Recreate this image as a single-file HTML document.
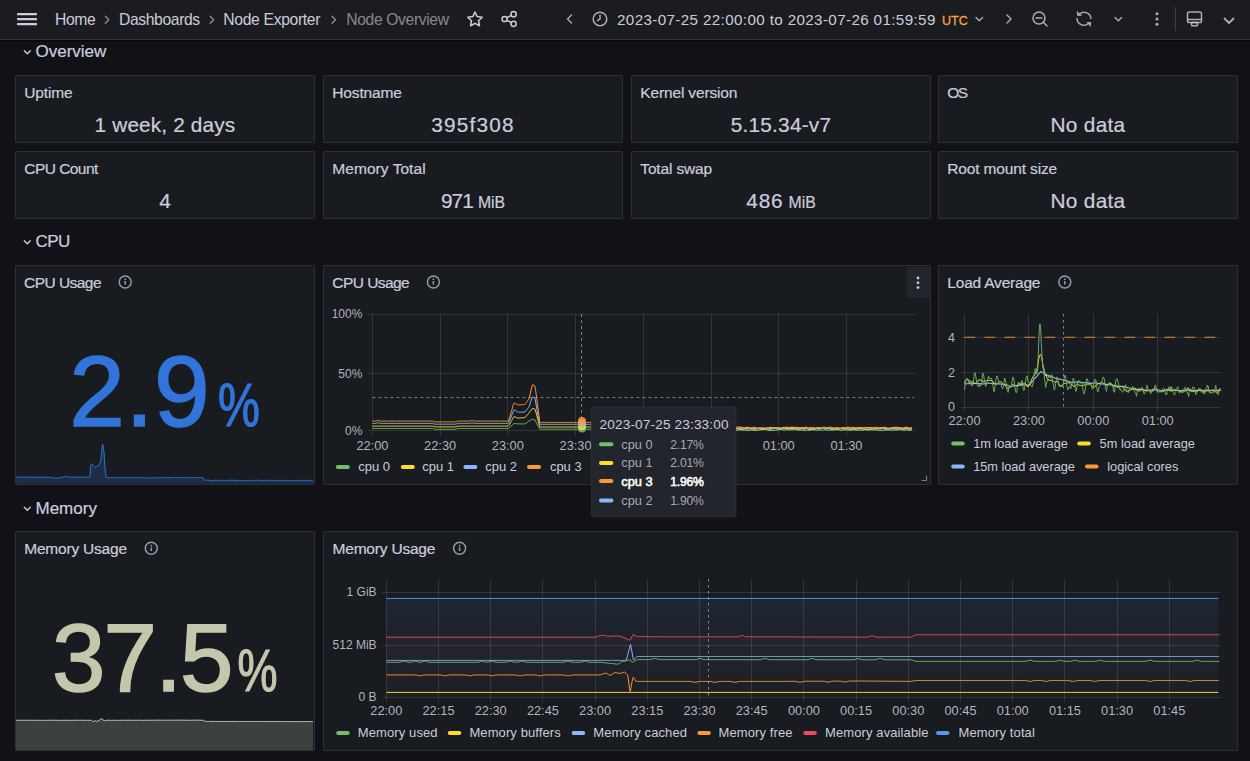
<!DOCTYPE html><html><head><meta charset="utf-8"><style>
html,body{margin:0;padding:0;width:1250px;height:761px;overflow:hidden;background:#111217;}
body{position:relative;font-family:"Liberation Sans",sans-serif;}
.t{position:absolute;white-space:nowrap;}
.p{position:absolute;box-sizing:border-box;background:#181b1f;border:1px solid rgba(204,204,220,0.12);border-radius:2px;}
svg{position:absolute;overflow:visible;}
</style></head><body>
<div style="position:absolute;left:0;top:40px;width:1250px;height:1px;background:#07080a"></div><div style="position:absolute;left:0;top:41px;width:1250px;height:1px;background:#0c0d10"></div>
<div style="position:absolute;left:0;top:0;width:1250px;height:39px;background:#1b1c20;border-bottom:1px solid rgba(204,204,220,0.14)"></div>
<svg style="left:0px;top:0px;" width="60" height="39" viewBox="0 0 60 39"><g fill="#ccccdc"><rect x="17" y="13" width="20" height="2.2" rx="0.5"/><rect x="17" y="18" width="20" height="2.2" rx="0.5"/><rect x="17" y="23" width="20" height="2.2" rx="0.5"/></g></svg>
<svg style="left:0px;top:0px;" width="1" height="1" viewBox="0 0 1 1"><polyline points="105.3,16.3 108.8,19.8 105.3,23.3" fill="none" stroke="rgba(204,204,220,0.65)" stroke-width="1.3" stroke-linecap="round" stroke-linejoin="round"/></svg>
<svg style="left:0px;top:0px;" width="1" height="1" viewBox="0 0 1 1"><polyline points="210.2,16.3 213.7,19.8 210.2,23.3" fill="none" stroke="rgba(204,204,220,0.65)" stroke-width="1.3" stroke-linecap="round" stroke-linejoin="round"/></svg>
<svg style="left:0px;top:0px;" width="1" height="1" viewBox="0 0 1 1"><polyline points="332,16.3 335.5,19.8 332,23.3" fill="none" stroke="rgba(204,204,220,0.65)" stroke-width="1.3" stroke-linecap="round" stroke-linejoin="round"/></svg>
<svg style="left:0px;top:0px;" width="1" height="1" viewBox="0 0 1 1"><polygon points="475.00,12.00 477.17,16.61 482.23,17.25 478.52,20.74 479.47,25.75 475.00,23.30 470.53,25.75 471.48,20.74 467.77,17.25 472.83,16.61" fill="none" stroke="#ccccdc" stroke-width="1.5" stroke-linejoin="round"/></svg>
<svg style="left:0px;top:0px;" width="1" height="1" viewBox="0 0 1 1"><g fill="none" stroke="#ccccdc" stroke-width="1.5"><circle cx="513.6" cy="14.2" r="2.6"/><circle cx="513.6" cy="23.8" r="2.6"/><circle cx="504.6" cy="19" r="2.6"/><line x1="507" y1="17.7" x2="511.3" y2="15.4"/><line x1="507" y1="20.3" x2="511.3" y2="22.6"/></g></svg>
<svg style="left:0px;top:0px;" width="1" height="1" viewBox="0 0 1 1"><polyline points="571.5,15 567.5,19 571.5,23" fill="none" stroke="rgba(204,204,220,0.82)" stroke-width="1.4" stroke-linecap="round" stroke-linejoin="round"/></svg>
<svg style="left:0px;top:0px;" width="1" height="1" viewBox="0 0 1 1"><g fill="none" stroke="rgba(204,204,220,0.82)" stroke-width="1.5"><circle cx="600" cy="19" r="6.8"/><polyline points="600,15 600,19.2 597.5,20.5" stroke-linecap="round" stroke-linejoin="round"/></g></svg>
<svg style="left:0px;top:0px;" width="1" height="1" viewBox="0 0 1 1"><polyline points="976,17.5 979.3,20.8 982.6,17.5" fill="none" stroke="rgba(204,204,220,0.82)" stroke-width="1.4" stroke-linecap="round" stroke-linejoin="round"/></svg>
<svg style="left:0px;top:0px;" width="1" height="1" viewBox="0 0 1 1"><polyline points="1007,15 1011,19 1007,23" fill="none" stroke="rgba(204,204,220,0.82)" stroke-width="1.4" stroke-linecap="round" stroke-linejoin="round"/></svg>
<svg style="left:0px;top:0px;" width="1" height="1" viewBox="0 0 1 1"><g fill="none" stroke="rgba(204,204,220,0.82)" stroke-width="1.5" stroke-linecap="round"><circle cx="1039" cy="18" r="6"/><line x1="1043.5" y1="22.5" x2="1047" y2="26"/><line x1="1036" y1="18" x2="1042" y2="18"/></g></svg>
<svg style="left:0px;top:0px;" width="1" height="1" viewBox="0 0 1 1"><g fill="none" stroke="#a4a5ad" stroke-width="1.5" stroke-linecap="round"><path d="M1079.5,14.2 A6.8,6.8 0 0 1 1090.9,18.3"/><path d="M1077,18.6 A6.8,6.8 0 0 0 1088.6,23.2"/></g><g fill="#a4a5ad"><polygon points="1076.8,10.8 1077.2,16 1082.2,15.8"/><polygon points="1086.3,22 1091.2,22 1090.8,27"/></g></svg>
<svg style="left:0px;top:0px;" width="1" height="1" viewBox="0 0 1 1"><polyline points="1115,17.5 1118.3,20.8 1121.6,17.5" fill="none" stroke="rgba(204,204,220,0.82)" stroke-width="1.4" stroke-linecap="round" stroke-linejoin="round"/></svg>
<svg style="left:0px;top:0px;" width="1" height="1" viewBox="0 0 1 1"><g fill="rgba(204,204,220,0.82)"><circle cx="1157" cy="13.8" r="1.5"/><circle cx="1157" cy="19" r="1.5"/><circle cx="1157" cy="24.2" r="1.5"/></g></svg>
<div style="position:absolute;left:1175px;top:7px;width:1px;height:24px;background:rgba(204,204,220,0.2)"></div>
<svg style="left:0px;top:0px;" width="1" height="1" viewBox="0 0 1 1"><g fill="none" stroke="rgba(204,204,220,0.82)" stroke-width="1.5" stroke-linejoin="round"><rect x="1187.5" y="12" width="14" height="10.5" rx="1.8"/><line x1="1187.5" y1="19.5" x2="1201.5" y2="19.5"/><rect x="1191.5" y="22.5" width="6" height="3.2" rx="0.8"/></g></svg>
<svg style="left:0px;top:0px;" width="1" height="1" viewBox="0 0 1 1"><polyline points="1224.5,18.5 1229,23 1233.5,18.5" fill="none" stroke="rgba(204,204,220,0.82)" stroke-width="1.8" stroke-linecap="round" stroke-linejoin="round"/></svg>
<svg style="left:0px;top:0px;" width="1" height="1" viewBox="0 0 1 1"><polyline points="24.3,50.7 27.3,53.7 30.3,50.7" fill="none" stroke="#ccccdc" stroke-width="1.4" stroke-linecap="round" stroke-linejoin="round"/></svg>
<svg style="left:0px;top:0px;" width="1" height="1" viewBox="0 0 1 1"><polyline points="24.3,240.7 27.3,243.7 30.3,240.7" fill="none" stroke="#ccccdc" stroke-width="1.4" stroke-linecap="round" stroke-linejoin="round"/></svg>
<svg style="left:0px;top:0px;" width="1" height="1" viewBox="0 0 1 1"><polyline points="24.3,507.20000000000005 27.3,510.20000000000005 30.3,507.20000000000005" fill="none" stroke="#ccccdc" stroke-width="1.4" stroke-linecap="round" stroke-linejoin="round"/></svg>
<div class="p" style="left:15px;top:75px;width:300px;height:68px"></div>
<div class="p" style="left:323px;top:75px;width:300px;height:68px"></div>
<div class="p" style="left:631px;top:75px;width:300px;height:68px"></div>
<div class="p" style="left:938px;top:75px;width:300px;height:68px"></div>
<div class="p" style="left:15px;top:151px;width:300px;height:68px"></div>
<div class="p" style="left:323px;top:151px;width:300px;height:68px"></div>
<div class="p" style="left:631px;top:151px;width:300px;height:68px"></div>
<div class="p" style="left:938px;top:151px;width:300px;height:68px"></div>
<div class="p" style="left:15px;top:265px;width:300px;height:220px"></div>
<div class="p" style="left:323px;top:265px;width:608px;height:220px"></div>
<div class="p" style="left:938px;top:265px;width:300px;height:220px"></div>
<div class="p" style="left:15px;top:531px;width:300px;height:220px"></div>
<div class="p" style="left:323px;top:531px;width:915px;height:220px"></div>
<svg style="left:0px;top:0px;" width="1" height="1" viewBox="0 0 1 1"><g><circle cx="125.2" cy="281.90000000000003" r="6.0" fill="none" stroke="rgba(204,204,220,0.72)" stroke-width="1.45"/><rect x="124.45" y="281.00000000000006" width="1.5" height="3.6" fill="rgba(204,204,220,0.72)"/><rect x="124.45" y="278.50000000000006" width="1.5" height="1.5" fill="rgba(204,204,220,0.72)"/></g></svg>
<svg style="left:0px;top:0px;" width="1" height="1" viewBox="0 0 1 1"><g><circle cx="433.4" cy="281.90000000000003" r="6.0" fill="none" stroke="rgba(204,204,220,0.72)" stroke-width="1.45"/><rect x="432.65" y="281.00000000000006" width="1.5" height="3.6" fill="rgba(204,204,220,0.72)"/><rect x="432.65" y="278.50000000000006" width="1.5" height="1.5" fill="rgba(204,204,220,0.72)"/></g></svg>
<svg style="left:0px;top:0px;" width="1" height="1" viewBox="0 0 1 1"><g><circle cx="1064.8" cy="281.90000000000003" r="6.0" fill="none" stroke="rgba(204,204,220,0.72)" stroke-width="1.45"/><rect x="1064.05" y="281.00000000000006" width="1.5" height="3.6" fill="rgba(204,204,220,0.72)"/><rect x="1064.05" y="278.50000000000006" width="1.5" height="1.5" fill="rgba(204,204,220,0.72)"/></g></svg>
<svg style="left:0px;top:0px;" width="1" height="1" viewBox="0 0 1 1"><g><circle cx="151.3" cy="548.3000000000001" r="6.0" fill="none" stroke="rgba(204,204,220,0.72)" stroke-width="1.45"/><rect x="150.55" y="547.4000000000001" width="1.5" height="3.6" fill="rgba(204,204,220,0.72)"/><rect x="150.55" y="544.9000000000001" width="1.5" height="1.5" fill="rgba(204,204,220,0.72)"/></g></svg>
<svg style="left:0px;top:0px;" width="1" height="1" viewBox="0 0 1 1"><g><circle cx="459.6" cy="548.3000000000001" r="6.0" fill="none" stroke="rgba(204,204,220,0.72)" stroke-width="1.45"/><rect x="458.85" y="547.4000000000001" width="1.5" height="3.6" fill="rgba(204,204,220,0.72)"/><rect x="458.85" y="544.9000000000001" width="1.5" height="1.5" fill="rgba(204,204,220,0.72)"/></g></svg>
<svg style="left:0;top:0" width="1250" height="761" viewBox="0 0 1250 761" font-family="Liberation Sans, sans-serif"><path d="M16.00,477.11 L16.50,477.03 L17.00,477.28 L17.50,476.99 L18.00,477.22 L18.50,477.13 L19.00,476.98 L19.50,477.20 L20.00,476.97 L20.50,477.17 L21.00,476.98 L21.50,477.00 L22.00,477.16 L22.50,477.36 L23.00,477.01 L23.50,477.06 L24.00,477.26 L24.50,477.42 L25.00,477.24 L25.50,477.15 L26.00,477.44 L26.50,476.97 L27.00,477.38 L27.50,477.09 L28.00,477.02 L28.50,477.01 L29.00,477.10 L29.50,477.36 L30.00,477.04 L30.50,477.24 L31.00,477.27 L31.50,477.14 L32.00,477.22 L32.50,476.98 L33.00,476.98 L33.50,477.05 L34.00,477.29 L34.50,477.16 L35.00,477.11 L35.50,477.24 L36.00,477.18 L36.50,477.10 L37.00,477.35 L37.50,477.30 L38.00,477.07 L38.50,477.24 L39.00,477.21 L39.50,477.39 L40.00,477.31 L40.50,477.09 L41.00,477.44 L41.50,477.01 L42.00,477.16 L42.50,477.33 L43.00,477.03 L43.50,477.19 L44.00,476.97 L44.50,477.28 L45.00,477.33 L45.50,477.24 L46.00,477.39 L46.50,477.11 L47.00,477.30 L47.50,477.25 L48.00,477.24 L48.50,477.18 L49.00,477.37 L49.50,477.42 L50.00,477.19 L50.50,477.37 L51.00,477.16 L51.50,477.58 L52.00,477.64 L52.50,477.90 L53.00,477.91 L53.50,477.73 L54.00,477.88 L54.50,478.11 L55.00,477.88 L55.50,478.19 L56.00,478.13 L56.50,478.02 L57.00,477.90 L57.50,478.16 L58.00,477.75 L58.50,477.72 L59.00,477.70 L59.50,477.84 L60.00,477.36 L60.50,477.45 L61.00,477.41 L61.50,477.48 L62.00,477.36 L62.50,477.27 L63.00,476.86 L63.50,476.82 L64.00,476.68 L64.50,476.83 L65.00,476.75 L65.50,476.24 L66.00,476.14 L66.50,476.28 L67.00,476.39 L67.50,476.63 L68.00,476.79 L68.50,476.74 L69.00,476.73 L69.50,477.05 L70.00,477.13 L70.50,477.23 L71.00,477.43 L71.50,477.30 L72.00,477.21 L72.50,477.26 L73.00,477.29 L73.50,476.98 L74.00,477.40 L74.50,477.34 L75.00,477.39 L75.50,477.35 L76.00,477.15 L76.50,477.15 L77.00,477.00 L77.50,477.27 L78.00,476.98 L78.50,476.98 L79.00,477.05 L79.50,477.03 L80.00,477.12 L80.50,476.98 L81.00,476.95 L81.50,477.03 L82.00,477.00 L82.50,477.13 L83.00,476.96 L83.50,477.39 L84.00,477.26 L84.50,477.02 L85.00,477.08 L85.50,477.12 L86.00,477.13 L86.50,477.01 L87.00,477.37 L87.50,477.45 L88.00,477.18 L88.50,477.19 L89.00,476.99 L89.50,477.00 L90.00,474.58 L90.50,468.19 L91.00,464.63 L91.50,464.21 L92.00,464.06 L92.50,465.03 L93.00,465.31 L93.50,465.62 L94.00,466.32 L94.50,466.56 L95.00,467.31 L95.50,467.25 L96.00,466.91 L96.50,466.54 L97.00,466.03 L97.50,465.80 L98.00,465.41 L98.50,465.42 L99.00,465.02 L99.50,464.03 L100.00,462.69 L100.50,461.53 L101.00,459.13 L101.50,454.16 L102.00,449.04 L102.50,443.96 L103.00,445.59 L103.50,448.83 L104.00,451.86 L104.50,460.34 L105.00,468.59 L105.50,473.29 L106.00,475.84 L106.50,477.49 L107.00,477.48 L107.50,477.70 L108.00,477.83 L108.50,477.57 L109.00,477.82 L109.50,477.84 L110.00,477.83 L110.50,477.53 L111.00,477.46 L111.50,477.46 L112.00,477.45 L112.50,477.45 L113.00,477.66 L113.50,477.80 L114.00,477.77 L114.50,477.59 L115.00,477.68 L115.50,477.75 L116.00,477.39 L116.50,477.68 L117.00,477.80 L117.50,477.74 L118.00,477.73 L118.50,477.59 L119.00,477.44 L119.50,477.74 L120.00,477.52 L120.50,477.75 L121.00,477.84 L121.50,477.55 L122.00,477.55 L122.50,477.82 L123.00,477.71 L123.50,477.44 L124.00,477.41 L124.50,477.43 L125.00,477.80 L125.50,477.75 L126.00,477.42 L126.50,477.76 L127.00,477.84 L127.50,477.68 L128.00,477.53 L128.50,477.62 L129.00,477.42 L129.50,477.36 L130.00,477.84 L130.50,477.67 L131.00,477.61 L131.50,477.82 L132.00,477.57 L132.50,477.79 L133.00,477.76 L133.50,477.46 L134.00,477.48 L134.50,477.50 L135.00,477.47 L135.50,477.64 L136.00,477.48 L136.50,477.56 L137.00,477.42 L137.50,477.81 L138.00,477.53 L138.50,477.58 L139.00,477.64 L139.50,477.80 L140.00,477.56 L140.50,477.82 L141.00,477.63 L141.50,477.66 L142.00,477.67 L142.50,477.43 L143.00,477.66 L143.50,477.55 L144.00,477.47 L144.50,477.88 L145.00,477.59 L145.50,477.75 L146.00,477.89 L146.50,477.82 L147.00,477.72 L147.50,477.83 L148.00,477.87 L148.50,478.00 L149.00,477.67 L149.50,477.92 L150.00,477.77 L150.50,477.77 L151.00,478.00 L151.50,477.84 L152.00,477.85 L152.50,477.93 L153.00,477.99 L153.50,477.73 L154.00,477.80 L154.50,477.72 L155.00,477.71 L155.50,477.78 L156.00,477.64 L156.50,477.66 L157.00,477.61 L157.50,477.82 L158.00,477.68 L158.50,477.75 L159.00,477.76 L159.50,477.40 L160.00,477.53 L160.50,477.72 L161.00,477.67 L161.50,477.32 L162.00,477.32 L162.50,477.48 L163.00,477.29 L163.50,477.38 L164.00,477.30 L164.50,477.60 L165.00,477.65 L165.50,477.71 L166.00,477.34 L166.50,477.62 L167.00,477.60 L167.50,477.34 L168.00,477.71 L168.50,477.75 L169.00,477.38 L169.50,477.75 L170.00,477.47 L170.50,477.52 L171.00,477.77 L171.50,477.69 L172.00,477.36 L172.50,477.49 L173.00,477.54 L173.50,477.45 L174.00,477.38 L174.50,477.44 L175.00,477.65 L175.50,477.30 L176.00,477.56 L176.50,477.51 L177.00,477.30 L177.50,477.46 L178.00,477.60 L178.50,477.55 L179.00,477.33 L179.50,477.79 L180.00,477.69 L180.50,477.78 L181.00,477.35 L181.50,477.43 L182.00,477.32 L182.50,477.69 L183.00,477.44 L183.50,477.37 L184.00,477.52 L184.50,477.76 L185.00,477.72 L185.50,477.44 L186.00,477.39 L186.50,477.77 L187.00,477.60 L187.50,477.66 L188.00,477.36 L188.50,477.35 L189.00,477.66 L189.50,477.53 L190.00,477.36 L190.50,477.79 L191.00,477.64 L191.50,477.72 L192.00,477.37 L192.50,477.75 L193.00,477.36 L193.50,477.76 L194.00,477.56 L194.50,477.50 L195.00,477.61 L195.50,477.80 L196.00,477.47 L196.50,477.40 L197.00,477.60 L197.50,477.46 L198.00,477.39 L198.50,477.42 L199.00,477.37 L199.50,477.44 L200.00,477.50 L200.50,477.50 L201.00,477.73 L201.50,477.49 L202.00,477.60 L202.50,477.44 L203.00,477.52 L203.50,478.26 L204.00,479.28 L204.50,480.06 L205.00,480.42 L205.50,480.33 L206.00,480.15 L206.50,480.29 L207.00,480.52 L207.50,480.11 L208.00,480.47 L208.50,480.28 L209.00,480.31 L209.50,480.48 L210.00,480.26 L210.50,480.32 L211.00,480.41 L211.50,480.56 L212.00,480.24 L212.50,480.49 L213.00,480.43 L213.50,480.39 L214.00,480.28 L214.50,480.25 L215.00,480.11 L215.50,480.15 L216.00,480.12 L216.50,480.45 L217.00,480.21 L217.50,480.17 L218.00,480.13 L218.50,480.51 L219.00,480.53 L219.50,480.43 L220.00,480.23 L220.50,480.22 L221.00,480.24 L221.50,480.33 L222.00,480.18 L222.50,480.32 L223.00,480.23 L223.50,480.58 L224.00,480.59 L224.50,480.38 L225.00,480.23 L225.50,480.59 L226.00,480.26 L226.50,480.29 L227.00,480.11 L227.50,480.30 L228.00,480.35 L228.50,480.37 L229.00,480.22 L229.50,480.37 L230.00,480.12 L230.50,480.25 L231.00,480.17 L231.50,480.32 L232.00,480.15 L232.50,480.14 L233.00,480.28 L233.50,480.25 L234.00,480.42 L234.50,480.40 L235.00,480.51 L235.50,480.46 L236.00,480.50 L236.50,480.58 L237.00,480.33 L237.50,480.30 L238.00,480.63 L238.50,480.22 L239.00,480.51 L239.50,480.47 L240.00,480.17 L240.50,480.57 L241.00,480.60 L241.50,480.47 L242.00,480.52 L242.50,480.56 L243.00,480.23 L243.50,480.42 L244.00,480.41 L244.50,480.58 L245.00,480.56 L245.50,480.58 L246.00,480.46 L246.50,480.61 L247.00,480.51 L247.50,480.52 L248.00,480.29 L248.50,480.19 L249.00,480.24 L249.50,480.35 L250.00,480.23 L250.50,480.60 L251.00,480.46 L251.50,480.49 L252.00,480.49 L252.50,480.52 L253.00,480.43 L253.50,480.19 L254.00,480.59 L254.50,480.56 L255.00,480.44 L255.50,480.46 L256.00,480.52 L256.50,480.23 L257.00,480.56 L257.50,480.32 L258.00,480.24 L258.50,480.33 L259.00,480.57 L259.50,480.30 L260.00,480.57 L260.50,480.69 L261.00,480.45 L261.50,480.40 L262.00,480.45 L262.50,480.55 L263.00,480.60 L263.50,480.52 L264.00,480.54 L264.50,480.25 L265.00,480.29 L265.50,480.35 L266.00,480.59 L266.50,480.37 L267.00,480.51 L267.50,480.23 L268.00,480.26 L268.50,480.36 L269.00,480.56 L269.50,480.58 L270.00,480.57 L270.50,480.38 L271.00,480.49 L271.50,480.47 L272.00,480.47 L272.50,480.30 L273.00,480.69 L273.50,480.34 L274.00,480.73 L274.50,480.71 L275.00,480.25 L275.50,480.48 L276.00,480.66 L276.50,480.73 L277.00,480.48 L277.50,480.39 L278.00,480.36 L278.50,480.73 L279.00,480.36 L279.50,480.55 L280.00,480.33 L280.50,480.52 L281.00,480.74 L281.50,480.33 L282.00,480.67 L282.50,480.52 L283.00,480.71 L283.50,480.62 L284.00,480.39 L284.50,480.72 L285.00,480.52 L285.50,480.29 L286.00,480.28 L286.50,480.52 L287.00,480.50 L287.50,480.43 L288.00,480.35 L288.50,480.45 L289.00,480.44 L289.50,480.71 L290.00,480.29 L290.50,480.66 L291.00,480.71 L291.50,480.35 L292.00,480.76 L292.50,480.65 L293.00,480.75 L293.50,480.44 L294.00,480.48 L294.50,480.50 L295.00,480.80 L295.50,480.60 L296.00,480.48 L296.50,480.52 L297.00,480.44 L297.50,480.33 L298.00,480.36 L298.50,480.73 L299.00,480.45 L299.50,480.78 L300.00,480.44 L300.50,480.45 L301.00,480.57 L301.50,480.41 L302.00,480.51 L302.50,480.80 L303.00,480.76 L303.50,480.73 L304.00,480.64 L304.50,480.78 L305.00,480.80 L305.50,480.60 L306.00,480.69 L306.50,480.36 L307.00,480.70 L307.50,480.56 L308.00,480.71 L308.50,480.66 L309.00,480.48 L309.50,480.36 L310.00,480.81 L310.50,480.41 L311.00,480.58 L311.50,480.52 L312.00,480.50 L312.50,480.72 L313.00,480.84 L313.00,483.5 L16.00,483.5 Z" fill="rgba(50,116,217,0.22)" stroke="none"/><path d="M16.00,477.11 L16.50,477.03 L17.00,477.28 L17.50,476.99 L18.00,477.22 L18.50,477.13 L19.00,476.98 L19.50,477.20 L20.00,476.97 L20.50,477.17 L21.00,476.98 L21.50,477.00 L22.00,477.16 L22.50,477.36 L23.00,477.01 L23.50,477.06 L24.00,477.26 L24.50,477.42 L25.00,477.24 L25.50,477.15 L26.00,477.44 L26.50,476.97 L27.00,477.38 L27.50,477.09 L28.00,477.02 L28.50,477.01 L29.00,477.10 L29.50,477.36 L30.00,477.04 L30.50,477.24 L31.00,477.27 L31.50,477.14 L32.00,477.22 L32.50,476.98 L33.00,476.98 L33.50,477.05 L34.00,477.29 L34.50,477.16 L35.00,477.11 L35.50,477.24 L36.00,477.18 L36.50,477.10 L37.00,477.35 L37.50,477.30 L38.00,477.07 L38.50,477.24 L39.00,477.21 L39.50,477.39 L40.00,477.31 L40.50,477.09 L41.00,477.44 L41.50,477.01 L42.00,477.16 L42.50,477.33 L43.00,477.03 L43.50,477.19 L44.00,476.97 L44.50,477.28 L45.00,477.33 L45.50,477.24 L46.00,477.39 L46.50,477.11 L47.00,477.30 L47.50,477.25 L48.00,477.24 L48.50,477.18 L49.00,477.37 L49.50,477.42 L50.00,477.19 L50.50,477.37 L51.00,477.16 L51.50,477.58 L52.00,477.64 L52.50,477.90 L53.00,477.91 L53.50,477.73 L54.00,477.88 L54.50,478.11 L55.00,477.88 L55.50,478.19 L56.00,478.13 L56.50,478.02 L57.00,477.90 L57.50,478.16 L58.00,477.75 L58.50,477.72 L59.00,477.70 L59.50,477.84 L60.00,477.36 L60.50,477.45 L61.00,477.41 L61.50,477.48 L62.00,477.36 L62.50,477.27 L63.00,476.86 L63.50,476.82 L64.00,476.68 L64.50,476.83 L65.00,476.75 L65.50,476.24 L66.00,476.14 L66.50,476.28 L67.00,476.39 L67.50,476.63 L68.00,476.79 L68.50,476.74 L69.00,476.73 L69.50,477.05 L70.00,477.13 L70.50,477.23 L71.00,477.43 L71.50,477.30 L72.00,477.21 L72.50,477.26 L73.00,477.29 L73.50,476.98 L74.00,477.40 L74.50,477.34 L75.00,477.39 L75.50,477.35 L76.00,477.15 L76.50,477.15 L77.00,477.00 L77.50,477.27 L78.00,476.98 L78.50,476.98 L79.00,477.05 L79.50,477.03 L80.00,477.12 L80.50,476.98 L81.00,476.95 L81.50,477.03 L82.00,477.00 L82.50,477.13 L83.00,476.96 L83.50,477.39 L84.00,477.26 L84.50,477.02 L85.00,477.08 L85.50,477.12 L86.00,477.13 L86.50,477.01 L87.00,477.37 L87.50,477.45 L88.00,477.18 L88.50,477.19 L89.00,476.99 L89.50,477.00 L90.00,474.58 L90.50,468.19 L91.00,464.63 L91.50,464.21 L92.00,464.06 L92.50,465.03 L93.00,465.31 L93.50,465.62 L94.00,466.32 L94.50,466.56 L95.00,467.31 L95.50,467.25 L96.00,466.91 L96.50,466.54 L97.00,466.03 L97.50,465.80 L98.00,465.41 L98.50,465.42 L99.00,465.02 L99.50,464.03 L100.00,462.69 L100.50,461.53 L101.00,459.13 L101.50,454.16 L102.00,449.04 L102.50,443.96 L103.00,445.59 L103.50,448.83 L104.00,451.86 L104.50,460.34 L105.00,468.59 L105.50,473.29 L106.00,475.84 L106.50,477.49 L107.00,477.48 L107.50,477.70 L108.00,477.83 L108.50,477.57 L109.00,477.82 L109.50,477.84 L110.00,477.83 L110.50,477.53 L111.00,477.46 L111.50,477.46 L112.00,477.45 L112.50,477.45 L113.00,477.66 L113.50,477.80 L114.00,477.77 L114.50,477.59 L115.00,477.68 L115.50,477.75 L116.00,477.39 L116.50,477.68 L117.00,477.80 L117.50,477.74 L118.00,477.73 L118.50,477.59 L119.00,477.44 L119.50,477.74 L120.00,477.52 L120.50,477.75 L121.00,477.84 L121.50,477.55 L122.00,477.55 L122.50,477.82 L123.00,477.71 L123.50,477.44 L124.00,477.41 L124.50,477.43 L125.00,477.80 L125.50,477.75 L126.00,477.42 L126.50,477.76 L127.00,477.84 L127.50,477.68 L128.00,477.53 L128.50,477.62 L129.00,477.42 L129.50,477.36 L130.00,477.84 L130.50,477.67 L131.00,477.61 L131.50,477.82 L132.00,477.57 L132.50,477.79 L133.00,477.76 L133.50,477.46 L134.00,477.48 L134.50,477.50 L135.00,477.47 L135.50,477.64 L136.00,477.48 L136.50,477.56 L137.00,477.42 L137.50,477.81 L138.00,477.53 L138.50,477.58 L139.00,477.64 L139.50,477.80 L140.00,477.56 L140.50,477.82 L141.00,477.63 L141.50,477.66 L142.00,477.67 L142.50,477.43 L143.00,477.66 L143.50,477.55 L144.00,477.47 L144.50,477.88 L145.00,477.59 L145.50,477.75 L146.00,477.89 L146.50,477.82 L147.00,477.72 L147.50,477.83 L148.00,477.87 L148.50,478.00 L149.00,477.67 L149.50,477.92 L150.00,477.77 L150.50,477.77 L151.00,478.00 L151.50,477.84 L152.00,477.85 L152.50,477.93 L153.00,477.99 L153.50,477.73 L154.00,477.80 L154.50,477.72 L155.00,477.71 L155.50,477.78 L156.00,477.64 L156.50,477.66 L157.00,477.61 L157.50,477.82 L158.00,477.68 L158.50,477.75 L159.00,477.76 L159.50,477.40 L160.00,477.53 L160.50,477.72 L161.00,477.67 L161.50,477.32 L162.00,477.32 L162.50,477.48 L163.00,477.29 L163.50,477.38 L164.00,477.30 L164.50,477.60 L165.00,477.65 L165.50,477.71 L166.00,477.34 L166.50,477.62 L167.00,477.60 L167.50,477.34 L168.00,477.71 L168.50,477.75 L169.00,477.38 L169.50,477.75 L170.00,477.47 L170.50,477.52 L171.00,477.77 L171.50,477.69 L172.00,477.36 L172.50,477.49 L173.00,477.54 L173.50,477.45 L174.00,477.38 L174.50,477.44 L175.00,477.65 L175.50,477.30 L176.00,477.56 L176.50,477.51 L177.00,477.30 L177.50,477.46 L178.00,477.60 L178.50,477.55 L179.00,477.33 L179.50,477.79 L180.00,477.69 L180.50,477.78 L181.00,477.35 L181.50,477.43 L182.00,477.32 L182.50,477.69 L183.00,477.44 L183.50,477.37 L184.00,477.52 L184.50,477.76 L185.00,477.72 L185.50,477.44 L186.00,477.39 L186.50,477.77 L187.00,477.60 L187.50,477.66 L188.00,477.36 L188.50,477.35 L189.00,477.66 L189.50,477.53 L190.00,477.36 L190.50,477.79 L191.00,477.64 L191.50,477.72 L192.00,477.37 L192.50,477.75 L193.00,477.36 L193.50,477.76 L194.00,477.56 L194.50,477.50 L195.00,477.61 L195.50,477.80 L196.00,477.47 L196.50,477.40 L197.00,477.60 L197.50,477.46 L198.00,477.39 L198.50,477.42 L199.00,477.37 L199.50,477.44 L200.00,477.50 L200.50,477.50 L201.00,477.73 L201.50,477.49 L202.00,477.60 L202.50,477.44 L203.00,477.52 L203.50,478.26 L204.00,479.28 L204.50,480.06 L205.00,480.42 L205.50,480.33 L206.00,480.15 L206.50,480.29 L207.00,480.52 L207.50,480.11 L208.00,480.47 L208.50,480.28 L209.00,480.31 L209.50,480.48 L210.00,480.26 L210.50,480.32 L211.00,480.41 L211.50,480.56 L212.00,480.24 L212.50,480.49 L213.00,480.43 L213.50,480.39 L214.00,480.28 L214.50,480.25 L215.00,480.11 L215.50,480.15 L216.00,480.12 L216.50,480.45 L217.00,480.21 L217.50,480.17 L218.00,480.13 L218.50,480.51 L219.00,480.53 L219.50,480.43 L220.00,480.23 L220.50,480.22 L221.00,480.24 L221.50,480.33 L222.00,480.18 L222.50,480.32 L223.00,480.23 L223.50,480.58 L224.00,480.59 L224.50,480.38 L225.00,480.23 L225.50,480.59 L226.00,480.26 L226.50,480.29 L227.00,480.11 L227.50,480.30 L228.00,480.35 L228.50,480.37 L229.00,480.22 L229.50,480.37 L230.00,480.12 L230.50,480.25 L231.00,480.17 L231.50,480.32 L232.00,480.15 L232.50,480.14 L233.00,480.28 L233.50,480.25 L234.00,480.42 L234.50,480.40 L235.00,480.51 L235.50,480.46 L236.00,480.50 L236.50,480.58 L237.00,480.33 L237.50,480.30 L238.00,480.63 L238.50,480.22 L239.00,480.51 L239.50,480.47 L240.00,480.17 L240.50,480.57 L241.00,480.60 L241.50,480.47 L242.00,480.52 L242.50,480.56 L243.00,480.23 L243.50,480.42 L244.00,480.41 L244.50,480.58 L245.00,480.56 L245.50,480.58 L246.00,480.46 L246.50,480.61 L247.00,480.51 L247.50,480.52 L248.00,480.29 L248.50,480.19 L249.00,480.24 L249.50,480.35 L250.00,480.23 L250.50,480.60 L251.00,480.46 L251.50,480.49 L252.00,480.49 L252.50,480.52 L253.00,480.43 L253.50,480.19 L254.00,480.59 L254.50,480.56 L255.00,480.44 L255.50,480.46 L256.00,480.52 L256.50,480.23 L257.00,480.56 L257.50,480.32 L258.00,480.24 L258.50,480.33 L259.00,480.57 L259.50,480.30 L260.00,480.57 L260.50,480.69 L261.00,480.45 L261.50,480.40 L262.00,480.45 L262.50,480.55 L263.00,480.60 L263.50,480.52 L264.00,480.54 L264.50,480.25 L265.00,480.29 L265.50,480.35 L266.00,480.59 L266.50,480.37 L267.00,480.51 L267.50,480.23 L268.00,480.26 L268.50,480.36 L269.00,480.56 L269.50,480.58 L270.00,480.57 L270.50,480.38 L271.00,480.49 L271.50,480.47 L272.00,480.47 L272.50,480.30 L273.00,480.69 L273.50,480.34 L274.00,480.73 L274.50,480.71 L275.00,480.25 L275.50,480.48 L276.00,480.66 L276.50,480.73 L277.00,480.48 L277.50,480.39 L278.00,480.36 L278.50,480.73 L279.00,480.36 L279.50,480.55 L280.00,480.33 L280.50,480.52 L281.00,480.74 L281.50,480.33 L282.00,480.67 L282.50,480.52 L283.00,480.71 L283.50,480.62 L284.00,480.39 L284.50,480.72 L285.00,480.52 L285.50,480.29 L286.00,480.28 L286.50,480.52 L287.00,480.50 L287.50,480.43 L288.00,480.35 L288.50,480.45 L289.00,480.44 L289.50,480.71 L290.00,480.29 L290.50,480.66 L291.00,480.71 L291.50,480.35 L292.00,480.76 L292.50,480.65 L293.00,480.75 L293.50,480.44 L294.00,480.48 L294.50,480.50 L295.00,480.80 L295.50,480.60 L296.00,480.48 L296.50,480.52 L297.00,480.44 L297.50,480.33 L298.00,480.36 L298.50,480.73 L299.00,480.45 L299.50,480.78 L300.00,480.44 L300.50,480.45 L301.00,480.57 L301.50,480.41 L302.00,480.51 L302.50,480.80 L303.00,480.76 L303.50,480.73 L304.00,480.64 L304.50,480.78 L305.00,480.80 L305.50,480.60 L306.00,480.69 L306.50,480.36 L307.00,480.70 L307.50,480.56 L308.00,480.71 L308.50,480.66 L309.00,480.48 L309.50,480.36 L310.00,480.81 L310.50,480.41 L311.00,480.58 L311.50,480.52 L312.00,480.50 L312.50,480.72 L313.00,480.84" fill="none" stroke="#3274D9" stroke-width="1.0" stroke-linejoin="round" /><path d="M16.00,720.25 L16.50,720.33 L17.00,720.26 L17.50,720.31 L18.00,720.28 L18.50,720.23 L19.00,720.23 L19.50,720.24 L20.00,720.38 L20.50,720.30 L21.00,720.24 L21.50,720.38 L22.00,720.40 L22.50,720.29 L23.00,720.23 L23.50,720.24 L24.00,720.22 L24.50,720.27 L25.00,720.22 L25.50,720.25 L26.00,720.25 L26.50,720.31 L27.00,720.38 L27.50,720.35 L28.00,720.28 L28.50,720.28 L29.00,720.30 L29.50,720.28 L30.00,720.27 L30.50,720.21 L31.00,720.26 L31.50,720.39 L32.00,720.23 L32.50,720.30 L33.00,720.33 L33.50,720.37 L34.00,720.24 L34.50,720.25 L35.00,720.25 L35.50,720.28 L36.00,720.29 L36.50,720.39 L37.00,720.37 L37.50,720.37 L38.00,720.20 L38.50,720.21 L39.00,720.34 L39.50,720.38 L40.00,720.29 L40.50,720.32 L41.00,720.20 L41.50,720.28 L42.00,720.39 L42.50,720.37 L43.00,720.37 L43.50,720.39 L44.00,720.25 L44.50,720.22 L45.00,720.23 L45.50,720.30 L46.00,720.34 L46.50,720.39 L47.00,720.34 L47.50,720.33 L48.00,720.35 L48.50,720.29 L49.00,720.31 L49.50,720.21 L50.00,720.36 L50.50,720.25 L51.00,720.38 L51.50,720.33 L52.00,720.26 L52.50,720.23 L53.00,720.25 L53.50,720.33 L54.00,720.34 L54.50,720.22 L55.00,720.21 L55.50,720.30 L56.00,720.32 L56.50,720.28 L57.00,720.24 L57.50,720.32 L58.00,720.20 L58.50,720.26 L59.00,720.29 L59.50,720.39 L60.00,720.33 L60.50,720.38 L61.00,720.30 L61.50,720.25 L62.00,720.25 L62.50,720.39 L63.00,720.34 L63.50,720.26 L64.00,720.20 L64.50,720.30 L65.00,720.33 L65.50,720.28 L66.00,720.25 L66.50,720.33 L67.00,720.39 L67.50,720.25 L68.00,720.21 L68.50,720.27 L69.00,720.28 L69.50,720.34 L70.00,720.24 L70.50,720.36 L71.00,720.35 L71.50,720.30 L72.00,720.24 L72.50,720.39 L73.00,720.26 L73.50,720.36 L74.00,720.25 L74.50,720.24 L75.00,720.35 L75.50,720.26 L76.00,720.39 L76.50,720.30 L77.00,720.24 L77.50,720.24 L78.00,720.28 L78.50,720.33 L79.00,720.39 L79.50,720.23 L80.00,720.28 L80.50,720.24 L81.00,720.39 L81.50,720.23 L82.00,720.21 L82.50,720.21 L83.00,720.28 L83.50,720.38 L84.00,720.38 L84.50,720.35 L85.00,720.40 L85.50,720.39 L86.00,720.27 L86.50,720.24 L87.00,720.39 L87.50,720.35 L88.00,720.21 L88.50,720.33 L89.00,720.28 L89.50,720.27 L90.00,720.27 L90.50,720.23 L91.00,720.20 L91.50,720.58 L92.00,720.92 L92.50,721.37 L93.00,721.52 L93.50,721.44 L94.00,721.04 L94.50,720.82 L95.00,720.66 L95.50,720.91 L96.00,721.09 L96.50,721.26 L97.00,721.59 L97.50,721.27 L98.00,721.08 L98.50,720.64 L99.00,720.37 L99.50,720.18 L100.00,719.71 L100.50,719.48 L101.00,719.26 L101.50,718.95 L102.00,718.51 L102.50,719.11 L103.00,719.71 L103.50,720.48 L104.00,720.95 L104.50,720.87 L105.00,720.73 L105.50,720.44 L106.00,720.25 L106.50,720.39 L107.00,720.32 L107.50,720.25 L108.00,720.34 L108.50,720.26 L109.00,720.25 L109.50,720.20 L110.00,720.35 L110.50,720.38 L111.00,720.32 L111.50,720.38 L112.00,720.20 L112.50,720.24 L113.00,720.29 L113.50,720.38 L114.00,720.38 L114.50,720.27 L115.00,720.24 L115.50,720.27 L116.00,720.29 L116.50,720.37 L117.00,720.22 L117.50,720.35 L118.00,720.33 L118.50,720.35 L119.00,720.34 L119.50,720.31 L120.00,720.25 L120.50,720.25 L121.00,720.25 L121.50,720.34 L122.00,720.20 L122.50,720.22 L123.00,720.33 L123.50,720.23 L124.00,720.19 L124.50,720.18 L125.00,720.29 L125.50,720.24 L126.00,720.37 L126.50,720.35 L127.00,720.37 L127.50,720.23 L128.00,720.19 L128.50,720.19 L129.00,720.27 L129.50,720.31 L130.00,720.26 L130.50,720.22 L131.00,720.25 L131.50,720.29 L132.00,720.30 L132.50,720.32 L133.00,720.34 L133.50,720.30 L134.00,720.19 L134.50,720.33 L135.00,720.22 L135.50,720.28 L136.00,720.24 L136.50,720.31 L137.00,720.20 L137.50,720.21 L138.00,720.21 L138.50,720.19 L139.00,720.34 L139.50,720.28 L140.00,720.22 L140.50,720.24 L141.00,720.36 L141.50,720.26 L142.00,720.20 L142.50,720.32 L143.00,720.29 L143.50,720.35 L144.00,720.18 L144.50,720.25 L145.00,720.32 L145.50,720.32 L146.00,720.34 L146.50,720.16 L147.00,720.21 L147.50,720.17 L148.00,720.19 L148.50,720.34 L149.00,720.27 L149.50,720.33 L150.00,720.22 L150.50,720.32 L151.00,720.24 L151.50,720.20 L152.00,720.30 L152.50,720.33 L153.00,720.17 L153.50,720.26 L154.00,720.27 L154.50,720.19 L155.00,720.22 L155.50,720.17 L156.00,720.18 L156.50,720.19 L157.00,720.26 L157.50,720.27 L158.00,720.18 L158.50,720.14 L159.00,720.20 L159.50,720.27 L160.00,720.17 L160.50,720.20 L161.00,720.18 L161.50,720.29 L162.00,720.24 L162.50,720.15 L163.00,720.15 L163.50,720.21 L164.00,720.24 L164.50,720.26 L165.00,720.15 L165.50,720.16 L166.00,720.27 L166.50,720.21 L167.00,720.18 L167.50,720.19 L168.00,720.32 L168.50,720.19 L169.00,720.24 L169.50,720.20 L170.00,720.21 L170.50,720.30 L171.00,720.32 L171.50,720.19 L172.00,720.16 L172.50,720.27 L173.00,720.16 L173.50,720.12 L174.00,720.30 L174.50,720.20 L175.00,720.28 L175.50,720.20 L176.00,720.29 L176.50,720.21 L177.00,720.15 L177.50,720.12 L178.00,720.22 L178.50,720.24 L179.00,720.30 L179.50,720.13 L180.00,720.24 L180.50,720.19 L181.00,720.21 L181.50,720.14 L182.00,720.17 L182.50,720.21 L183.00,720.29 L183.50,720.13 L184.00,720.21 L184.50,720.27 L185.00,720.30 L185.50,720.14 L186.00,720.13 L186.50,720.29 L187.00,720.30 L187.50,720.20 L188.00,720.11 L188.50,720.29 L189.00,720.18 L189.50,720.28 L190.00,720.22 L190.50,720.26 L191.00,720.13 L191.50,720.26 L192.00,720.14 L192.50,720.18 L193.00,720.27 L193.50,720.27 L194.00,720.14 L194.50,720.14 L195.00,720.18 L195.50,720.20 L196.00,720.18 L196.50,720.12 L197.00,720.15 L197.50,720.24 L198.00,720.28 L198.50,720.11 L199.00,720.21 L199.50,720.25 L200.00,720.11 L200.50,720.27 L201.00,720.12 L201.50,720.22 L202.00,720.21 L202.50,720.23 L203.00,720.16 L203.50,720.48 L204.00,720.82 L204.50,721.09 L205.00,721.43 L205.50,721.39 L206.00,721.39 L206.50,721.31 L207.00,721.43 L207.50,721.40 L208.00,721.35 L208.50,721.46 L209.00,721.46 L209.50,721.40 L210.00,721.35 L210.50,721.40 L211.00,721.33 L211.50,721.34 L212.00,721.40 L212.50,721.33 L213.00,721.40 L213.50,721.42 L214.00,721.32 L214.50,721.44 L215.00,721.33 L215.50,721.47 L216.00,721.48 L216.50,721.42 L217.00,721.33 L217.50,721.42 L218.00,721.40 L218.50,721.52 L219.00,721.35 L219.50,721.50 L220.00,721.53 L220.50,721.48 L221.00,721.49 L221.50,721.37 L222.00,721.53 L222.50,721.43 L223.00,721.52 L223.50,721.52 L224.00,721.37 L224.50,721.49 L225.00,721.52 L225.50,721.35 L226.00,721.41 L226.50,721.49 L227.00,721.37 L227.50,721.52 L228.00,721.40 L228.50,721.51 L229.00,721.37 L229.50,721.45 L230.00,721.53 L230.50,721.39 L231.00,721.40 L231.50,721.45 L232.00,721.41 L232.50,721.36 L233.00,721.39 L233.50,721.39 L234.00,721.54 L234.50,721.49 L235.00,721.53 L235.50,721.39 L236.00,721.51 L236.50,721.38 L237.00,721.47 L237.50,721.49 L238.00,721.43 L238.50,721.54 L239.00,721.47 L239.50,721.48 L240.00,721.54 L240.50,721.39 L241.00,721.57 L241.50,721.49 L242.00,721.45 L242.50,721.53 L243.00,721.42 L243.50,721.57 L244.00,721.49 L244.50,721.45 L245.00,721.53 L245.50,721.46 L246.00,721.41 L246.50,721.53 L247.00,721.39 L247.50,721.54 L248.00,721.43 L248.50,721.51 L249.00,721.58 L249.50,721.50 L250.00,721.52 L250.50,721.45 L251.00,721.39 L251.50,721.39 L252.00,721.42 L252.50,721.51 L253.00,721.48 L253.50,721.49 L254.00,721.57 L254.50,721.42 L255.00,721.44 L255.50,721.52 L256.00,721.40 L256.50,721.40 L257.00,721.47 L257.50,721.42 L258.00,721.47 L258.50,721.44 L259.00,721.52 L259.50,721.52 L260.00,721.44 L260.50,721.53 L261.00,721.50 L261.50,721.43 L262.00,721.59 L262.50,721.46 L263.00,721.44 L263.50,721.43 L264.00,721.54 L264.50,721.58 L265.00,721.57 L265.50,721.49 L266.00,721.47 L266.50,721.42 L267.00,721.54 L267.50,721.53 L268.00,721.49 L268.50,721.55 L269.00,721.51 L269.50,721.61 L270.00,721.57 L270.50,721.47 L271.00,721.60 L271.50,721.43 L272.00,721.53 L272.50,721.51 L273.00,721.47 L273.50,721.44 L274.00,721.58 L274.50,721.43 L275.00,721.54 L275.50,721.62 L276.00,721.46 L276.50,721.47 L277.00,721.55 L277.50,721.54 L278.00,721.56 L278.50,721.60 L279.00,721.47 L279.50,721.50 L280.00,721.50 L280.50,721.45 L281.00,721.62 L281.50,721.60 L282.00,721.59 L282.50,721.44 L283.00,721.61 L283.50,721.59 L284.00,721.54 L284.50,721.60 L285.00,721.54 L285.50,721.49 L286.00,721.47 L286.50,721.50 L287.00,721.46 L287.50,721.52 L288.00,721.60 L288.50,721.59 L289.00,721.62 L289.50,721.60 L290.00,721.51 L290.50,721.57 L291.00,721.55 L291.50,721.62 L292.00,721.57 L292.50,721.52 L293.00,721.59 L293.50,721.66 L294.00,721.51 L294.50,721.64 L295.00,721.47 L295.50,721.52 L296.00,721.52 L296.50,721.62 L297.00,721.66 L297.50,721.62 L298.00,721.54 L298.50,721.65 L299.00,721.54 L299.50,721.52 L300.00,721.66 L300.50,721.60 L301.00,721.62 L301.50,721.61 L302.00,721.68 L302.50,721.57 L303.00,721.65 L303.50,721.62 L304.00,721.65 L304.50,721.57 L305.00,721.63 L305.50,721.60 L306.00,721.55 L306.50,721.53 L307.00,721.61 L307.50,721.51 L308.00,721.67 L308.50,721.52 L309.00,721.50 L309.50,721.51 L310.00,721.68 L310.50,721.56 L311.00,721.52 L311.50,721.50 L312.00,721.51 L312.50,721.64 L313.00,721.63 L313.00,750 L16.00,750 Z" fill="rgba(197,199,173,0.22)" stroke="none"/><path d="M16.00,720.25 L16.50,720.33 L17.00,720.26 L17.50,720.31 L18.00,720.28 L18.50,720.23 L19.00,720.23 L19.50,720.24 L20.00,720.38 L20.50,720.30 L21.00,720.24 L21.50,720.38 L22.00,720.40 L22.50,720.29 L23.00,720.23 L23.50,720.24 L24.00,720.22 L24.50,720.27 L25.00,720.22 L25.50,720.25 L26.00,720.25 L26.50,720.31 L27.00,720.38 L27.50,720.35 L28.00,720.28 L28.50,720.28 L29.00,720.30 L29.50,720.28 L30.00,720.27 L30.50,720.21 L31.00,720.26 L31.50,720.39 L32.00,720.23 L32.50,720.30 L33.00,720.33 L33.50,720.37 L34.00,720.24 L34.50,720.25 L35.00,720.25 L35.50,720.28 L36.00,720.29 L36.50,720.39 L37.00,720.37 L37.50,720.37 L38.00,720.20 L38.50,720.21 L39.00,720.34 L39.50,720.38 L40.00,720.29 L40.50,720.32 L41.00,720.20 L41.50,720.28 L42.00,720.39 L42.50,720.37 L43.00,720.37 L43.50,720.39 L44.00,720.25 L44.50,720.22 L45.00,720.23 L45.50,720.30 L46.00,720.34 L46.50,720.39 L47.00,720.34 L47.50,720.33 L48.00,720.35 L48.50,720.29 L49.00,720.31 L49.50,720.21 L50.00,720.36 L50.50,720.25 L51.00,720.38 L51.50,720.33 L52.00,720.26 L52.50,720.23 L53.00,720.25 L53.50,720.33 L54.00,720.34 L54.50,720.22 L55.00,720.21 L55.50,720.30 L56.00,720.32 L56.50,720.28 L57.00,720.24 L57.50,720.32 L58.00,720.20 L58.50,720.26 L59.00,720.29 L59.50,720.39 L60.00,720.33 L60.50,720.38 L61.00,720.30 L61.50,720.25 L62.00,720.25 L62.50,720.39 L63.00,720.34 L63.50,720.26 L64.00,720.20 L64.50,720.30 L65.00,720.33 L65.50,720.28 L66.00,720.25 L66.50,720.33 L67.00,720.39 L67.50,720.25 L68.00,720.21 L68.50,720.27 L69.00,720.28 L69.50,720.34 L70.00,720.24 L70.50,720.36 L71.00,720.35 L71.50,720.30 L72.00,720.24 L72.50,720.39 L73.00,720.26 L73.50,720.36 L74.00,720.25 L74.50,720.24 L75.00,720.35 L75.50,720.26 L76.00,720.39 L76.50,720.30 L77.00,720.24 L77.50,720.24 L78.00,720.28 L78.50,720.33 L79.00,720.39 L79.50,720.23 L80.00,720.28 L80.50,720.24 L81.00,720.39 L81.50,720.23 L82.00,720.21 L82.50,720.21 L83.00,720.28 L83.50,720.38 L84.00,720.38 L84.50,720.35 L85.00,720.40 L85.50,720.39 L86.00,720.27 L86.50,720.24 L87.00,720.39 L87.50,720.35 L88.00,720.21 L88.50,720.33 L89.00,720.28 L89.50,720.27 L90.00,720.27 L90.50,720.23 L91.00,720.20 L91.50,720.58 L92.00,720.92 L92.50,721.37 L93.00,721.52 L93.50,721.44 L94.00,721.04 L94.50,720.82 L95.00,720.66 L95.50,720.91 L96.00,721.09 L96.50,721.26 L97.00,721.59 L97.50,721.27 L98.00,721.08 L98.50,720.64 L99.00,720.37 L99.50,720.18 L100.00,719.71 L100.50,719.48 L101.00,719.26 L101.50,718.95 L102.00,718.51 L102.50,719.11 L103.00,719.71 L103.50,720.48 L104.00,720.95 L104.50,720.87 L105.00,720.73 L105.50,720.44 L106.00,720.25 L106.50,720.39 L107.00,720.32 L107.50,720.25 L108.00,720.34 L108.50,720.26 L109.00,720.25 L109.50,720.20 L110.00,720.35 L110.50,720.38 L111.00,720.32 L111.50,720.38 L112.00,720.20 L112.50,720.24 L113.00,720.29 L113.50,720.38 L114.00,720.38 L114.50,720.27 L115.00,720.24 L115.50,720.27 L116.00,720.29 L116.50,720.37 L117.00,720.22 L117.50,720.35 L118.00,720.33 L118.50,720.35 L119.00,720.34 L119.50,720.31 L120.00,720.25 L120.50,720.25 L121.00,720.25 L121.50,720.34 L122.00,720.20 L122.50,720.22 L123.00,720.33 L123.50,720.23 L124.00,720.19 L124.50,720.18 L125.00,720.29 L125.50,720.24 L126.00,720.37 L126.50,720.35 L127.00,720.37 L127.50,720.23 L128.00,720.19 L128.50,720.19 L129.00,720.27 L129.50,720.31 L130.00,720.26 L130.50,720.22 L131.00,720.25 L131.50,720.29 L132.00,720.30 L132.50,720.32 L133.00,720.34 L133.50,720.30 L134.00,720.19 L134.50,720.33 L135.00,720.22 L135.50,720.28 L136.00,720.24 L136.50,720.31 L137.00,720.20 L137.50,720.21 L138.00,720.21 L138.50,720.19 L139.00,720.34 L139.50,720.28 L140.00,720.22 L140.50,720.24 L141.00,720.36 L141.50,720.26 L142.00,720.20 L142.50,720.32 L143.00,720.29 L143.50,720.35 L144.00,720.18 L144.50,720.25 L145.00,720.32 L145.50,720.32 L146.00,720.34 L146.50,720.16 L147.00,720.21 L147.50,720.17 L148.00,720.19 L148.50,720.34 L149.00,720.27 L149.50,720.33 L150.00,720.22 L150.50,720.32 L151.00,720.24 L151.50,720.20 L152.00,720.30 L152.50,720.33 L153.00,720.17 L153.50,720.26 L154.00,720.27 L154.50,720.19 L155.00,720.22 L155.50,720.17 L156.00,720.18 L156.50,720.19 L157.00,720.26 L157.50,720.27 L158.00,720.18 L158.50,720.14 L159.00,720.20 L159.50,720.27 L160.00,720.17 L160.50,720.20 L161.00,720.18 L161.50,720.29 L162.00,720.24 L162.50,720.15 L163.00,720.15 L163.50,720.21 L164.00,720.24 L164.50,720.26 L165.00,720.15 L165.50,720.16 L166.00,720.27 L166.50,720.21 L167.00,720.18 L167.50,720.19 L168.00,720.32 L168.50,720.19 L169.00,720.24 L169.50,720.20 L170.00,720.21 L170.50,720.30 L171.00,720.32 L171.50,720.19 L172.00,720.16 L172.50,720.27 L173.00,720.16 L173.50,720.12 L174.00,720.30 L174.50,720.20 L175.00,720.28 L175.50,720.20 L176.00,720.29 L176.50,720.21 L177.00,720.15 L177.50,720.12 L178.00,720.22 L178.50,720.24 L179.00,720.30 L179.50,720.13 L180.00,720.24 L180.50,720.19 L181.00,720.21 L181.50,720.14 L182.00,720.17 L182.50,720.21 L183.00,720.29 L183.50,720.13 L184.00,720.21 L184.50,720.27 L185.00,720.30 L185.50,720.14 L186.00,720.13 L186.50,720.29 L187.00,720.30 L187.50,720.20 L188.00,720.11 L188.50,720.29 L189.00,720.18 L189.50,720.28 L190.00,720.22 L190.50,720.26 L191.00,720.13 L191.50,720.26 L192.00,720.14 L192.50,720.18 L193.00,720.27 L193.50,720.27 L194.00,720.14 L194.50,720.14 L195.00,720.18 L195.50,720.20 L196.00,720.18 L196.50,720.12 L197.00,720.15 L197.50,720.24 L198.00,720.28 L198.50,720.11 L199.00,720.21 L199.50,720.25 L200.00,720.11 L200.50,720.27 L201.00,720.12 L201.50,720.22 L202.00,720.21 L202.50,720.23 L203.00,720.16 L203.50,720.48 L204.00,720.82 L204.50,721.09 L205.00,721.43 L205.50,721.39 L206.00,721.39 L206.50,721.31 L207.00,721.43 L207.50,721.40 L208.00,721.35 L208.50,721.46 L209.00,721.46 L209.50,721.40 L210.00,721.35 L210.50,721.40 L211.00,721.33 L211.50,721.34 L212.00,721.40 L212.50,721.33 L213.00,721.40 L213.50,721.42 L214.00,721.32 L214.50,721.44 L215.00,721.33 L215.50,721.47 L216.00,721.48 L216.50,721.42 L217.00,721.33 L217.50,721.42 L218.00,721.40 L218.50,721.52 L219.00,721.35 L219.50,721.50 L220.00,721.53 L220.50,721.48 L221.00,721.49 L221.50,721.37 L222.00,721.53 L222.50,721.43 L223.00,721.52 L223.50,721.52 L224.00,721.37 L224.50,721.49 L225.00,721.52 L225.50,721.35 L226.00,721.41 L226.50,721.49 L227.00,721.37 L227.50,721.52 L228.00,721.40 L228.50,721.51 L229.00,721.37 L229.50,721.45 L230.00,721.53 L230.50,721.39 L231.00,721.40 L231.50,721.45 L232.00,721.41 L232.50,721.36 L233.00,721.39 L233.50,721.39 L234.00,721.54 L234.50,721.49 L235.00,721.53 L235.50,721.39 L236.00,721.51 L236.50,721.38 L237.00,721.47 L237.50,721.49 L238.00,721.43 L238.50,721.54 L239.00,721.47 L239.50,721.48 L240.00,721.54 L240.50,721.39 L241.00,721.57 L241.50,721.49 L242.00,721.45 L242.50,721.53 L243.00,721.42 L243.50,721.57 L244.00,721.49 L244.50,721.45 L245.00,721.53 L245.50,721.46 L246.00,721.41 L246.50,721.53 L247.00,721.39 L247.50,721.54 L248.00,721.43 L248.50,721.51 L249.00,721.58 L249.50,721.50 L250.00,721.52 L250.50,721.45 L251.00,721.39 L251.50,721.39 L252.00,721.42 L252.50,721.51 L253.00,721.48 L253.50,721.49 L254.00,721.57 L254.50,721.42 L255.00,721.44 L255.50,721.52 L256.00,721.40 L256.50,721.40 L257.00,721.47 L257.50,721.42 L258.00,721.47 L258.50,721.44 L259.00,721.52 L259.50,721.52 L260.00,721.44 L260.50,721.53 L261.00,721.50 L261.50,721.43 L262.00,721.59 L262.50,721.46 L263.00,721.44 L263.50,721.43 L264.00,721.54 L264.50,721.58 L265.00,721.57 L265.50,721.49 L266.00,721.47 L266.50,721.42 L267.00,721.54 L267.50,721.53 L268.00,721.49 L268.50,721.55 L269.00,721.51 L269.50,721.61 L270.00,721.57 L270.50,721.47 L271.00,721.60 L271.50,721.43 L272.00,721.53 L272.50,721.51 L273.00,721.47 L273.50,721.44 L274.00,721.58 L274.50,721.43 L275.00,721.54 L275.50,721.62 L276.00,721.46 L276.50,721.47 L277.00,721.55 L277.50,721.54 L278.00,721.56 L278.50,721.60 L279.00,721.47 L279.50,721.50 L280.00,721.50 L280.50,721.45 L281.00,721.62 L281.50,721.60 L282.00,721.59 L282.50,721.44 L283.00,721.61 L283.50,721.59 L284.00,721.54 L284.50,721.60 L285.00,721.54 L285.50,721.49 L286.00,721.47 L286.50,721.50 L287.00,721.46 L287.50,721.52 L288.00,721.60 L288.50,721.59 L289.00,721.62 L289.50,721.60 L290.00,721.51 L290.50,721.57 L291.00,721.55 L291.50,721.62 L292.00,721.57 L292.50,721.52 L293.00,721.59 L293.50,721.66 L294.00,721.51 L294.50,721.64 L295.00,721.47 L295.50,721.52 L296.00,721.52 L296.50,721.62 L297.00,721.66 L297.50,721.62 L298.00,721.54 L298.50,721.65 L299.00,721.54 L299.50,721.52 L300.00,721.66 L300.50,721.60 L301.00,721.62 L301.50,721.61 L302.00,721.68 L302.50,721.57 L303.00,721.65 L303.50,721.62 L304.00,721.65 L304.50,721.57 L305.00,721.63 L305.50,721.60 L306.00,721.55 L306.50,721.53 L307.00,721.61 L307.50,721.51 L308.00,721.67 L308.50,721.52 L309.00,721.50 L309.50,721.51 L310.00,721.68 L310.50,721.56 L311.00,721.52 L311.50,721.50 L312.00,721.51 L312.50,721.64 L313.00,721.63" fill="none" stroke="#d4d5c8" stroke-width="1.0" stroke-linejoin="round" /><line x1="372.5" y1="314" x2="372.5" y2="436" stroke="rgba(204,204,220,0.14)" stroke-width="1"/><line x1="440.5" y1="314" x2="440.5" y2="436" stroke="rgba(204,204,220,0.14)" stroke-width="1"/><line x1="507.5" y1="314" x2="507.5" y2="436" stroke="rgba(204,204,220,0.14)" stroke-width="1"/><line x1="575.5" y1="314" x2="575.5" y2="436" stroke="rgba(204,204,220,0.14)" stroke-width="1"/><line x1="643.5" y1="314" x2="643.5" y2="436" stroke="rgba(204,204,220,0.14)" stroke-width="1"/><line x1="711.5" y1="314" x2="711.5" y2="436" stroke="rgba(204,204,220,0.14)" stroke-width="1"/><line x1="778.5" y1="314" x2="778.5" y2="436" stroke="rgba(204,204,220,0.14)" stroke-width="1"/><line x1="846.5" y1="314" x2="846.5" y2="436" stroke="rgba(204,204,220,0.14)" stroke-width="1"/><line x1="368" y1="314.5" x2="914.7" y2="314.5" stroke="rgba(204,204,220,0.14)" stroke-width="1"/><line x1="368" y1="373.5" x2="914.7" y2="373.5" stroke="rgba(204,204,220,0.14)" stroke-width="1"/><line x1="368" y1="430.5" x2="914.7" y2="430.5" stroke="rgba(204,204,220,0.14)" stroke-width="1"/><text x="362.40" y="318.30" font-size="12" fill="rgba(204,204,220,0.88)" text-anchor="end" font-weight="400" letter-spacing="0">100%</text><text x="362.40" y="377.60" font-size="12" fill="rgba(204,204,220,0.88)" text-anchor="end" font-weight="400" letter-spacing="0">50%</text><text x="362.40" y="435.40" font-size="12" fill="rgba(204,204,220,0.88)" text-anchor="end" font-weight="400" letter-spacing="0">0%</text><text x="372.40" y="450.00" font-size="12.8" fill="rgba(204,204,220,0.88)" text-anchor="middle" font-weight="400" letter-spacing="0">22:00</text><text x="440.12" y="450.00" font-size="12.8" fill="rgba(204,204,220,0.88)" text-anchor="middle" font-weight="400" letter-spacing="0">22:30</text><text x="507.84" y="450.00" font-size="12.8" fill="rgba(204,204,220,0.88)" text-anchor="middle" font-weight="400" letter-spacing="0">23:00</text><text x="575.56" y="450.00" font-size="12.8" fill="rgba(204,204,220,0.88)" text-anchor="middle" font-weight="400" letter-spacing="0">23:30</text><text x="643.28" y="450.00" font-size="12.8" fill="rgba(204,204,220,0.88)" text-anchor="middle" font-weight="400" letter-spacing="0">00:00</text><text x="711.00" y="450.00" font-size="12.8" fill="rgba(204,204,220,0.88)" text-anchor="middle" font-weight="400" letter-spacing="0">00:30</text><text x="778.72" y="450.00" font-size="12.8" fill="rgba(204,204,220,0.88)" text-anchor="middle" font-weight="400" letter-spacing="0">01:00</text><text x="846.44" y="450.00" font-size="12.8" fill="rgba(204,204,220,0.88)" text-anchor="middle" font-weight="400" letter-spacing="0">01:30</text><line x1="372.4" y1="397.5" x2="914.2" y2="397.5" stroke="rgba(204,204,220,0.55)" stroke-width="1" stroke-dasharray="3,3"/><line x1="581.5" y1="314" x2="581.5" y2="431" stroke="rgba(204,204,220,0.55)" stroke-width="1" stroke-dasharray="3,3"/><path d="M372.40,428.50 L373.10,428.50 L373.80,428.50 L374.50,428.50 L375.20,428.50 L375.90,428.50 L376.60,428.50 L377.30,428.50 L378.00,428.50 L378.70,428.50 L379.40,428.50 L380.10,428.50 L380.80,428.50 L381.50,428.50 L382.20,428.50 L382.90,428.50 L383.60,428.50 L384.30,428.50 L385.00,428.50 L385.70,428.50 L386.40,428.50 L387.10,428.50 L387.80,428.50 L388.50,428.50 L389.20,428.50 L389.90,428.50 L390.60,428.50 L391.30,428.50 L392.00,428.50 L392.70,428.50 L393.40,428.50 L394.10,428.50 L394.80,428.50 L395.50,428.50 L396.20,428.50 L396.90,428.50 L397.60,428.50 L398.30,428.50 L399.00,428.50 L399.70,428.50 L400.40,428.50 L401.10,428.50 L401.80,428.50 L402.50,428.50 L403.20,428.50 L403.90,428.50 L404.60,428.50 L405.30,428.50 L406.00,428.50 L406.70,428.50 L407.40,428.50 L408.10,428.50 L408.80,428.50 L409.50,428.50 L410.20,428.50 L410.90,428.50 L411.60,428.50 L412.30,428.50 L413.00,428.50 L413.70,428.50 L414.40,428.50 L415.10,428.50 L415.80,428.50 L416.50,428.50 L417.20,428.50 L417.90,428.50 L418.60,428.50 L419.30,428.50 L420.00,428.50 L420.70,428.50 L421.40,428.50 L422.10,428.50 L422.80,428.50 L423.50,428.50 L424.20,428.50 L424.90,428.50 L425.60,428.50 L426.30,428.50 L427.00,428.50 L427.70,428.50 L428.40,428.50 L429.10,428.50 L429.80,428.50 L430.50,428.50 L431.20,428.50 L431.90,428.50 L432.60,428.50 L433.30,428.66 L434.00,429.03 L434.70,429.30 L435.40,429.30 L436.10,429.30 L436.80,429.30 L437.50,429.30 L438.20,429.30 L438.90,429.30 L439.60,429.30 L440.30,429.30 L441.00,429.30 L441.70,429.30 L442.40,429.30 L443.10,429.30 L443.80,429.30 L444.50,429.30 L445.20,429.30 L445.90,429.30 L446.60,429.30 L447.30,429.30 L448.00,429.30 L448.70,429.30 L449.40,429.30 L450.10,429.30 L450.80,429.30 L451.50,429.30 L452.20,429.30 L452.90,429.30 L453.60,429.30 L454.30,429.30 L455.00,429.30 L455.70,429.30 L456.40,429.09 L457.10,428.71 L457.80,428.50 L458.50,428.50 L459.20,428.50 L459.90,428.50 L460.60,428.50 L461.30,428.50 L462.00,428.50 L462.70,428.50 L463.40,428.50 L464.10,428.50 L464.80,428.50 L465.50,428.50 L466.20,428.50 L466.90,428.50 L467.60,428.50 L468.30,428.50 L469.00,428.50 L469.70,428.50 L470.40,428.50 L471.10,428.50 L471.80,428.50 L472.50,428.50 L473.20,428.50 L473.90,428.50 L474.60,428.50 L475.30,428.50 L476.00,428.50 L476.70,428.50 L477.40,428.50 L478.10,428.50 L478.80,428.50 L479.50,428.50 L480.20,428.50 L480.90,428.50 L481.60,428.50 L482.30,428.50 L483.00,428.50 L483.70,428.50 L484.40,428.50 L485.10,428.50 L485.80,428.50 L486.50,428.50 L487.20,428.50 L487.90,428.50 L488.60,428.50 L489.30,428.50 L490.00,428.50 L490.70,428.50 L491.40,428.50 L492.10,428.50 L492.80,428.50 L493.50,428.50 L494.20,428.50 L494.90,428.50 L495.60,428.50 L496.30,428.50 L497.00,428.50 L497.70,428.50 L498.40,428.50 L499.10,428.50 L499.80,428.50 L500.50,428.50 L501.20,428.50 L501.90,428.50 L502.60,428.50 L503.30,428.50 L504.00,428.50 L504.70,428.50 L505.40,428.50 L506.10,428.50 L506.80,428.50 L507.50,428.50 L508.20,428.50 L508.90,428.14 L509.60,427.50 L510.30,426.86 L511.00,426.23 L511.70,425.59 L512.40,424.95 L513.10,424.32 L513.80,423.68 L514.50,423.55 L515.20,423.62 L515.90,423.69 L516.60,423.76 L517.30,423.83 L518.00,423.90 L518.70,423.90 L519.40,423.90 L520.10,423.90 L520.80,423.90 L521.50,423.90 L522.20,423.90 L522.90,423.90 L523.60,423.90 L524.30,423.90 L525.00,423.90 L525.70,423.39 L526.40,422.89 L527.10,422.38 L527.80,421.87 L528.50,421.36 L529.20,420.90 L529.90,420.55 L530.60,420.20 L531.30,419.85 L532.00,419.50 L532.70,419.38 L533.40,419.57 L534.10,419.76 L534.80,419.95 L535.50,421.00 L536.20,422.40 L536.90,423.80 L537.60,425.11 L538.30,426.41 L539.00,427.71 L539.70,429.01 L540.40,429.20 L541.10,429.20 L541.80,429.20 L542.50,429.20 L543.20,429.20 L543.90,429.20 L544.60,429.20 L545.30,429.20 L546.00,429.20 L546.70,429.20 L547.40,429.20 L548.10,429.20 L548.80,429.20 L549.50,429.20 L550.20,429.20 L550.90,429.20 L551.60,429.20 L552.30,429.20 L553.00,429.20 L553.70,429.20 L554.40,429.20 L555.10,429.20 L555.80,429.20 L556.50,429.20 L557.20,429.20 L557.90,429.20 L558.60,429.20 L559.30,429.20 L560.00,429.20 L560.70,429.20 L561.40,429.20 L562.10,429.20 L562.80,429.20 L563.50,429.20 L564.20,429.20 L564.90,429.20 L565.60,429.20 L566.30,429.20 L567.00,429.20 L567.70,429.20 L568.40,429.20 L569.10,429.20 L569.80,429.20 L570.50,429.20 L571.20,429.20 L571.90,429.20 L572.60,429.20 L573.30,429.20 L574.00,429.20 L574.70,429.20 L575.40,429.20 L576.10,429.20 L576.80,429.20 L577.50,429.20 L578.20,429.20 L578.90,429.20 L579.60,429.20 L580.30,429.20 L581.00,429.20 L581.70,429.20 L582.40,429.20 L583.10,429.20 L583.80,429.20 L584.50,429.20 L585.20,429.20 L585.90,429.20 L586.60,429.20 L587.30,429.20 L588.00,429.20 L588.70,429.20 L589.40,429.20 L590.10,429.20 L590.80,429.20 L591.50,429.20" fill="none" stroke="#73BF69" stroke-width="1.0" stroke-linejoin="round" /><path d="M372.40,426.10 L373.10,426.10 L373.80,426.10 L374.50,426.10 L375.20,426.10 L375.90,426.10 L376.60,426.10 L377.30,426.10 L378.00,426.10 L378.70,426.10 L379.40,426.10 L380.10,426.10 L380.80,426.10 L381.50,426.10 L382.20,426.10 L382.90,426.10 L383.60,426.10 L384.30,426.10 L385.00,426.10 L385.70,426.10 L386.40,426.10 L387.10,426.10 L387.80,426.10 L388.50,426.10 L389.20,426.10 L389.90,426.10 L390.60,426.10 L391.30,426.10 L392.00,426.10 L392.70,426.10 L393.40,426.10 L394.10,426.10 L394.80,426.10 L395.50,426.10 L396.20,426.10 L396.90,426.10 L397.60,426.10 L398.30,426.10 L399.00,426.10 L399.70,426.10 L400.40,426.10 L401.10,426.10 L401.80,426.10 L402.50,426.10 L403.20,426.10 L403.90,426.10 L404.60,426.10 L405.30,426.10 L406.00,426.10 L406.70,426.10 L407.40,426.10 L408.10,426.10 L408.80,426.10 L409.50,426.10 L410.20,426.10 L410.90,426.10 L411.60,426.10 L412.30,426.10 L413.00,426.10 L413.70,426.10 L414.40,426.10 L415.10,426.10 L415.80,426.10 L416.50,426.10 L417.20,426.10 L417.90,426.10 L418.60,426.10 L419.30,426.10 L420.00,426.10 L420.70,426.10 L421.40,426.10 L422.10,426.10 L422.80,426.10 L423.50,426.10 L424.20,426.10 L424.90,426.10 L425.60,426.10 L426.30,426.10 L427.00,426.10 L427.70,426.10 L428.40,426.10 L429.10,426.10 L429.80,426.10 L430.50,426.10 L431.20,426.10 L431.90,426.10 L432.60,426.10 L433.30,426.26 L434.00,426.63 L434.70,426.90 L435.40,426.90 L436.10,426.90 L436.80,426.90 L437.50,426.90 L438.20,426.90 L438.90,426.90 L439.60,426.90 L440.30,426.90 L441.00,426.90 L441.70,426.90 L442.40,426.90 L443.10,426.90 L443.80,426.90 L444.50,426.90 L445.20,426.90 L445.90,426.90 L446.60,426.90 L447.30,426.90 L448.00,426.90 L448.70,426.90 L449.40,426.90 L450.10,426.90 L450.80,426.90 L451.50,426.90 L452.20,426.90 L452.90,426.90 L453.60,426.90 L454.30,426.90 L455.00,426.90 L455.70,426.90 L456.40,426.69 L457.10,426.31 L457.80,426.10 L458.50,426.10 L459.20,426.10 L459.90,426.10 L460.60,426.10 L461.30,426.10 L462.00,426.10 L462.70,426.10 L463.40,426.10 L464.10,426.10 L464.80,426.10 L465.50,426.10 L466.20,426.10 L466.90,426.10 L467.60,426.10 L468.30,426.10 L469.00,426.10 L469.70,426.10 L470.40,426.10 L471.10,426.10 L471.80,426.10 L472.50,426.10 L473.20,426.10 L473.90,426.10 L474.60,426.10 L475.30,426.10 L476.00,426.10 L476.70,426.10 L477.40,426.10 L478.10,426.10 L478.80,426.10 L479.50,426.10 L480.20,426.10 L480.90,426.10 L481.60,426.10 L482.30,426.10 L483.00,426.10 L483.70,426.10 L484.40,426.10 L485.10,426.10 L485.80,426.10 L486.50,426.10 L487.20,426.10 L487.90,426.10 L488.60,426.10 L489.30,426.10 L490.00,426.10 L490.70,426.10 L491.40,426.10 L492.10,426.10 L492.80,426.10 L493.50,426.10 L494.20,426.10 L494.90,426.10 L495.60,426.10 L496.30,426.10 L497.00,426.10 L497.70,426.10 L498.40,426.10 L499.10,426.10 L499.80,426.10 L500.50,426.10 L501.20,426.10 L501.90,426.10 L502.60,426.10 L503.30,426.10 L504.00,426.10 L504.70,426.10 L505.40,426.10 L506.10,426.10 L506.80,426.10 L507.50,426.10 L508.20,426.10 L508.90,425.40 L509.60,424.18 L510.30,422.96 L511.00,421.74 L511.70,420.51 L512.40,419.29 L513.10,418.07 L513.80,416.85 L514.50,416.71 L515.20,417.01 L515.90,417.31 L516.60,417.60 L517.30,417.90 L518.00,418.20 L518.70,418.13 L519.40,418.06 L520.10,417.99 L520.80,417.92 L521.50,417.85 L522.20,417.78 L522.90,417.71 L523.60,417.64 L524.30,417.57 L525.00,417.50 L525.70,416.71 L526.40,415.93 L527.10,415.14 L527.80,414.35 L528.50,413.56 L529.20,412.72 L529.90,411.76 L530.60,410.79 L531.30,409.82 L532.00,408.85 L532.70,408.38 L533.40,408.57 L534.10,408.76 L534.80,408.95 L535.50,410.75 L536.20,413.20 L536.90,415.65 L537.60,418.36 L538.30,421.11 L539.00,423.86 L539.70,426.61 L540.40,427.00 L541.10,427.00 L541.80,427.00 L542.50,427.00 L543.20,427.00 L543.90,427.00 L544.60,427.00 L545.30,427.00 L546.00,427.00 L546.70,427.00 L547.40,427.00 L548.10,427.00 L548.80,427.00 L549.50,427.00 L550.20,427.00 L550.90,427.00 L551.60,427.00 L552.30,427.00 L553.00,427.00 L553.70,427.00 L554.40,427.00 L555.10,427.00 L555.80,427.00 L556.50,427.00 L557.20,427.00 L557.90,427.00 L558.60,427.00 L559.30,427.00 L560.00,427.00 L560.70,427.00 L561.40,427.00 L562.10,427.00 L562.80,427.00 L563.50,427.00 L564.20,427.00 L564.90,427.00 L565.60,427.00 L566.30,427.00 L567.00,427.00 L567.70,427.00 L568.40,427.00 L569.10,427.00 L569.80,427.00 L570.50,427.00 L571.20,427.00 L571.90,427.00 L572.60,427.00 L573.30,427.00 L574.00,427.00 L574.70,427.00 L575.40,427.00 L576.10,427.00 L576.80,427.00 L577.50,427.00 L578.20,427.00 L578.90,427.00 L579.60,427.00 L580.30,427.00 L581.00,427.00 L581.70,427.00 L582.40,427.00 L583.10,427.00 L583.80,427.00 L584.50,427.00 L585.20,427.00 L585.90,427.00 L586.60,427.00 L587.30,427.00 L588.00,427.00 L588.70,427.00 L589.40,427.00 L590.10,427.00 L590.80,427.00 L591.50,427.00" fill="none" stroke="#FADE2A" stroke-width="1.0" stroke-linejoin="round" /><path d="M372.40,423.40 L373.10,423.40 L373.80,423.40 L374.50,423.40 L375.20,423.40 L375.90,423.40 L376.60,423.13 L377.30,422.82 L378.00,422.50 L378.70,422.81 L379.40,423.13 L380.10,423.40 L380.80,423.40 L381.50,423.40 L382.20,423.40 L382.90,423.40 L383.60,423.40 L384.30,423.40 L385.00,423.40 L385.70,423.40 L386.40,423.40 L387.10,423.40 L387.80,423.40 L388.50,423.40 L389.20,423.40 L389.90,423.40 L390.60,423.40 L391.30,423.40 L392.00,423.40 L392.70,423.40 L393.40,423.40 L394.10,423.40 L394.80,423.40 L395.50,423.40 L396.20,423.40 L396.90,423.40 L397.60,423.40 L398.30,423.40 L399.00,423.40 L399.70,423.40 L400.40,423.40 L401.10,423.40 L401.80,423.40 L402.50,423.40 L403.20,423.40 L403.90,423.40 L404.60,423.40 L405.30,423.40 L406.00,423.40 L406.70,423.40 L407.40,423.40 L408.10,423.40 L408.80,423.40 L409.50,423.40 L410.20,423.40 L410.90,423.40 L411.60,423.40 L412.30,423.40 L413.00,423.40 L413.70,423.40 L414.40,423.40 L415.10,423.40 L415.80,423.40 L416.50,423.40 L417.20,423.40 L417.90,423.40 L418.60,423.40 L419.30,423.40 L420.00,423.40 L420.70,423.40 L421.40,423.40 L422.10,423.40 L422.80,423.40 L423.50,423.40 L424.20,423.40 L424.90,423.40 L425.60,423.40 L426.30,423.40 L427.00,423.40 L427.70,423.40 L428.40,423.40 L429.10,423.40 L429.80,423.40 L430.50,423.40 L431.20,423.40 L431.90,423.40 L432.60,423.40 L433.30,423.56 L434.00,423.93 L434.70,424.20 L435.40,424.20 L436.10,424.20 L436.80,424.20 L437.50,424.20 L438.20,424.20 L438.90,424.20 L439.60,424.20 L440.30,424.20 L441.00,424.20 L441.70,424.20 L442.40,424.20 L443.10,424.20 L443.80,424.20 L444.50,424.20 L445.20,424.20 L445.90,424.20 L446.60,424.20 L447.30,424.20 L448.00,424.20 L448.70,424.20 L449.40,424.20 L450.10,424.20 L450.80,424.20 L451.50,424.20 L452.20,424.20 L452.90,424.20 L453.60,424.20 L454.30,424.20 L455.00,424.20 L455.70,424.20 L456.40,423.99 L457.10,423.61 L457.80,423.40 L458.50,423.40 L459.20,423.40 L459.90,423.40 L460.60,423.40 L461.30,423.40 L462.00,423.40 L462.70,423.40 L463.40,423.40 L464.10,423.40 L464.80,423.40 L465.50,423.40 L466.20,423.40 L466.90,423.40 L467.60,423.40 L468.30,423.40 L469.00,423.40 L469.70,423.40 L470.40,423.27 L471.10,423.05 L471.80,422.83 L472.50,422.87 L473.20,423.02 L473.90,423.17 L474.60,423.32 L475.30,423.40 L476.00,423.40 L476.70,423.40 L477.40,423.40 L478.10,423.40 L478.80,423.40 L479.50,423.40 L480.20,423.40 L480.90,423.40 L481.60,423.40 L482.30,423.40 L483.00,423.40 L483.70,423.40 L484.40,423.40 L485.10,423.40 L485.80,423.40 L486.50,423.40 L487.20,423.40 L487.90,423.40 L488.60,423.40 L489.30,423.40 L490.00,423.40 L490.70,423.40 L491.40,423.40 L492.10,423.40 L492.80,423.40 L493.50,423.40 L494.20,423.40 L494.90,423.40 L495.60,423.40 L496.30,423.40 L497.00,423.40 L497.70,423.40 L498.40,423.40 L499.10,423.40 L499.80,423.40 L500.50,423.40 L501.20,423.40 L501.90,423.40 L502.60,423.40 L503.30,423.40 L504.00,423.40 L504.70,423.40 L505.40,423.40 L506.10,423.40 L506.80,423.40 L507.50,423.40 L508.20,423.40 L508.90,422.40 L509.60,420.64 L510.30,418.88 L511.00,417.13 L511.70,415.37 L512.40,413.61 L513.10,411.86 L513.80,410.10 L514.50,409.94 L515.20,410.41 L515.90,410.88 L516.60,411.35 L517.30,411.83 L518.00,412.30 L518.70,412.27 L519.40,412.24 L520.10,412.21 L520.80,412.18 L521.50,412.15 L522.20,412.12 L522.90,412.09 L523.60,412.06 L524.30,412.03 L525.00,412.00 L525.70,411.13 L526.40,410.25 L527.10,409.38 L527.80,408.50 L528.50,407.63 L529.20,406.39 L529.90,404.27 L530.60,402.15 L531.30,400.03 L532.00,397.91 L532.70,396.85 L533.40,397.20 L534.10,397.55 L534.80,397.90 L535.50,401.00 L536.20,405.20 L536.90,409.40 L537.60,413.06 L538.30,416.64 L539.00,420.21 L539.70,423.79 L540.40,424.30 L541.10,424.30 L541.80,424.30 L542.50,424.30 L543.20,424.30 L543.90,424.30 L544.60,424.30 L545.30,424.30 L546.00,424.30 L546.70,424.30 L547.40,424.30 L548.10,424.30 L548.80,424.30 L549.50,424.30 L550.20,424.30 L550.90,424.30 L551.60,424.30 L552.30,424.30 L553.00,424.30 L553.70,424.30 L554.40,424.30 L555.10,424.30 L555.80,424.30 L556.50,424.30 L557.20,424.30 L557.90,424.30 L558.60,424.30 L559.30,424.30 L560.00,424.30 L560.70,424.30 L561.40,424.30 L562.10,424.30 L562.80,424.30 L563.50,424.30 L564.20,424.30 L564.90,424.30 L565.60,424.30 L566.30,424.30 L567.00,424.30 L567.70,424.30 L568.40,424.30 L569.10,424.30 L569.80,424.30 L570.50,424.30 L571.20,424.30 L571.90,424.30 L572.60,424.30 L573.30,424.30 L574.00,424.30 L574.70,424.30 L575.40,424.30 L576.10,424.30 L576.80,424.30 L577.50,424.30 L578.20,424.30 L578.90,424.30 L579.60,424.30 L580.30,424.30 L581.00,424.30 L581.70,424.30 L582.40,424.30 L583.10,424.30 L583.80,424.30 L584.50,424.30 L585.20,424.30 L585.90,424.30 L586.60,424.30 L587.30,424.30 L588.00,424.30 L588.70,424.30 L589.40,424.30 L590.10,424.30 L590.80,424.30 L591.50,424.30" fill="none" stroke="#8AB8FF" stroke-width="1.0" stroke-linejoin="round" /><path d="M372.40,421.10 L373.10,421.10 L373.80,421.10 L374.50,421.10 L375.20,421.10 L375.90,421.10 L376.60,420.83 L377.30,420.52 L378.00,420.20 L378.70,420.51 L379.40,420.83 L380.10,421.10 L380.80,421.10 L381.50,421.10 L382.20,421.10 L382.90,421.10 L383.60,421.10 L384.30,421.10 L385.00,421.10 L385.70,421.10 L386.40,421.10 L387.10,421.10 L387.80,421.10 L388.50,421.10 L389.20,421.10 L389.90,421.10 L390.60,421.10 L391.30,421.10 L392.00,421.10 L392.70,421.10 L393.40,421.10 L394.10,421.10 L394.80,421.10 L395.50,421.10 L396.20,421.10 L396.90,421.10 L397.60,421.10 L398.30,421.10 L399.00,421.10 L399.70,421.10 L400.40,421.10 L401.10,421.10 L401.80,421.10 L402.50,421.10 L403.20,421.10 L403.90,421.10 L404.60,421.10 L405.30,421.10 L406.00,421.10 L406.70,421.10 L407.40,421.10 L408.10,421.10 L408.80,421.10 L409.50,421.10 L410.20,421.10 L410.90,421.10 L411.60,421.10 L412.30,421.10 L413.00,421.10 L413.70,421.10 L414.40,421.10 L415.10,421.10 L415.80,421.10 L416.50,421.10 L417.20,421.10 L417.90,421.10 L418.60,421.10 L419.30,421.10 L420.00,421.10 L420.70,421.10 L421.40,421.10 L422.10,421.10 L422.80,421.10 L423.50,421.10 L424.20,421.10 L424.90,421.10 L425.60,421.10 L426.30,421.10 L427.00,421.10 L427.70,421.10 L428.40,421.10 L429.10,421.10 L429.80,421.10 L430.50,421.10 L431.20,421.10 L431.90,421.10 L432.60,421.10 L433.30,421.26 L434.00,421.63 L434.70,421.90 L435.40,421.90 L436.10,421.90 L436.80,421.90 L437.50,421.90 L438.20,421.90 L438.90,421.90 L439.60,421.90 L440.30,421.90 L441.00,421.90 L441.70,421.90 L442.40,421.90 L443.10,421.90 L443.80,421.90 L444.50,421.90 L445.20,421.90 L445.90,421.90 L446.60,421.90 L447.30,421.90 L448.00,421.90 L448.70,421.90 L449.40,421.90 L450.10,421.90 L450.80,421.90 L451.50,421.90 L452.20,421.90 L452.90,421.90 L453.60,421.90 L454.30,421.90 L455.00,421.90 L455.70,421.90 L456.40,421.69 L457.10,421.31 L457.80,421.10 L458.50,421.10 L459.20,421.10 L459.90,421.10 L460.60,421.10 L461.30,421.10 L462.00,421.10 L462.70,421.10 L463.40,421.10 L464.10,421.10 L464.80,421.10 L465.50,421.10 L466.20,421.10 L466.90,421.10 L467.60,421.10 L468.30,421.10 L469.00,421.10 L469.70,421.10 L470.40,420.97 L471.10,420.75 L471.80,420.53 L472.50,420.57 L473.20,420.72 L473.90,420.87 L474.60,421.02 L475.30,421.10 L476.00,421.10 L476.70,421.10 L477.40,421.10 L478.10,421.10 L478.80,421.10 L479.50,421.10 L480.20,421.10 L480.90,421.10 L481.60,421.10 L482.30,421.10 L483.00,421.10 L483.70,421.10 L484.40,421.10 L485.10,421.10 L485.80,421.10 L486.50,421.10 L487.20,421.10 L487.90,421.10 L488.60,421.10 L489.30,421.10 L490.00,421.10 L490.70,421.10 L491.40,421.10 L492.10,421.10 L492.80,421.10 L493.50,421.10 L494.20,421.10 L494.90,421.10 L495.60,421.10 L496.30,421.10 L497.00,421.10 L497.70,421.10 L498.40,421.10 L499.10,421.10 L499.80,421.10 L500.50,421.10 L501.20,421.10 L501.90,421.10 L502.60,421.10 L503.30,421.10 L504.00,421.10 L504.70,421.10 L505.40,421.10 L506.10,421.10 L506.80,421.10 L507.50,421.10 L508.20,421.10 L508.90,419.77 L509.60,417.44 L510.30,415.11 L511.00,412.78 L511.70,410.45 L512.40,408.12 L513.10,405.79 L513.80,403.47 L514.50,403.07 L515.20,403.46 L515.90,403.84 L516.60,404.23 L517.30,404.61 L518.00,405.00 L518.70,404.95 L519.40,404.90 L520.10,404.85 L520.80,404.80 L521.50,404.75 L522.20,404.70 L522.90,404.65 L523.60,404.60 L524.30,404.55 L525.00,404.50 L525.70,403.54 L526.40,402.58 L527.10,401.61 L527.80,400.65 L528.50,399.69 L529.20,398.14 L529.90,395.14 L530.60,392.13 L531.30,389.12 L532.00,386.12 L532.70,384.58 L533.40,385.02 L534.10,385.45 L534.80,385.88 L535.50,389.50 L536.20,394.40 L536.90,399.30 L537.60,404.80 L538.30,410.40 L539.00,416.00 L539.70,421.60 L540.40,422.40 L541.10,422.40 L541.80,422.40 L542.50,422.40 L543.20,422.40 L543.90,422.40 L544.60,422.40 L545.30,422.40 L546.00,422.40 L546.70,422.40 L547.40,422.40 L548.10,422.40 L548.80,422.40 L549.50,422.40 L550.20,422.40 L550.90,422.40 L551.60,422.40 L552.30,422.40 L553.00,422.40 L553.70,422.40 L554.40,422.40 L555.10,422.40 L555.80,422.40 L556.50,422.40 L557.20,422.40 L557.90,422.40 L558.60,422.40 L559.30,422.40 L560.00,422.40 L560.70,422.40 L561.40,422.40 L562.10,422.40 L562.80,422.40 L563.50,422.40 L564.20,422.40 L564.90,422.40 L565.60,422.40 L566.30,422.40 L567.00,422.40 L567.70,422.40 L568.40,422.40 L569.10,422.40 L569.80,422.40 L570.50,422.40 L571.20,422.40 L571.90,422.40 L572.60,422.40 L573.30,422.40 L574.00,422.40 L574.70,422.40 L575.40,422.40 L576.10,422.40 L576.80,422.40 L577.50,422.40 L578.20,422.40 L578.90,422.40 L579.60,422.40 L580.30,422.40 L581.00,422.40 L581.70,422.40 L582.40,422.40 L583.10,422.40 L583.80,422.40 L584.50,422.40 L585.20,422.40 L585.90,422.40 L586.60,422.40 L587.30,422.40 L588.00,422.40 L588.70,422.40 L589.40,422.40 L590.10,422.40 L590.80,422.40 L591.50,422.40" fill="none" stroke="#FF9830" stroke-width="1.0" stroke-linejoin="round" /><path d="M736.00,430.24 L738.00,430.28 L740.00,429.48 L742.00,430.11 L744.00,429.84 L746.00,430.38 L748.00,430.38 L750.00,430.47 L752.00,429.48 L754.00,430.44 L756.00,430.50 L758.00,430.53 L760.00,429.53 L762.00,429.65 L764.00,429.53 L766.00,429.44 L768.00,430.42 L770.00,430.37 L772.00,430.16 L774.00,430.39 L776.00,430.16 L778.00,429.74 L780.00,429.52 L782.00,429.52 L784.00,430.31 L786.00,429.65 L788.00,429.78 L790.00,429.91 L792.00,429.43 L794.00,429.71 L796.00,429.74 L798.00,430.26 L800.00,429.84 L802.00,429.78 L804.00,430.56 L806.00,430.00 L808.00,430.42 L810.00,430.14 L812.00,429.44 L814.00,429.90 L816.00,429.92 L818.00,430.33 L820.00,429.82 L822.00,430.25 L824.00,430.05 L826.00,429.66 L828.00,430.43 L830.00,429.51 L832.00,430.38 L834.00,429.60 L836.00,429.40 L838.00,429.64 L840.00,430.31 L842.00,430.57 L844.00,429.41 L846.00,429.99 L848.00,429.99 L850.00,430.36 L852.00,429.62 L854.00,429.99 L856.00,429.82 L858.00,430.40 L860.00,429.71 L862.00,430.53 L864.00,429.74 L866.00,429.66 L868.00,430.24 L870.00,430.00 L872.00,429.53 L874.00,430.16 L876.00,429.50 L878.00,430.35 L880.00,430.24 L882.00,430.34 L884.00,430.15 L886.00,429.83 L888.00,429.88 L890.00,429.87 L892.00,430.47 L894.00,429.50 L896.00,430.47 L898.00,429.43 L900.00,429.65 L902.00,429.72 L904.00,430.48 L906.00,430.00 L908.00,429.86 L910.00,430.46 L912.00,429.68" fill="none" stroke="#73BF69" stroke-width="1.1" stroke-linejoin="round" /><path d="M736.00,428.75 L738.00,428.84 L740.00,429.11 L742.00,429.10 L744.00,428.98 L746.00,428.62 L748.00,428.59 L750.00,428.39 L752.00,429.21 L754.00,428.99 L756.00,429.09 L758.00,428.40 L760.00,428.73 L762.00,429.13 L764.00,428.90 L766.00,428.35 L768.00,428.75 L770.00,429.26 L772.00,428.49 L774.00,428.43 L776.00,428.56 L778.00,429.04 L780.00,429.21 L782.00,428.39 L784.00,428.39 L786.00,428.50 L788.00,428.59 L790.00,428.83 L792.00,428.39 L794.00,428.59 L796.00,428.43 L798.00,429.37 L800.00,429.07 L802.00,428.32 L804.00,429.35 L806.00,428.32 L808.00,428.66 L810.00,429.38 L812.00,429.15 L814.00,429.08 L816.00,428.72 L818.00,428.44 L820.00,428.97 L822.00,428.33 L824.00,428.45 L826.00,428.67 L828.00,428.24 L830.00,428.68 L832.00,429.15 L834.00,429.03 L836.00,428.80 L838.00,428.96 L840.00,428.76 L842.00,428.37 L844.00,428.92 L846.00,428.69 L848.00,429.09 L850.00,429.29 L852.00,428.72 L854.00,428.89 L856.00,429.10 L858.00,428.71 L860.00,428.47 L862.00,429.07 L864.00,429.26 L866.00,429.13 L868.00,429.04 L870.00,429.22 L872.00,429.02 L874.00,428.97 L876.00,428.74 L878.00,428.58 L880.00,428.95 L882.00,428.32 L884.00,428.70 L886.00,429.14 L888.00,429.06 L890.00,428.96 L892.00,428.50 L894.00,428.71 L896.00,428.75 L898.00,428.95 L900.00,428.69 L902.00,429.01 L904.00,429.32 L906.00,428.42 L908.00,428.99 L910.00,429.13 L912.00,428.67" fill="none" stroke="#FADE2A" stroke-width="1.1" stroke-linejoin="round" /><path d="M736.00,428.19 L738.00,428.77 L740.00,427.65 L742.00,428.25 L744.00,427.79 L746.00,428.54 L748.00,428.73 L750.00,428.22 L752.00,427.72 L754.00,428.29 L756.00,428.25 L758.00,428.46 L760.00,428.21 L762.00,428.37 L764.00,428.59 L766.00,428.23 L768.00,428.09 L770.00,428.74 L772.00,427.85 L774.00,428.42 L776.00,428.07 L778.00,428.52 L780.00,427.75 L782.00,428.78 L784.00,428.03 L786.00,427.67 L788.00,427.93 L790.00,428.08 L792.00,427.62 L794.00,428.10 L796.00,428.10 L798.00,428.44 L800.00,428.02 L802.00,427.92 L804.00,427.87 L806.00,428.49 L808.00,428.73 L810.00,428.23 L812.00,427.86 L814.00,428.56 L816.00,428.07 L818.00,427.85 L820.00,427.76 L822.00,428.53 L824.00,428.57 L826.00,428.36 L828.00,428.16 L830.00,428.27 L832.00,427.87 L834.00,428.76 L836.00,428.02 L838.00,428.37 L840.00,428.58 L842.00,428.58 L844.00,428.16 L846.00,427.95 L848.00,428.26 L850.00,427.75 L852.00,428.60 L854.00,428.03 L856.00,428.62 L858.00,427.92 L860.00,428.05 L862.00,427.90 L864.00,428.11 L866.00,427.82 L868.00,427.60 L870.00,428.47 L872.00,427.94 L874.00,427.89 L876.00,427.96 L878.00,428.18 L880.00,428.11 L882.00,428.36 L884.00,428.39 L886.00,428.03 L888.00,428.71 L890.00,428.63 L892.00,427.67 L894.00,428.59 L896.00,428.69 L898.00,428.54 L900.00,427.77 L902.00,428.60 L904.00,428.36 L906.00,427.62 L908.00,427.61 L910.00,428.74 L912.00,428.39" fill="none" stroke="#8AB8FF" stroke-width="1.1" stroke-linejoin="round" /><path d="M736.00,427.30 L738.00,427.12 L740.00,427.17 L742.00,427.28 L744.00,427.93 L746.00,427.42 L748.00,427.18 L750.00,428.08 L752.00,427.95 L754.00,427.20 L756.00,428.07 L758.00,427.73 L760.00,427.94 L762.00,427.80 L764.00,428.07 L766.00,427.95 L768.00,428.01 L770.00,427.24 L772.00,427.83 L774.00,427.64 L776.00,427.89 L778.00,427.53 L780.00,428.06 L782.00,427.67 L784.00,427.32 L786.00,427.28 L788.00,427.17 L790.00,427.59 L792.00,427.07 L794.00,427.56 L796.00,427.17 L798.00,427.59 L800.00,427.60 L802.00,427.65 L804.00,428.04 L806.00,427.01 L808.00,428.01 L810.00,427.56 L812.00,427.68 L814.00,427.80 L816.00,428.01 L818.00,427.45 L820.00,427.50 L822.00,428.15 L824.00,427.09 L826.00,427.76 L828.00,427.76 L830.00,427.03 L832.00,427.73 L834.00,427.82 L836.00,428.12 L838.00,427.40 L840.00,428.18 L842.00,427.61 L844.00,427.58 L846.00,428.08 L848.00,427.04 L850.00,427.86 L852.00,427.75 L854.00,427.41 L856.00,428.03 L858.00,427.44 L860.00,427.57 L862.00,427.63 L864.00,427.92 L866.00,427.25 L868.00,427.52 L870.00,427.51 L872.00,427.66 L874.00,427.99 L876.00,427.35 L878.00,427.99 L880.00,427.48 L882.00,427.60 L884.00,427.33 L886.00,427.61 L888.00,428.17 L890.00,427.79 L892.00,427.95 L894.00,427.40 L896.00,427.38 L898.00,427.36 L900.00,427.70 L902.00,427.76 L904.00,427.94 L906.00,427.05 L908.00,427.87 L910.00,428.06 L912.00,427.65" fill="none" stroke="#FF9830" stroke-width="1.1" stroke-linejoin="round" /><circle cx="582" cy="428.5" r="4" fill="#73BF69" opacity="0.85"/><circle cx="582" cy="426.1" r="4" fill="#FADE2A" opacity="0.85"/><circle cx="582" cy="423.4" r="4" fill="#8AB8FF" opacity="0.85"/><circle cx="582" cy="421.1" r="4" fill="#FF9830" opacity="0.9"/><rect x="335.80" y="465.00" width="14" height="4" rx="2" fill="#73BF69"/><text x="358.20" y="471.00" font-size="13" fill="#ccccdc" text-anchor="start" font-weight="400" letter-spacing="0">cpu 0</text><rect x="400.80" y="465.00" width="14" height="4" rx="2" fill="#FADE2A"/><text x="422.20" y="471.00" font-size="13" fill="#ccccdc" text-anchor="start" font-weight="400" letter-spacing="0">cpu 1</text><rect x="463.40" y="465.00" width="14" height="4" rx="2" fill="#8AB8FF"/><text x="485.30" y="471.00" font-size="13" fill="#ccccdc" text-anchor="start" font-weight="400" letter-spacing="0">cpu 2</text><rect x="527.00" y="465.00" width="14" height="4" rx="2" fill="#FF9830"/><text x="549.90" y="471.00" font-size="13" fill="#ccccdc" text-anchor="start" font-weight="400" letter-spacing="0">cpu 3</text><rect x="906.3" y="267" width="24" height="30.5" rx="2" fill="#22252b"/><g fill="#ccccdc"><circle cx="918" cy="278" r="1.4"/><circle cx="918" cy="282.8" r="1.4"/><circle cx="918" cy="287.6" r="1.4"/></g><path d="M921.5,480.5 L926.5,480.5 L926.5,475.5" fill="none" stroke="rgba(204,204,220,0.5)" stroke-width="1.2"/><line x1="964.5" y1="314" x2="964.5" y2="412" stroke="rgba(204,204,220,0.14)" stroke-width="1"/><line x1="1028.5" y1="314" x2="1028.5" y2="412" stroke="rgba(204,204,220,0.14)" stroke-width="1"/><line x1="1093.5" y1="314" x2="1093.5" y2="412" stroke="rgba(204,204,220,0.14)" stroke-width="1"/><line x1="1157.5" y1="314" x2="1157.5" y2="412" stroke="rgba(204,204,220,0.14)" stroke-width="1"/><line x1="961" y1="407.5" x2="1220.8" y2="407.5" stroke="rgba(204,204,220,0.14)" stroke-width="1"/><line x1="961" y1="372.5" x2="1220.8" y2="372.5" stroke="rgba(204,204,220,0.14)" stroke-width="1"/><line x1="961" y1="337.5" x2="1220.8" y2="337.5" stroke="rgba(204,204,220,0.14)" stroke-width="1"/><text x="948.00" y="341.60" font-size="12.5" fill="rgba(204,204,220,0.88)" text-anchor="start" font-weight="400" letter-spacing="0">4</text><text x="948.00" y="376.60" font-size="12.5" fill="rgba(204,204,220,0.88)" text-anchor="start" font-weight="400" letter-spacing="0">2</text><text x="948.00" y="411.40" font-size="12.5" fill="rgba(204,204,220,0.88)" text-anchor="start" font-weight="400" letter-spacing="0">0</text><text x="964.50" y="424.80" font-size="12.8" fill="rgba(204,204,220,0.88)" text-anchor="middle" font-weight="400" letter-spacing="0">22:00</text><text x="1028.90" y="424.80" font-size="12.8" fill="rgba(204,204,220,0.88)" text-anchor="middle" font-weight="400" letter-spacing="0">23:00</text><text x="1093.30" y="424.80" font-size="12.8" fill="rgba(204,204,220,0.88)" text-anchor="middle" font-weight="400" letter-spacing="0">00:00</text><text x="1157.70" y="424.80" font-size="12.8" fill="rgba(204,204,220,0.88)" text-anchor="middle" font-weight="400" letter-spacing="0">01:00</text><line x1="1063.5" y1="314" x2="1063.5" y2="407" stroke="rgba(204,204,220,0.6)" stroke-width="1" stroke-dasharray="2.5,3.5"/><line x1="964.5" y1="337.20" x2="1216" y2="337.20" stroke="#FF9830" stroke-width="1.1" stroke-dasharray="10.8,9.2" opacity="0.85"/><path d="M964.50,383.69 L965.00,383.75 L965.50,383.79 L966.00,383.81 L966.51,383.80 L967.01,383.78 L967.51,383.75 L968.01,383.71 L968.51,383.68 L969.01,383.65 L969.52,383.62 L970.02,383.61 L970.52,383.61 L971.02,383.61 L971.52,383.62 L972.02,383.63 L972.53,383.64 L973.03,383.64 L973.53,383.63 L974.03,383.60 L974.53,383.57 L975.03,383.52 L975.53,383.48 L976.04,383.44 L976.54,383.40 L977.04,383.38 L977.54,383.37 L978.04,383.39 L978.54,383.43 L979.05,383.49 L979.55,383.56 L980.05,383.65 L980.55,383.73 L981.05,383.81 L981.55,383.88 L982.05,383.92 L982.56,383.94 L983.06,383.92 L983.56,383.88 L984.06,383.81 L984.56,383.72 L985.06,383.62 L985.57,383.52 L986.07,383.41 L986.57,383.32 L987.07,383.25 L987.57,383.20 L988.07,383.18 L988.58,383.18 L989.08,383.21 L989.58,383.25 L990.08,383.31 L990.58,383.38 L991.08,383.44 L991.58,383.50 L992.09,383.55 L992.59,383.59 L993.09,383.62 L993.59,383.64 L994.09,383.65 L994.59,383.66 L995.10,383.68 L995.60,383.70 L996.10,383.72 L996.60,383.76 L997.10,383.80 L997.60,383.84 L998.10,383.88 L998.61,383.92 L999.11,383.94 L999.61,383.95 L1000.11,383.96 L1000.61,384.05 L1001.11,384.12 L1001.62,384.17 L1002.12,384.20 L1002.62,384.21 L1003.12,384.23 L1003.62,384.26 L1004.12,384.30 L1004.63,384.36 L1005.13,384.46 L1005.63,384.58 L1006.13,384.74 L1006.63,384.92 L1007.13,385.13 L1007.63,385.35 L1008.14,385.58 L1008.64,385.81 L1009.14,386.03 L1009.64,386.23 L1010.14,386.37 L1010.64,386.35 L1011.15,386.32 L1011.65,386.26 L1012.15,386.19 L1012.65,386.11 L1013.15,386.03 L1013.65,385.94 L1014.15,385.87 L1014.66,385.81 L1015.16,385.75 L1015.66,385.71 L1016.16,385.68 L1016.66,385.64 L1017.16,385.61 L1017.67,385.58 L1018.17,385.53 L1018.67,385.47 L1019.17,385.41 L1019.67,385.33 L1020.17,385.25 L1020.68,385.16 L1021.18,385.08 L1021.68,385.01 L1022.18,384.95 L1022.68,384.91 L1023.18,384.89 L1023.68,384.90 L1024.19,384.92 L1024.69,384.95 L1025.19,384.99 L1025.69,385.04 L1026.19,385.07 L1026.69,385.08 L1027.20,385.07 L1027.70,385.04 L1028.20,384.97 L1028.70,384.87 L1029.20,384.75 L1029.70,384.61 L1030.21,384.23 L1030.71,383.53 L1031.21,382.82 L1031.71,382.13 L1032.21,381.47 L1032.71,380.82 L1033.21,380.20 L1033.72,379.61 L1034.22,379.04 L1034.72,378.49 L1035.22,377.95 L1035.72,377.42 L1036.22,376.88 L1036.73,376.34 L1037.23,375.79 L1037.73,375.22 L1038.23,374.65 L1038.73,374.07 L1039.23,373.49 L1039.73,372.90 L1040.24,372.32 L1040.74,371.75 L1041.24,371.61 L1041.74,371.94 L1042.24,372.28 L1042.74,372.62 L1043.25,372.96 L1043.75,373.29 L1044.25,373.60 L1044.75,373.90 L1045.25,374.17 L1045.75,374.42 L1046.26,374.64 L1046.76,374.85 L1047.26,375.03 L1047.76,375.22 L1048.26,375.40 L1048.76,375.59 L1049.26,375.80 L1049.77,376.03 L1050.27,376.20 L1050.77,376.34 L1051.27,376.50 L1051.77,376.69 L1052.27,376.90 L1052.78,377.12 L1053.28,377.35 L1053.78,377.57 L1054.28,377.78 L1054.78,377.97 L1055.28,378.15 L1055.78,378.30 L1056.29,378.43 L1056.79,378.54 L1057.29,378.64 L1057.79,378.73 L1058.29,378.82 L1058.79,378.91 L1059.30,379.02 L1059.80,379.13 L1060.30,379.25 L1060.80,379.39 L1061.30,379.53 L1061.80,379.68 L1062.31,379.82 L1062.81,379.96 L1063.31,380.09 L1063.81,380.21 L1064.31,380.32 L1064.81,380.42 L1065.31,380.51 L1065.82,380.61 L1066.32,380.71 L1066.82,380.82 L1067.32,380.94 L1067.82,381.09 L1068.32,381.26 L1068.83,381.44 L1069.33,381.65 L1069.83,381.87 L1070.33,382.02 L1070.83,382.13 L1071.33,382.23 L1071.84,382.32 L1072.34,382.37 L1072.84,382.40 L1073.34,382.40 L1073.84,382.37 L1074.34,382.31 L1074.84,382.24 L1075.35,382.15 L1075.85,382.07 L1076.35,381.99 L1076.85,381.93 L1077.35,381.90 L1077.85,381.88 L1078.36,381.90 L1078.86,381.94 L1079.36,382.00 L1079.86,382.07 L1080.36,382.16 L1080.86,382.25 L1081.36,382.34 L1081.87,382.42 L1082.37,382.49 L1082.87,382.55 L1083.37,382.60 L1083.87,382.65 L1084.37,382.69 L1084.88,382.74 L1085.38,382.79 L1085.88,382.85 L1086.38,382.91 L1086.88,382.99 L1087.38,383.06 L1087.89,383.15 L1088.39,383.22 L1088.89,383.29 L1089.39,383.34 L1089.89,383.37 L1090.39,383.38 L1090.89,383.36 L1091.40,383.32 L1091.90,383.26 L1092.40,383.18 L1092.90,383.10 L1093.40,383.02 L1093.90,382.95 L1094.41,382.91 L1094.91,382.88 L1095.41,382.89 L1095.91,382.93 L1096.41,382.99 L1096.91,383.09 L1097.41,383.20 L1097.92,383.31 L1098.42,383.44 L1098.92,383.55 L1099.42,383.65 L1099.92,383.74 L1100.42,383.83 L1100.93,383.90 L1101.43,383.96 L1101.93,383.99 L1102.43,384.02 L1102.93,384.04 L1103.43,384.06 L1103.94,384.09 L1104.44,384.13 L1104.94,384.18 L1105.44,384.24 L1105.94,384.31 L1106.44,384.39 L1106.94,384.47 L1107.45,384.54 L1107.95,384.62 L1108.45,384.68 L1108.95,384.73 L1109.45,384.77 L1109.95,384.81 L1110.46,384.84 L1110.96,384.87 L1111.46,384.91 L1111.96,384.97 L1112.46,385.04 L1112.96,385.13 L1113.46,385.24 L1113.97,385.37 L1114.47,385.51 L1114.97,385.67 L1115.47,385.83 L1115.97,385.98 L1116.47,386.11 L1116.98,386.23 L1117.48,386.31 L1117.98,386.37 L1118.48,386.39 L1118.98,386.39 L1119.48,386.36 L1119.99,386.32 L1120.49,386.30 L1120.99,386.28 L1121.49,386.27 L1121.99,386.28 L1122.49,386.32 L1122.99,386.38 L1123.50,386.46 L1124.00,386.57 L1124.50,386.70 L1125.00,386.84 L1125.50,386.99 L1126.00,387.15 L1126.51,387.30 L1127.01,387.44 L1127.51,387.57 L1128.01,387.70 L1128.51,387.81 L1129.01,387.93 L1129.52,388.04 L1130.02,388.15 L1130.52,388.27 L1131.02,388.40 L1131.52,388.54 L1132.02,388.68 L1132.52,388.83 L1133.03,388.98 L1133.53,389.13 L1134.03,389.26 L1134.53,389.38 L1135.03,389.47 L1135.53,389.55 L1136.04,389.59 L1136.54,389.61 L1137.04,389.62 L1137.54,389.61 L1138.04,389.60 L1138.54,389.59 L1139.04,389.60 L1139.55,389.63 L1140.05,389.67 L1140.55,389.66 L1141.05,389.68 L1141.55,389.73 L1142.05,389.80 L1142.56,389.89 L1143.06,389.98 L1143.56,390.07 L1144.06,390.16 L1144.56,390.22 L1145.06,390.27 L1145.57,390.30 L1146.07,390.30 L1146.57,390.28 L1147.07,390.25 L1147.57,390.21 L1148.07,390.16 L1148.57,390.12 L1149.08,390.08 L1149.58,390.06 L1150.08,390.04 L1150.58,390.04 L1151.08,390.05 L1151.58,390.07 L1152.09,390.08 L1152.59,390.10 L1153.09,390.11 L1153.59,390.10 L1154.09,390.09 L1154.59,390.07 L1155.09,390.04 L1155.60,390.02 L1156.10,389.99 L1156.60,389.97 L1157.10,389.97 L1157.60,389.99 L1158.10,390.03 L1158.61,390.08 L1159.11,390.16 L1159.61,390.25 L1160.11,390.35 L1160.61,390.45 L1161.11,390.53 L1161.62,390.60 L1162.12,390.65 L1162.62,390.67 L1163.12,390.65 L1163.62,390.61 L1164.12,390.53 L1164.62,390.44 L1165.13,390.33 L1165.63,390.22 L1166.13,390.10 L1166.63,390.01 L1167.13,389.93 L1167.63,389.87 L1168.14,389.84 L1168.64,389.83 L1169.14,389.85 L1169.64,389.89 L1170.14,389.94 L1170.64,389.99 L1171.15,390.05 L1171.65,390.10 L1172.15,390.14 L1172.65,390.18 L1173.15,390.20 L1173.65,390.22 L1174.15,390.24 L1174.66,390.26 L1175.16,390.28 L1175.66,390.31 L1176.16,390.34 L1176.66,390.39 L1177.16,390.45 L1177.67,390.51 L1178.17,390.57 L1178.67,390.62 L1179.17,390.66 L1179.67,390.68 L1180.17,390.68 L1180.67,390.65 L1181.18,390.60 L1181.68,390.53 L1182.18,390.44 L1182.68,390.34 L1183.18,390.24 L1183.68,390.15 L1184.19,390.07 L1184.69,390.02 L1185.19,389.99 L1185.69,389.99 L1186.19,390.02 L1186.69,390.07 L1187.20,390.15 L1187.70,390.23 L1188.20,390.33 L1188.70,390.42 L1189.20,390.49 L1189.70,390.55 L1190.20,390.59 L1190.71,390.61 L1191.21,390.60 L1191.71,390.57 L1192.21,390.53 L1192.71,390.49 L1193.21,390.44 L1193.72,390.39 L1194.22,390.35 L1194.72,390.33 L1195.22,390.32 L1195.72,390.32 L1196.22,390.32 L1196.72,390.34 L1197.23,390.35 L1197.73,390.37 L1198.23,390.37 L1198.73,390.37 L1199.23,390.35 L1199.73,390.33 L1200.24,390.30 L1200.74,390.28 L1201.24,390.26 L1201.74,390.25 L1202.24,390.25 L1202.74,390.28 L1203.25,390.33 L1203.75,390.39 L1204.25,390.48 L1204.75,390.58 L1205.25,390.68 L1205.75,390.78 L1206.25,390.86 L1206.76,390.93 L1207.26,390.97 L1207.76,390.98 L1208.26,390.96 L1208.76,390.91 L1209.26,390.83 L1209.77,390.73 L1210.27,390.62 L1210.77,390.50 L1211.27,390.39 L1211.77,390.30 L1212.27,390.22 L1212.77,390.17 L1213.28,390.14 L1213.78,390.14 L1214.28,390.16 L1214.78,390.20 L1215.28,390.25 L1215.78,390.30 L1216.29,390.35 L1216.79,390.40 L1217.29,390.43 L1217.79,390.46 L1218.29,390.48 L1218.79,390.50 L1219.30,390.51 L1219.80,390.53 L1220.30,390.55 L1220.80,390.58" fill="none" stroke="#8AB8FF" stroke-width="1.15" stroke-linejoin="round" /><path d="M964.50,382.66 L965.00,381.37 L965.50,380.42 L966.00,380.32 L966.51,380.15 L967.01,379.48 L967.51,379.30 L968.01,379.30 L968.51,380.47 L969.01,380.94 L969.52,380.69 L970.02,381.18 L970.52,381.13 L971.02,381.56 L971.52,382.11 L972.02,382.31 L972.53,381.46 L973.03,382.63 L973.53,383.01 L974.03,383.35 L974.53,383.10 L975.03,383.18 L975.53,383.31 L976.04,383.00 L976.54,382.49 L977.04,381.80 L977.54,381.01 L978.04,380.67 L978.54,380.80 L979.05,379.51 L979.55,380.05 L980.05,379.65 L980.55,380.35 L981.05,380.25 L981.55,381.02 L982.05,381.15 L982.56,380.46 L983.06,381.87 L983.56,381.62 L984.06,382.28 L984.56,381.69 L985.06,381.06 L985.57,381.04 L986.07,380.66 L986.57,380.61 L987.07,380.96 L987.57,380.45 L988.07,381.00 L988.58,380.12 L989.08,380.97 L989.58,380.51 L990.08,380.68 L990.58,380.37 L991.08,380.97 L991.58,380.54 L992.09,381.19 L992.59,381.10 L993.09,381.86 L993.59,382.65 L994.09,383.61 L994.59,383.64 L995.10,384.17 L995.60,383.96 L996.10,384.62 L996.60,384.02 L997.10,383.56 L997.60,383.06 L998.10,382.48 L998.61,381.97 L999.11,381.88 L999.61,381.86 L1000.11,381.69 L1000.61,381.62 L1001.11,381.71 L1001.62,382.37 L1002.12,382.84 L1002.62,383.40 L1003.12,383.84 L1003.62,384.39 L1004.12,384.53 L1004.63,384.55 L1005.13,385.71 L1005.63,386.32 L1006.13,385.92 L1006.63,387.08 L1007.13,387.34 L1007.63,387.79 L1008.14,388.75 L1008.64,387.55 L1009.14,387.64 L1009.64,387.88 L1010.14,387.15 L1010.64,386.57 L1011.15,386.20 L1011.65,385.35 L1012.15,384.80 L1012.65,384.40 L1013.15,384.60 L1013.65,385.04 L1014.15,384.88 L1014.66,385.89 L1015.16,385.53 L1015.66,385.45 L1016.16,385.82 L1016.66,386.08 L1017.16,385.40 L1017.67,384.59 L1018.17,384.14 L1018.67,383.60 L1019.17,384.40 L1019.67,384.03 L1020.17,383.84 L1020.68,384.17 L1021.18,384.96 L1021.68,383.80 L1022.18,383.16 L1022.68,383.46 L1023.18,383.97 L1023.68,383.68 L1024.19,383.46 L1024.69,382.82 L1025.19,383.81 L1025.69,384.47 L1026.19,384.56 L1026.69,385.75 L1027.20,385.62 L1027.70,386.90 L1028.20,386.77 L1028.70,385.68 L1029.20,384.51 L1029.70,383.66 L1030.21,382.53 L1030.71,381.99 L1031.21,380.37 L1031.71,379.23 L1032.21,378.26 L1032.71,377.10 L1033.21,376.78 L1033.72,375.82 L1034.22,375.55 L1034.72,375.17 L1035.22,374.27 L1035.72,373.14 L1036.22,371.60 L1036.73,370.25 L1037.23,367.92 L1037.73,365.70 L1038.23,361.82 L1038.73,359.02 L1039.23,357.02 L1039.73,355.12 L1040.24,354.59 L1040.74,354.68 L1041.24,356.13 L1041.74,357.60 L1042.24,360.87 L1042.74,363.96 L1043.25,367.18 L1043.75,368.20 L1044.25,370.68 L1044.75,373.07 L1045.25,373.96 L1045.75,375.93 L1046.26,375.29 L1046.76,377.07 L1047.26,378.07 L1047.76,378.99 L1048.26,380.17 L1048.76,379.79 L1049.26,380.48 L1049.77,379.83 L1050.27,380.86 L1050.77,380.52 L1051.27,379.93 L1051.77,380.00 L1052.27,381.27 L1052.78,381.69 L1053.28,381.13 L1053.78,381.36 L1054.28,382.15 L1054.78,382.12 L1055.28,382.02 L1055.78,382.00 L1056.29,381.70 L1056.79,381.05 L1057.29,381.46 L1057.79,381.39 L1058.29,382.74 L1058.79,383.49 L1059.30,384.55 L1059.80,384.95 L1060.30,385.93 L1060.80,386.43 L1061.30,385.65 L1061.80,385.22 L1062.31,385.06 L1062.81,384.38 L1063.31,384.21 L1063.81,384.02 L1064.31,383.32 L1064.81,383.18 L1065.31,383.28 L1065.82,383.43 L1066.32,383.37 L1066.82,382.90 L1067.32,382.88 L1067.82,383.11 L1068.32,382.44 L1068.83,382.90 L1069.33,382.85 L1069.83,382.81 L1070.33,383.82 L1070.83,384.64 L1071.33,384.22 L1071.84,385.29 L1072.34,385.14 L1072.84,385.92 L1073.34,385.95 L1073.84,386.08 L1074.34,386.89 L1074.84,385.54 L1075.35,385.54 L1075.85,385.04 L1076.35,384.45 L1076.85,383.69 L1077.35,383.50 L1077.85,383.50 L1078.36,384.67 L1078.86,384.65 L1079.36,385.67 L1079.86,385.25 L1080.36,385.30 L1080.86,385.94 L1081.36,385.62 L1081.87,385.56 L1082.37,385.15 L1082.87,385.64 L1083.37,385.51 L1083.87,385.42 L1084.37,384.53 L1084.88,384.78 L1085.38,385.21 L1085.88,385.05 L1086.38,384.96 L1086.88,384.69 L1087.38,384.51 L1087.89,384.19 L1088.39,384.17 L1088.89,383.70 L1089.39,382.81 L1089.89,383.33 L1090.39,383.80 L1090.89,384.39 L1091.40,384.93 L1091.90,385.53 L1092.40,386.53 L1092.90,386.76 L1093.40,387.07 L1093.90,387.49 L1094.41,387.35 L1094.91,387.07 L1095.41,386.61 L1095.91,385.38 L1096.41,386.00 L1096.91,384.81 L1097.41,384.56 L1097.92,384.29 L1098.42,383.83 L1098.92,383.28 L1099.42,383.45 L1099.92,383.29 L1100.42,383.20 L1100.93,382.76 L1101.43,382.17 L1101.93,382.49 L1102.43,382.75 L1102.93,382.95 L1103.43,383.22 L1103.94,383.77 L1104.44,383.41 L1104.94,384.17 L1105.44,384.90 L1105.94,384.67 L1106.44,385.56 L1106.94,384.99 L1107.45,384.70 L1107.95,385.14 L1108.45,384.72 L1108.95,384.14 L1109.45,383.27 L1109.95,383.08 L1110.46,384.10 L1110.96,383.60 L1111.46,384.51 L1111.96,384.97 L1112.46,385.44 L1112.96,385.70 L1113.46,386.45 L1113.97,386.28 L1114.47,386.39 L1114.97,385.77 L1115.47,385.32 L1115.97,385.25 L1116.47,386.53 L1116.98,387.26 L1117.48,387.05 L1117.98,387.45 L1118.48,386.54 L1118.98,387.04 L1119.48,387.35 L1119.99,386.53 L1120.49,386.53 L1120.99,387.08 L1121.49,386.58 L1121.99,386.52 L1122.49,386.67 L1122.99,387.09 L1123.50,387.91 L1124.00,388.53 L1124.50,389.67 L1125.00,390.63 L1125.50,390.33 L1126.00,391.13 L1126.51,391.32 L1127.01,392.06 L1127.51,391.44 L1128.01,390.87 L1128.51,391.34 L1129.01,390.25 L1129.52,390.55 L1130.02,390.10 L1130.52,390.16 L1131.02,389.92 L1131.52,389.44 L1132.02,389.83 L1132.52,388.91 L1133.03,389.47 L1133.53,389.24 L1134.03,388.43 L1134.53,388.91 L1135.03,388.66 L1135.53,388.37 L1136.04,388.57 L1136.54,390.05 L1137.04,389.75 L1137.54,389.75 L1138.04,390.39 L1138.54,391.15 L1139.04,391.34 L1139.55,391.12 L1140.05,391.15 L1140.55,390.47 L1141.05,390.05 L1141.55,389.69 L1142.05,388.99 L1142.56,389.40 L1143.06,389.89 L1143.56,389.20 L1144.06,390.22 L1144.56,390.31 L1145.06,390.47 L1145.57,390.76 L1146.07,391.12 L1146.57,390.91 L1147.07,390.07 L1147.57,391.04 L1148.07,390.88 L1148.57,390.49 L1149.08,390.72 L1149.58,390.83 L1150.08,390.89 L1150.58,391.91 L1151.08,391.45 L1151.58,390.89 L1152.09,390.41 L1152.59,389.66 L1153.09,389.42 L1153.59,389.14 L1154.09,388.62 L1154.59,388.43 L1155.09,388.22 L1155.60,388.23 L1156.10,388.96 L1156.60,389.66 L1157.10,390.29 L1157.60,390.22 L1158.10,390.70 L1158.61,391.21 L1159.11,391.52 L1159.61,391.64 L1160.11,391.91 L1160.61,391.57 L1161.11,392.04 L1161.62,391.61 L1162.12,391.69 L1162.62,391.11 L1163.12,391.50 L1163.62,391.25 L1164.12,390.92 L1164.62,390.37 L1165.13,390.83 L1165.63,390.52 L1166.13,389.54 L1166.63,389.89 L1167.13,389.12 L1167.63,389.40 L1168.14,389.34 L1168.64,390.20 L1169.14,389.71 L1169.64,390.60 L1170.14,391.19 L1170.64,390.52 L1171.15,391.22 L1171.65,390.29 L1172.15,391.24 L1172.65,391.22 L1173.15,390.69 L1173.65,389.77 L1174.15,390.00 L1174.66,389.60 L1175.16,389.48 L1175.66,390.03 L1176.16,389.83 L1176.66,390.28 L1177.16,390.79 L1177.67,390.28 L1178.17,390.53 L1178.67,390.85 L1179.17,391.25 L1179.67,391.67 L1180.17,390.85 L1180.67,391.15 L1181.18,391.86 L1181.68,391.48 L1182.18,392.20 L1182.68,391.85 L1183.18,391.88 L1183.68,391.75 L1184.19,391.57 L1184.69,391.20 L1185.19,391.12 L1185.69,390.24 L1186.19,389.67 L1186.69,389.04 L1187.20,388.49 L1187.70,388.19 L1188.20,387.89 L1188.70,389.62 L1189.20,389.00 L1189.70,389.72 L1190.20,389.38 L1190.71,390.33 L1191.21,391.61 L1191.71,391.14 L1192.21,391.61 L1192.71,391.13 L1193.21,391.84 L1193.72,391.50 L1194.22,391.52 L1194.72,391.54 L1195.22,391.75 L1195.72,392.22 L1196.22,391.39 L1196.72,391.08 L1197.23,391.24 L1197.73,391.25 L1198.23,390.43 L1198.73,389.89 L1199.23,389.78 L1199.73,389.46 L1200.24,388.85 L1200.74,389.80 L1201.24,389.85 L1201.74,390.69 L1202.24,390.71 L1202.74,391.16 L1203.25,391.58 L1203.75,391.69 L1204.25,390.85 L1204.75,391.40 L1205.25,391.08 L1205.75,389.90 L1206.25,390.30 L1206.76,390.56 L1207.26,389.57 L1207.76,389.94 L1208.26,389.06 L1208.76,390.19 L1209.26,390.13 L1209.77,390.68 L1210.27,390.26 L1210.77,390.77 L1211.27,390.52 L1211.77,390.69 L1212.27,390.85 L1212.77,390.42 L1213.28,390.61 L1213.78,391.18 L1214.28,391.83 L1214.78,392.22 L1215.28,392.04 L1215.78,391.47 L1216.29,392.48 L1216.79,392.42 L1217.29,392.01 L1217.79,391.61 L1218.29,390.92 L1218.79,389.99 L1219.30,388.83 L1219.80,388.87 L1220.30,388.79 L1220.80,389.13" fill="none" stroke="#FADE2A" stroke-width="1" stroke-linejoin="round" /><path d="M964.50,390.04 L965.00,385.92 L965.50,381.79 L966.00,379.98 L966.51,379.03 L967.01,378.02 L967.51,378.90 L968.01,380.06 L968.51,383.26 L969.01,383.63 L969.52,381.58 L970.02,381.52 L970.52,380.99 L971.02,382.66 L971.52,385.11 L972.02,386.16 L972.53,383.12 L973.03,383.31 L973.53,380.12 L974.03,376.66 L974.53,372.99 L975.03,372.50 L975.53,374.79 L976.04,378.00 L976.54,381.54 L977.04,384.17 L977.54,385.31 L978.04,386.16 L978.54,387.21 L979.05,384.35 L979.55,386.03 L980.05,385.13 L980.55,386.25 L981.05,384.04 L981.55,382.60 L982.05,378.75 L982.56,373.16 L983.06,374.43 L983.56,374.00 L984.06,378.26 L984.56,380.92 L985.06,383.54 L985.57,386.29 L986.07,385.95 L986.57,384.42 L987.07,382.70 L987.57,378.84 L988.07,378.61 L988.58,376.06 L989.08,378.74 L989.58,378.33 L990.08,379.08 L990.58,377.98 L991.08,379.05 L991.58,378.13 L992.09,380.91 L992.59,382.75 L993.09,386.83 L993.59,390.03 L994.09,391.76 L994.59,388.98 L995.10,385.87 L995.60,380.65 L996.10,378.78 L996.60,375.95 L997.10,375.91 L997.60,377.47 L998.10,379.42 L998.61,380.97 L999.11,382.41 L999.61,383.00 L1000.11,382.81 L1000.61,383.01 L1001.11,384.10 L1001.62,386.80 L1002.12,388.38 L1002.62,388.82 L1003.12,387.28 L1003.62,384.77 L1004.12,381.03 L1004.63,378.00 L1005.13,379.68 L1005.63,381.98 L1006.13,383.07 L1006.63,388.18 L1007.13,390.17 L1007.63,391.23 L1008.14,392.44 L1008.64,387.97 L1009.14,387.24 L1009.64,387.94 L1010.14,387.18 L1010.64,387.23 L1011.15,386.96 L1011.65,384.16 L1012.15,380.98 L1012.65,377.83 L1013.15,377.03 L1013.65,378.52 L1014.15,380.35 L1014.66,386.34 L1015.16,388.93 L1015.66,391.14 L1016.16,392.70 L1016.66,392.37 L1017.16,388.88 L1017.67,385.24 L1018.17,383.34 L1018.67,382.05 L1019.17,384.59 L1019.67,384.00 L1020.17,383.14 L1020.68,382.93 L1021.18,383.87 L1021.68,380.81 L1022.18,380.52 L1022.68,383.97 L1023.18,388.51 L1023.68,390.30 L1024.19,390.29 L1024.69,386.69 L1025.19,384.96 L1025.69,381.42 L1026.19,376.92 L1026.69,376.90 L1027.20,375.78 L1027.70,380.11 L1028.20,382.30 L1028.70,382.84 L1029.20,382.89 L1029.70,383.51 L1030.21,383.63 L1030.71,385.76 L1031.21,385.68 L1031.71,386.65 L1032.21,386.94 L1032.71,384.78 L1033.21,382.58 L1033.72,377.23 L1034.22,373.31 L1034.72,370.33 L1035.22,368.64 L1035.72,369.21 L1036.22,370.91 L1036.73,373.69 L1037.23,372.58 L1037.73,368.47 L1038.23,356.04 L1038.73,343.05 L1039.23,331.67 L1039.73,323.88 L1040.24,324.54 L1040.74,330.96 L1041.24,342.22 L1041.74,351.19 L1042.24,360.41 L1042.74,365.65 L1043.25,369.90 L1043.75,369.52 L1044.25,374.58 L1044.75,380.78 L1045.25,383.35 L1045.75,387.37 L1046.26,383.02 L1046.76,383.06 L1047.26,380.43 L1047.76,378.11 L1048.26,377.91 L1048.76,375.54 L1049.26,377.09 L1049.77,375.70 L1050.27,378.19 L1050.77,376.75 L1051.27,374.57 L1051.77,374.68 L1052.27,378.99 L1052.78,382.44 L1053.28,384.04 L1053.78,387.15 L1054.28,390.14 L1054.78,389.06 L1055.28,386.29 L1055.78,383.16 L1056.29,379.79 L1056.79,376.85 L1057.29,378.02 L1057.79,378.87 L1058.29,383.16 L1058.79,385.02 L1059.30,386.51 L1059.80,385.65 L1060.30,386.37 L1060.80,386.87 L1061.30,385.46 L1061.80,385.82 L1062.31,386.84 L1062.81,385.57 L1063.31,384.07 L1063.81,381.35 L1064.31,377.07 L1064.81,375.19 L1065.31,375.76 L1065.82,378.51 L1066.32,382.14 L1066.82,384.94 L1067.32,387.92 L1067.82,389.92 L1068.32,388.13 L1068.83,388.21 L1069.33,386.84 L1069.83,385.83 L1070.33,387.68 L1070.83,388.75 L1071.33,385.76 L1071.84,385.39 L1072.34,381.26 L1072.84,379.83 L1073.34,378.11 L1073.84,379.03 L1074.34,384.06 L1074.84,385.15 L1075.35,389.61 L1075.85,391.40 L1076.35,390.68 L1076.85,387.31 L1077.35,383.98 L1077.85,380.96 L1078.36,381.61 L1078.86,380.48 L1079.36,382.87 L1079.86,381.96 L1080.36,382.03 L1080.86,383.36 L1081.36,382.50 L1081.87,383.13 L1082.37,384.20 L1082.87,388.62 L1083.37,391.81 L1083.87,394.12 L1084.37,392.44 L1084.88,391.25 L1085.38,388.69 L1085.88,384.07 L1086.38,380.54 L1086.88,378.59 L1087.38,379.12 L1087.89,380.90 L1088.39,383.88 L1088.89,385.05 L1089.39,383.79 L1089.89,384.75 L1090.39,384.94 L1090.89,385.47 L1091.40,386.24 L1091.90,387.37 L1092.40,389.19 L1092.90,388.14 L1093.40,386.22 L1093.90,384.06 L1094.41,381.00 L1094.91,379.27 L1095.41,379.48 L1095.91,380.05 L1096.41,386.55 L1096.91,388.44 L1097.41,391.30 L1097.92,392.01 L1098.42,390.35 L1098.92,387.46 L1099.42,386.37 L1099.92,385.18 L1100.42,384.88 L1100.93,383.94 L1101.43,382.06 L1101.93,381.44 L1102.43,379.78 L1102.93,377.83 L1103.43,376.92 L1103.94,378.34 L1104.44,379.22 L1104.94,383.96 L1105.44,388.39 L1105.94,389.26 L1106.44,391.27 L1106.94,388.23 L1107.45,385.38 L1107.95,384.84 L1108.45,383.39 L1108.95,382.76 L1109.45,382.01 L1109.95,382.67 L1110.46,385.34 L1110.96,383.14 L1111.46,383.92 L1111.96,383.94 L1112.46,385.15 L1112.96,387.07 L1113.46,390.89 L1113.97,391.98 L1114.47,392.30 L1114.97,388.81 L1115.47,383.91 L1115.97,379.38 L1116.47,379.01 L1116.98,379.11 L1117.48,379.04 L1117.98,382.20 L1118.48,382.87 L1118.98,386.82 L1119.48,389.62 L1119.99,388.90 L1120.49,388.58 L1120.99,390.97 L1121.49,390.82 L1121.99,391.49 L1122.49,391.88 L1122.99,391.65 L1123.50,391.02 L1124.00,388.87 L1124.50,387.80 L1125.00,386.96 L1125.50,384.67 L1126.00,386.69 L1126.51,388.41 L1127.01,392.05 L1127.51,392.06 L1128.01,391.50 L1128.51,392.75 L1129.01,389.62 L1129.52,389.95 L1130.02,388.73 L1130.52,389.14 L1131.02,388.96 L1131.52,388.04 L1132.02,388.98 L1132.52,386.48 L1133.03,387.85 L1133.53,387.93 L1134.03,387.39 L1134.53,390.77 L1135.03,392.42 L1135.53,393.28 L1136.04,394.02 L1136.54,396.34 L1137.04,392.91 L1137.54,389.69 L1138.04,388.40 L1138.54,388.43 L1139.04,388.34 L1139.55,388.26 L1140.05,389.36 L1140.55,388.73 L1141.05,388.51 L1141.55,388.25 L1142.05,387.17 L1142.56,389.12 L1143.06,391.53 L1143.56,390.92 L1144.06,394.02 L1144.56,393.81 L1145.06,392.74 L1145.57,391.23 L1146.07,389.83 L1146.57,387.66 L1147.07,385.04 L1147.57,388.13 L1148.07,389.16 L1148.57,389.69 L1149.08,391.27 L1149.58,391.81 L1150.08,391.68 L1150.58,393.84 L1151.08,392.70 L1151.58,391.95 L1152.09,391.90 L1152.59,391.23 L1153.09,391.35 L1153.59,390.58 L1154.09,388.41 L1154.59,386.77 L1155.09,385.24 L1155.60,384.96 L1156.10,387.19 L1156.60,389.77 L1157.10,392.05 L1157.60,391.98 L1158.10,392.45 L1158.61,392.40 L1159.11,391.69 L1159.61,390.89 L1160.11,391.18 L1160.61,390.56 L1161.11,392.16 L1161.62,391.28 L1162.12,391.14 L1162.62,388.90 L1163.12,389.10 L1163.62,388.31 L1164.12,388.41 L1164.62,389.00 L1165.13,392.75 L1165.63,394.48 L1166.13,393.63 L1166.63,394.77 L1167.13,391.82 L1167.63,390.65 L1168.14,388.42 L1168.64,388.89 L1169.14,386.56 L1169.64,388.21 L1170.14,389.36 L1170.64,387.38 L1171.15,388.87 L1171.65,386.58 L1172.15,389.67 L1172.65,391.23 L1173.15,392.24 L1173.65,392.48 L1174.15,395.02 L1174.66,394.74 L1175.16,393.61 L1175.66,392.85 L1176.16,389.63 L1176.66,388.33 L1177.16,388.14 L1177.67,386.62 L1178.17,387.97 L1178.67,389.88 L1179.17,391.80 L1179.67,393.17 L1180.17,390.84 L1180.67,391.00 L1181.18,392.23 L1181.68,391.03 L1182.18,392.77 L1182.68,391.76 L1183.18,391.36 L1183.68,390.18 L1184.19,388.80 L1184.69,387.38 L1185.19,387.77 L1185.69,387.49 L1186.19,389.15 L1186.69,391.15 L1187.20,392.91 L1187.70,394.08 L1188.20,393.54 L1188.70,396.54 L1189.20,392.66 L1189.70,391.90 L1190.20,388.82 L1190.71,389.55 L1191.21,391.58 L1191.71,389.41 L1192.21,389.47 L1192.71,387.13 L1193.21,388.02 L1193.72,386.92 L1194.22,387.65 L1194.72,389.26 L1195.22,391.80 L1195.72,394.78 L1196.22,393.76 L1196.72,393.06 L1197.23,392.71 L1197.73,391.77 L1198.23,389.14 L1198.73,388.02 L1199.23,388.74 L1199.73,389.31 L1200.24,388.92 L1200.74,391.70 L1201.24,391.36 L1201.74,392.45 L1202.24,391.43 L1202.74,391.94 L1203.25,393.07 L1203.75,393.93 L1204.25,392.44 L1204.75,393.95 L1205.25,392.55 L1205.75,388.37 L1206.25,388.00 L1206.76,387.71 L1207.26,385.21 L1207.76,387.02 L1208.26,386.31 L1208.76,390.65 L1209.26,391.55 L1209.77,393.25 L1210.27,391.95 L1210.77,392.85 L1211.27,392.05 L1211.77,392.67 L1212.27,393.38 L1212.77,392.32 L1213.28,392.00 L1213.78,391.66 L1214.28,390.83 L1214.78,389.30 L1215.28,387.11 L1215.78,385.33 L1216.29,389.03 L1216.79,391.22 L1217.29,393.01 L1217.79,394.52 L1218.29,394.49 L1218.79,392.93 L1219.30,390.09 L1219.80,390.03 L1220.30,389.66 L1220.80,390.38" fill="none" stroke="#6cb264" stroke-width="0.95" stroke-linejoin="round" /><rect x="951.20" y="441.40" width="13.5" height="4" rx="2" fill="#73BF69"/><text x="973.20" y="447.60" font-size="12.8" fill="#ccccdc" text-anchor="start" font-weight="400" letter-spacing="-0.05">1m load average</text><rect x="1077.30" y="441.40" width="13.5" height="4" rx="2" fill="#FADE2A"/><text x="1099.60" y="447.60" font-size="12.8" fill="#ccccdc" text-anchor="start" font-weight="400" letter-spacing="0.0">5m load average</text><rect x="951.20" y="464.40" width="13.5" height="4" rx="2" fill="#8AB8FF"/><text x="973.20" y="470.60" font-size="12.8" fill="#ccccdc" text-anchor="start" font-weight="400" letter-spacing="-0.05">15m load average</text><rect x="1085.00" y="464.40" width="13.5" height="4" rx="2" fill="#FF9830"/><text x="1107.20" y="470.60" font-size="12.8" fill="#ccccdc" text-anchor="start" font-weight="400" letter-spacing="0.0">logical cores</text><line x1="386.5" y1="579" x2="386.5" y2="702" stroke="rgba(204,204,220,0.14)" stroke-width="1"/><line x1="438.5" y1="579" x2="438.5" y2="702" stroke="rgba(204,204,220,0.14)" stroke-width="1"/><line x1="490.5" y1="579" x2="490.5" y2="702" stroke="rgba(204,204,220,0.14)" stroke-width="1"/><line x1="542.5" y1="579" x2="542.5" y2="702" stroke="rgba(204,204,220,0.14)" stroke-width="1"/><line x1="595.5" y1="579" x2="595.5" y2="702" stroke="rgba(204,204,220,0.14)" stroke-width="1"/><line x1="647.5" y1="579" x2="647.5" y2="702" stroke="rgba(204,204,220,0.14)" stroke-width="1"/><line x1="699.5" y1="579" x2="699.5" y2="702" stroke="rgba(204,204,220,0.14)" stroke-width="1"/><line x1="751.5" y1="579" x2="751.5" y2="702" stroke="rgba(204,204,220,0.14)" stroke-width="1"/><line x1="803.5" y1="579" x2="803.5" y2="702" stroke="rgba(204,204,220,0.14)" stroke-width="1"/><line x1="856.5" y1="579" x2="856.5" y2="702" stroke="rgba(204,204,220,0.14)" stroke-width="1"/><line x1="908.5" y1="579" x2="908.5" y2="702" stroke="rgba(204,204,220,0.14)" stroke-width="1"/><line x1="960.5" y1="579" x2="960.5" y2="702" stroke="rgba(204,204,220,0.14)" stroke-width="1"/><line x1="1012.5" y1="579" x2="1012.5" y2="702" stroke="rgba(204,204,220,0.14)" stroke-width="1"/><line x1="1064.5" y1="579" x2="1064.5" y2="702" stroke="rgba(204,204,220,0.14)" stroke-width="1"/><line x1="1117.5" y1="579" x2="1117.5" y2="702" stroke="rgba(204,204,220,0.14)" stroke-width="1"/><line x1="1169.5" y1="579" x2="1169.5" y2="702" stroke="rgba(204,204,220,0.14)" stroke-width="1"/><line x1="382" y1="592.5" x2="1220.5" y2="592.5" stroke="rgba(204,204,220,0.14)" stroke-width="1"/><line x1="382" y1="645.5" x2="1220.5" y2="645.5" stroke="rgba(204,204,220,0.14)" stroke-width="1"/><line x1="382" y1="697.5" x2="1220.5" y2="697.5" stroke="rgba(204,204,220,0.14)" stroke-width="1"/><text x="376.60" y="596.10" font-size="12" fill="rgba(204,204,220,0.88)" text-anchor="end" font-weight="400" letter-spacing="0">1 GiB</text><text x="376.60" y="648.90" font-size="12" fill="rgba(204,204,220,0.88)" text-anchor="end" font-weight="400" letter-spacing="0">512 MiB</text><text x="376.60" y="701.10" font-size="12" fill="rgba(204,204,220,0.88)" text-anchor="end" font-weight="400" letter-spacing="0">0 B</text><text x="386.30" y="715.30" font-size="12.8" fill="rgba(204,204,220,0.88)" text-anchor="middle" font-weight="400" letter-spacing="0">22:00</text><text x="438.50" y="715.30" font-size="12.8" fill="rgba(204,204,220,0.88)" text-anchor="middle" font-weight="400" letter-spacing="0">22:15</text><text x="490.70" y="715.30" font-size="12.8" fill="rgba(204,204,220,0.88)" text-anchor="middle" font-weight="400" letter-spacing="0">22:30</text><text x="542.90" y="715.30" font-size="12.8" fill="rgba(204,204,220,0.88)" text-anchor="middle" font-weight="400" letter-spacing="0">22:45</text><text x="595.10" y="715.30" font-size="12.8" fill="rgba(204,204,220,0.88)" text-anchor="middle" font-weight="400" letter-spacing="0">23:00</text><text x="647.30" y="715.30" font-size="12.8" fill="rgba(204,204,220,0.88)" text-anchor="middle" font-weight="400" letter-spacing="0">23:15</text><text x="699.50" y="715.30" font-size="12.8" fill="rgba(204,204,220,0.88)" text-anchor="middle" font-weight="400" letter-spacing="0">23:30</text><text x="751.70" y="715.30" font-size="12.8" fill="rgba(204,204,220,0.88)" text-anchor="middle" font-weight="400" letter-spacing="0">23:45</text><text x="803.90" y="715.30" font-size="12.8" fill="rgba(204,204,220,0.88)" text-anchor="middle" font-weight="400" letter-spacing="0">00:00</text><text x="856.10" y="715.30" font-size="12.8" fill="rgba(204,204,220,0.88)" text-anchor="middle" font-weight="400" letter-spacing="0">00:15</text><text x="908.30" y="715.30" font-size="12.8" fill="rgba(204,204,220,0.88)" text-anchor="middle" font-weight="400" letter-spacing="0">00:30</text><text x="960.50" y="715.30" font-size="12.8" fill="rgba(204,204,220,0.88)" text-anchor="middle" font-weight="400" letter-spacing="0">00:45</text><text x="1012.70" y="715.30" font-size="12.8" fill="rgba(204,204,220,0.88)" text-anchor="middle" font-weight="400" letter-spacing="0">01:00</text><text x="1064.90" y="715.30" font-size="12.8" fill="rgba(204,204,220,0.88)" text-anchor="middle" font-weight="400" letter-spacing="0">01:15</text><text x="1117.10" y="715.30" font-size="12.8" fill="rgba(204,204,220,0.88)" text-anchor="middle" font-weight="400" letter-spacing="0">01:30</text><text x="1169.30" y="715.30" font-size="12.8" fill="rgba(204,204,220,0.88)" text-anchor="middle" font-weight="400" letter-spacing="0">01:45</text><defs><linearGradient id="gtot" x1="0" y1="598" x2="0" y2="697" gradientUnits="userSpaceOnUse"><stop offset="0" stop-color="#5794F2" stop-opacity="0.09"/><stop offset="1" stop-color="#5794F2" stop-opacity="0.025"/></linearGradient><linearGradient id="gav" x1="0" y1="635" x2="0" y2="697" gradientUnits="userSpaceOnUse"><stop offset="0" stop-color="#F2495C" stop-opacity="0.04"/><stop offset="1" stop-color="#F2495C" stop-opacity="0.01"/></linearGradient></defs><path d="M386.30,598.40 L390.30,598.40 L394.30,598.40 L398.30,598.40 L402.30,598.40 L406.30,598.40 L410.30,598.40 L414.30,598.40 L418.30,598.40 L422.30,598.40 L426.30,598.40 L430.30,598.40 L434.30,598.40 L438.30,598.40 L442.30,598.40 L446.30,598.40 L450.30,598.40 L454.30,598.40 L458.30,598.40 L462.30,598.40 L466.30,598.40 L470.30,598.40 L474.30,598.40 L478.30,598.40 L482.30,598.40 L486.30,598.40 L490.30,598.40 L494.30,598.40 L498.30,598.40 L502.30,598.40 L506.30,598.40 L510.30,598.40 L514.30,598.40 L518.30,598.40 L522.30,598.40 L526.30,598.40 L530.30,598.40 L534.30,598.40 L538.30,598.40 L542.30,598.40 L546.30,598.40 L550.30,598.40 L554.30,598.40 L558.30,598.40 L562.30,598.40 L566.30,598.40 L570.30,598.40 L574.30,598.40 L578.30,598.40 L582.30,598.40 L586.30,598.40 L590.30,598.40 L594.30,598.40 L598.30,598.40 L602.30,598.40 L606.30,598.40 L610.30,598.40 L614.30,598.40 L618.30,598.40 L622.30,598.40 L626.30,598.40 L630.30,598.40 L634.30,598.40 L638.30,598.40 L642.30,598.40 L646.30,598.40 L650.30,598.40 L654.30,598.40 L658.30,598.40 L662.30,598.40 L666.30,598.40 L670.30,598.40 L674.30,598.40 L678.30,598.40 L682.30,598.40 L686.30,598.40 L690.30,598.40 L694.30,598.40 L698.30,598.40 L702.30,598.40 L706.30,598.40 L710.30,598.40 L714.30,598.40 L718.30,598.40 L722.30,598.40 L726.30,598.40 L730.30,598.40 L734.30,598.40 L738.30,598.40 L742.30,598.40 L746.30,598.40 L750.30,598.40 L754.30,598.40 L758.30,598.40 L762.30,598.40 L766.30,598.40 L770.30,598.40 L774.30,598.40 L778.30,598.40 L782.30,598.40 L786.30,598.40 L790.30,598.40 L794.30,598.40 L798.30,598.40 L802.30,598.40 L806.30,598.40 L810.30,598.40 L814.30,598.40 L818.30,598.40 L822.30,598.40 L826.30,598.40 L830.30,598.40 L834.30,598.40 L838.30,598.40 L842.30,598.40 L846.30,598.40 L850.30,598.40 L854.30,598.40 L858.30,598.40 L862.30,598.40 L866.30,598.40 L870.30,598.40 L874.30,598.40 L878.30,598.40 L882.30,598.40 L886.30,598.40 L890.30,598.40 L894.30,598.40 L898.30,598.40 L902.30,598.40 L906.30,598.40 L910.30,598.40 L914.30,598.40 L918.30,598.40 L922.30,598.40 L926.30,598.40 L930.30,598.40 L934.30,598.40 L938.30,598.40 L942.30,598.40 L946.30,598.40 L950.30,598.40 L954.30,598.40 L958.30,598.40 L962.30,598.40 L966.30,598.40 L970.30,598.40 L974.30,598.40 L978.30,598.40 L982.30,598.40 L986.30,598.40 L990.30,598.40 L994.30,598.40 L998.30,598.40 L1002.30,598.40 L1006.30,598.40 L1010.30,598.40 L1014.30,598.40 L1018.30,598.40 L1022.30,598.40 L1026.30,598.40 L1030.30,598.40 L1034.30,598.40 L1038.30,598.40 L1042.30,598.40 L1046.30,598.40 L1050.30,598.40 L1054.30,598.40 L1058.30,598.40 L1062.30,598.40 L1066.30,598.40 L1070.30,598.40 L1074.30,598.40 L1078.30,598.40 L1082.30,598.40 L1086.30,598.40 L1090.30,598.40 L1094.30,598.40 L1098.30,598.40 L1102.30,598.40 L1106.30,598.40 L1110.30,598.40 L1114.30,598.40 L1118.30,598.40 L1122.30,598.40 L1126.30,598.40 L1130.30,598.40 L1134.30,598.40 L1138.30,598.40 L1142.30,598.40 L1146.30,598.40 L1150.30,598.40 L1154.30,598.40 L1158.30,598.40 L1162.30,598.40 L1166.30,598.40 L1170.30,598.40 L1174.30,598.40 L1178.30,598.40 L1182.30,598.40 L1186.30,598.40 L1190.30,598.40 L1194.30,598.40 L1198.30,598.40 L1202.30,598.40 L1206.30,598.40 L1210.30,598.40 L1214.30,598.40 L1218.30,598.40 L1218.30,697.4 L386.30,697.4 Z" fill="url(#gtot)" stroke="none"/><path d="M386.30,637.20 L387.30,637.20 L388.30,637.20 L389.30,637.20 L390.30,637.20 L391.30,637.20 L392.30,637.20 L393.30,637.20 L394.30,637.20 L395.30,637.20 L396.30,637.20 L397.30,637.20 L398.30,637.20 L399.30,637.20 L400.30,637.20 L401.30,637.20 L402.30,637.20 L403.30,637.20 L404.30,637.20 L405.30,637.20 L406.30,637.20 L407.30,637.20 L408.30,637.20 L409.30,637.20 L410.30,637.20 L411.30,637.20 L412.30,637.20 L413.30,637.20 L414.30,637.20 L415.30,637.20 L416.30,637.20 L417.30,637.20 L418.30,637.20 L419.30,637.20 L420.30,637.20 L421.30,637.20 L422.30,637.20 L423.30,637.20 L424.30,637.20 L425.30,637.20 L426.30,637.20 L427.30,637.20 L428.30,637.20 L429.30,637.20 L430.30,637.20 L431.30,637.20 L432.30,637.20 L433.30,637.20 L434.30,637.20 L435.30,637.20 L436.30,637.20 L437.30,637.20 L438.30,637.20 L439.30,637.20 L440.30,637.20 L441.30,637.20 L442.30,637.20 L443.30,637.20 L444.30,637.20 L445.30,637.20 L446.30,637.20 L447.30,637.20 L448.30,637.20 L449.30,637.20 L450.30,637.20 L451.30,637.20 L452.30,637.20 L453.30,637.20 L454.30,637.20 L455.30,637.20 L456.30,637.20 L457.30,637.20 L458.30,637.20 L459.30,637.20 L460.30,637.20 L461.30,637.20 L462.30,637.20 L463.30,637.20 L464.30,637.20 L465.30,637.20 L466.30,637.20 L467.30,637.20 L468.30,637.20 L469.30,637.20 L470.30,637.20 L471.30,637.20 L472.30,637.20 L473.30,637.20 L474.30,637.20 L475.30,637.20 L476.30,637.20 L477.30,637.20 L478.30,637.20 L479.30,637.20 L480.30,637.20 L481.30,637.20 L482.30,637.20 L483.30,637.20 L484.30,637.20 L485.30,637.20 L486.30,637.20 L487.30,637.20 L488.30,637.20 L489.30,637.20 L490.30,637.20 L491.30,637.20 L492.30,637.20 L493.30,637.20 L494.30,637.20 L495.30,637.20 L496.30,637.20 L497.30,637.20 L498.30,637.20 L499.30,637.20 L500.30,637.20 L501.30,637.20 L502.30,637.20 L503.30,637.20 L504.30,637.20 L505.30,637.20 L506.30,637.20 L507.30,637.20 L508.30,637.20 L509.30,637.20 L510.30,637.20 L511.30,637.20 L512.30,637.20 L513.30,637.20 L514.30,637.20 L515.30,637.20 L516.30,637.20 L517.30,637.20 L518.30,637.20 L519.30,637.20 L520.30,637.20 L521.30,637.20 L522.30,637.20 L523.30,637.20 L524.30,637.20 L525.30,637.20 L526.30,637.20 L527.30,637.20 L528.30,637.20 L529.30,637.20 L530.30,637.20 L531.30,637.20 L532.30,637.20 L533.30,637.20 L534.30,637.20 L535.30,637.20 L536.30,637.20 L537.30,637.20 L538.30,637.20 L539.30,637.20 L540.30,637.20 L541.30,637.20 L542.30,637.20 L543.30,637.20 L544.30,637.20 L545.30,637.20 L546.30,637.20 L547.30,637.20 L548.30,637.20 L549.30,637.20 L550.30,637.20 L551.30,637.20 L552.30,637.20 L553.30,637.20 L554.30,637.20 L555.30,637.20 L556.30,637.20 L557.30,637.20 L558.30,637.20 L559.30,637.20 L560.30,637.20 L561.30,637.20 L562.30,637.20 L563.30,637.20 L564.30,637.20 L565.30,637.20 L566.30,637.20 L567.30,637.20 L568.30,637.20 L569.30,637.20 L570.30,637.20 L571.30,637.20 L572.30,637.20 L573.30,637.20 L574.30,637.20 L575.30,637.20 L576.30,637.20 L577.30,637.20 L578.30,637.20 L579.30,637.20 L580.30,637.20 L581.30,637.20 L582.30,637.20 L583.30,637.20 L584.30,637.20 L585.30,637.20 L586.30,637.20 L587.30,637.20 L588.30,637.20 L589.30,637.20 L590.30,637.20 L591.30,637.20 L592.30,637.20 L593.30,637.20 L594.30,637.20 L595.30,637.20 L596.30,637.07 L597.30,636.65 L598.30,636.22 L599.30,635.80 L600.30,635.47 L601.30,635.37 L602.30,635.27 L603.30,635.27 L604.30,635.49 L605.30,635.71 L606.30,635.93 L607.30,636.15 L608.30,636.28 L609.30,636.24 L610.30,636.18 L611.30,636.13 L612.30,636.09 L613.30,636.03 L614.30,636.01 L615.30,636.04 L616.30,636.08 L617.30,636.11 L618.30,636.14 L619.30,636.18 L620.30,636.32 L621.30,636.70 L622.30,637.08 L623.30,637.47 L624.30,637.85 L625.30,638.23 L626.30,638.64 L627.30,639.12 L628.30,639.59 L629.30,640.07 L630.30,639.85 L631.30,638.04 L632.30,636.22 L633.30,634.40 L634.30,634.97 L635.30,635.54 L636.30,636.10 L637.30,636.50 L638.30,636.52 L639.30,636.53 L640.30,636.54 L641.30,636.56 L642.30,636.57 L643.30,636.58 L644.30,636.60 L645.30,636.61 L646.30,636.62 L647.30,636.63 L648.30,636.65 L649.30,636.66 L650.30,636.67 L651.30,636.69 L652.30,636.70 L653.30,636.71 L654.30,636.73 L655.30,636.74 L656.30,636.75 L657.30,636.76 L658.30,636.78 L659.30,636.79 L660.30,636.80 L661.30,636.80 L662.30,636.80 L663.30,636.80 L664.30,636.80 L665.30,636.80 L666.30,636.80 L667.30,636.80 L668.30,636.80 L669.30,636.80 L670.30,636.80 L671.30,636.80 L672.30,636.80 L673.30,636.80 L674.30,636.80 L675.30,636.80 L676.30,636.80 L677.30,636.80 L678.30,636.80 L679.30,636.80 L680.30,636.80 L681.30,636.80 L682.30,636.80 L683.30,636.80 L684.30,636.80 L685.30,636.80 L686.30,636.80 L687.30,636.80 L688.30,636.80 L689.30,636.80 L690.30,636.80 L691.30,636.80 L692.30,636.80 L693.30,636.80 L694.30,636.80 L695.30,636.80 L696.30,636.80 L697.30,636.80 L698.30,636.80 L699.30,636.80 L700.30,636.80 L701.30,636.80 L702.30,636.80 L703.30,636.80 L704.30,636.80 L705.30,636.80 L706.30,636.80 L707.30,636.80 L708.30,636.80 L709.30,636.80 L710.30,636.80 L711.30,636.80 L712.30,636.80 L713.30,636.80 L714.30,636.80 L715.30,636.80 L716.30,636.80 L717.30,636.80 L718.30,636.80 L719.30,636.80 L720.30,636.80 L721.30,636.80 L722.30,636.80 L723.30,636.80 L724.30,636.80 L725.30,636.80 L726.30,636.80 L727.30,636.80 L728.30,636.80 L729.30,636.80 L730.30,636.80 L731.30,636.80 L732.30,636.80 L733.30,636.80 L734.30,636.80 L735.30,636.80 L736.30,636.79 L737.30,636.76 L738.30,636.65 L739.30,636.40 L740.30,635.98 L741.30,635.60 L742.30,635.52 L743.30,635.82 L744.30,636.25 L745.30,636.58 L746.30,636.75 L747.30,636.80 L748.30,636.82 L749.30,636.82 L750.30,636.82 L751.30,636.83 L752.30,636.83 L753.30,636.83 L754.30,636.83 L755.30,636.84 L756.30,636.84 L757.30,636.84 L758.30,636.84 L759.30,636.85 L760.30,636.85 L761.30,636.85 L762.30,636.85 L763.30,636.85 L764.30,636.86 L765.30,636.86 L766.30,636.86 L767.30,636.86 L768.30,636.87 L769.30,636.87 L770.30,636.87 L771.30,636.87 L772.30,636.88 L773.30,636.88 L774.30,636.88 L775.30,636.88 L776.30,636.88 L777.30,636.89 L778.30,636.89 L779.30,636.89 L780.30,636.89 L781.30,636.90 L782.30,636.90 L783.30,636.90 L784.30,636.90 L785.30,636.91 L786.30,636.91 L787.30,636.91 L788.30,636.91 L789.30,636.92 L790.30,636.92 L791.30,636.92 L792.30,636.92 L793.30,636.92 L794.30,636.93 L795.30,636.93 L796.30,636.93 L797.30,636.93 L798.30,636.94 L799.30,636.94 L800.30,636.94 L801.30,636.94 L802.30,636.95 L803.30,636.95 L804.30,636.95 L805.30,636.95 L806.30,636.96 L807.30,636.96 L808.30,636.96 L809.30,636.96 L810.30,636.96 L811.30,636.97 L812.30,636.97 L813.30,636.97 L814.30,636.97 L815.30,636.98 L816.30,636.98 L817.30,636.98 L818.30,636.98 L819.30,636.99 L820.30,636.99 L821.30,636.99 L822.30,636.99 L823.30,636.99 L824.30,637.00 L825.30,637.00 L826.30,637.00 L827.30,637.00 L828.30,637.01 L829.30,637.01 L830.30,637.01 L831.30,637.01 L832.30,637.02 L833.30,637.02 L834.30,637.02 L835.30,637.02 L836.30,637.03 L837.30,637.03 L838.30,637.03 L839.30,637.03 L840.30,637.03 L841.30,637.04 L842.30,637.04 L843.30,637.04 L844.30,637.04 L845.30,637.05 L846.30,637.05 L847.30,637.05 L848.30,637.05 L849.30,637.06 L850.30,637.06 L851.30,637.06 L852.30,637.06 L853.30,637.07 L854.30,637.07 L855.30,637.07 L856.30,637.07 L857.30,637.07 L858.30,637.08 L859.30,637.08 L860.30,637.08 L861.30,637.08 L862.30,637.09 L863.30,637.09 L864.30,637.09 L865.30,637.09 L866.30,637.09 L867.30,637.06 L868.30,636.95 L869.30,636.70 L870.30,636.29 L871.30,635.91 L872.30,635.83 L873.30,636.12 L874.30,636.56 L875.30,636.89 L876.30,637.05 L877.30,637.11 L878.30,637.12 L879.30,637.13 L880.30,637.13 L881.30,637.13 L882.30,637.13 L883.30,637.14 L884.30,637.14 L885.30,637.14 L886.30,637.14 L887.30,637.14 L888.30,637.15 L889.30,637.15 L890.30,637.15 L891.30,637.15 L892.30,637.16 L893.30,637.16 L894.30,637.16 L895.30,637.16 L896.30,637.17 L897.30,637.17 L898.30,637.17 L899.30,637.17 L900.30,637.17 L901.30,637.18 L902.30,637.18 L903.30,637.18 L904.30,637.18 L905.30,637.19 L906.30,637.19 L907.30,637.19 L908.30,637.19 L909.30,637.20 L910.30,637.20 L911.30,637.05 L912.30,636.55 L913.30,636.05 L914.30,635.55 L915.30,635.05 L916.30,634.70 L917.30,634.70 L918.30,634.70 L919.30,634.70 L920.30,634.70 L921.30,634.70 L922.30,634.70 L923.30,634.70 L924.30,634.70 L925.30,634.70 L926.30,634.70 L927.30,634.70 L928.30,634.70 L929.30,634.70 L930.30,634.70 L931.30,634.70 L932.30,634.70 L933.30,634.70 L934.30,634.70 L935.30,634.70 L936.30,634.70 L937.30,634.70 L938.30,634.70 L939.30,634.70 L940.30,634.70 L941.30,634.70 L942.30,634.70 L943.30,634.70 L944.30,634.70 L945.30,634.70 L946.30,634.70 L947.30,634.70 L948.30,634.70 L949.30,634.70 L950.30,634.70 L951.30,634.70 L952.30,634.70 L953.30,634.70 L954.30,634.70 L955.30,634.70 L956.30,634.70 L957.30,634.70 L958.30,634.70 L959.30,634.70 L960.30,634.70 L961.30,634.70 L962.30,634.70 L963.30,634.70 L964.30,634.70 L965.30,634.70 L966.30,634.70 L967.30,634.70 L968.30,634.70 L969.30,634.70 L970.30,634.70 L971.30,634.70 L972.30,634.70 L973.30,634.70 L974.30,634.70 L975.30,634.70 L976.30,634.70 L977.30,634.70 L978.30,634.70 L979.30,634.70 L980.30,634.70 L981.30,634.70 L982.30,634.70 L983.30,634.70 L984.30,634.70 L985.30,634.70 L986.30,634.70 L987.30,634.70 L988.30,634.70 L989.30,634.70 L990.30,634.70 L991.30,634.70 L992.30,634.70 L993.30,634.70 L994.30,634.70 L995.30,634.70 L996.30,634.70 L997.30,634.70 L998.30,634.70 L999.30,634.70 L1000.30,634.70 L1001.30,634.70 L1002.30,634.70 L1003.30,634.70 L1004.30,634.70 L1005.30,634.70 L1006.30,634.70 L1007.30,634.70 L1008.30,634.70 L1009.30,634.70 L1010.30,634.70 L1011.30,634.70 L1012.30,634.70 L1013.30,634.70 L1014.30,634.70 L1015.30,634.70 L1016.30,634.70 L1017.30,634.70 L1018.30,634.70 L1019.30,634.70 L1020.30,634.70 L1021.30,634.70 L1022.30,634.70 L1023.30,634.70 L1024.30,634.70 L1025.30,634.70 L1026.30,634.70 L1027.30,634.70 L1028.30,634.70 L1029.30,634.70 L1030.30,634.70 L1031.30,634.70 L1032.30,634.70 L1033.30,634.70 L1034.30,634.70 L1035.30,634.70 L1036.30,634.70 L1037.30,634.70 L1038.30,634.70 L1039.30,634.70 L1040.30,634.70 L1041.30,634.70 L1042.30,634.70 L1043.30,634.70 L1044.30,634.70 L1045.30,634.70 L1046.30,634.70 L1047.30,634.70 L1048.30,634.70 L1049.30,634.70 L1050.30,634.70 L1051.30,634.70 L1052.30,634.70 L1053.30,634.70 L1054.30,634.70 L1055.30,634.70 L1056.30,634.70 L1057.30,634.70 L1058.30,634.70 L1059.30,634.70 L1060.30,634.70 L1061.30,634.70 L1062.30,634.70 L1063.30,634.70 L1064.30,634.70 L1065.30,634.70 L1066.30,634.70 L1067.30,634.70 L1068.30,634.70 L1069.30,634.70 L1070.30,634.70 L1071.30,634.70 L1072.30,634.70 L1073.30,634.70 L1074.30,634.70 L1075.30,634.70 L1076.30,634.70 L1077.30,634.70 L1078.30,634.70 L1079.30,634.70 L1080.30,634.70 L1081.30,634.70 L1082.30,634.70 L1083.30,634.70 L1084.30,634.70 L1085.30,634.70 L1086.30,634.70 L1087.30,634.70 L1088.30,634.70 L1089.30,634.70 L1090.30,634.70 L1091.30,634.70 L1092.30,634.70 L1093.30,634.70 L1094.30,634.70 L1095.30,634.70 L1096.30,634.70 L1097.30,634.70 L1098.30,634.70 L1099.30,634.70 L1100.30,634.70 L1101.30,634.70 L1102.30,634.70 L1103.30,634.70 L1104.30,634.70 L1105.30,634.70 L1106.30,634.70 L1107.30,634.70 L1108.30,634.70 L1109.30,634.70 L1110.30,634.70 L1111.30,634.70 L1112.30,634.70 L1113.30,634.70 L1114.30,634.70 L1115.30,634.70 L1116.30,634.70 L1117.30,634.70 L1118.30,634.70 L1119.30,634.70 L1120.30,634.70 L1121.30,634.70 L1122.30,634.70 L1123.30,634.70 L1124.30,634.70 L1125.30,634.70 L1126.30,634.70 L1127.30,634.70 L1128.30,634.70 L1129.30,634.70 L1130.30,634.70 L1131.30,634.70 L1132.30,634.70 L1133.30,634.70 L1134.30,634.70 L1135.30,634.70 L1136.30,634.70 L1137.30,634.70 L1138.30,634.70 L1139.30,634.70 L1140.30,634.70 L1141.30,634.70 L1142.30,634.70 L1143.30,634.70 L1144.30,634.70 L1145.30,634.70 L1146.30,634.70 L1147.30,634.70 L1148.30,634.70 L1149.30,634.70 L1150.30,634.70 L1151.30,634.70 L1152.30,634.70 L1153.30,634.70 L1154.30,634.70 L1155.30,634.70 L1156.30,634.70 L1157.30,634.70 L1158.30,634.70 L1159.30,634.70 L1160.30,634.70 L1161.30,634.70 L1162.30,634.70 L1163.30,634.70 L1164.30,634.70 L1165.30,634.70 L1166.30,634.70 L1167.30,634.70 L1168.30,634.70 L1169.30,634.70 L1170.30,634.70 L1171.30,634.70 L1172.30,634.70 L1173.30,634.70 L1174.30,634.70 L1175.30,634.70 L1176.30,634.70 L1177.30,634.70 L1178.30,634.70 L1179.30,634.70 L1180.30,634.70 L1181.30,634.70 L1182.30,634.70 L1183.30,634.70 L1184.30,634.70 L1185.30,634.70 L1186.30,634.70 L1187.30,634.70 L1188.30,634.70 L1189.30,634.70 L1190.30,634.70 L1191.30,634.70 L1192.30,634.70 L1193.30,634.70 L1194.30,634.70 L1195.30,634.70 L1196.30,634.70 L1197.30,634.70 L1198.30,634.70 L1199.30,634.70 L1200.30,634.70 L1201.30,634.70 L1202.30,634.70 L1203.30,634.70 L1204.30,634.70 L1205.30,634.70 L1206.30,634.70 L1207.30,634.70 L1208.30,634.70 L1209.30,634.70 L1210.30,634.70 L1211.30,634.70 L1212.30,634.70 L1213.30,634.70 L1214.30,634.70 L1215.30,634.70 L1216.30,634.70 L1217.30,634.70 L1218.30,634.70 L1219.30,634.70 L1219.30,697.4 L386.30,697.4 Z" fill="url(#gav)" stroke="none"/><path d="M386.30,598.40 L390.30,598.40 L394.30,598.40 L398.30,598.40 L402.30,598.40 L406.30,598.40 L410.30,598.40 L414.30,598.40 L418.30,598.40 L422.30,598.40 L426.30,598.40 L430.30,598.40 L434.30,598.40 L438.30,598.40 L442.30,598.40 L446.30,598.40 L450.30,598.40 L454.30,598.40 L458.30,598.40 L462.30,598.40 L466.30,598.40 L470.30,598.40 L474.30,598.40 L478.30,598.40 L482.30,598.40 L486.30,598.40 L490.30,598.40 L494.30,598.40 L498.30,598.40 L502.30,598.40 L506.30,598.40 L510.30,598.40 L514.30,598.40 L518.30,598.40 L522.30,598.40 L526.30,598.40 L530.30,598.40 L534.30,598.40 L538.30,598.40 L542.30,598.40 L546.30,598.40 L550.30,598.40 L554.30,598.40 L558.30,598.40 L562.30,598.40 L566.30,598.40 L570.30,598.40 L574.30,598.40 L578.30,598.40 L582.30,598.40 L586.30,598.40 L590.30,598.40 L594.30,598.40 L598.30,598.40 L602.30,598.40 L606.30,598.40 L610.30,598.40 L614.30,598.40 L618.30,598.40 L622.30,598.40 L626.30,598.40 L630.30,598.40 L634.30,598.40 L638.30,598.40 L642.30,598.40 L646.30,598.40 L650.30,598.40 L654.30,598.40 L658.30,598.40 L662.30,598.40 L666.30,598.40 L670.30,598.40 L674.30,598.40 L678.30,598.40 L682.30,598.40 L686.30,598.40 L690.30,598.40 L694.30,598.40 L698.30,598.40 L702.30,598.40 L706.30,598.40 L710.30,598.40 L714.30,598.40 L718.30,598.40 L722.30,598.40 L726.30,598.40 L730.30,598.40 L734.30,598.40 L738.30,598.40 L742.30,598.40 L746.30,598.40 L750.30,598.40 L754.30,598.40 L758.30,598.40 L762.30,598.40 L766.30,598.40 L770.30,598.40 L774.30,598.40 L778.30,598.40 L782.30,598.40 L786.30,598.40 L790.30,598.40 L794.30,598.40 L798.30,598.40 L802.30,598.40 L806.30,598.40 L810.30,598.40 L814.30,598.40 L818.30,598.40 L822.30,598.40 L826.30,598.40 L830.30,598.40 L834.30,598.40 L838.30,598.40 L842.30,598.40 L846.30,598.40 L850.30,598.40 L854.30,598.40 L858.30,598.40 L862.30,598.40 L866.30,598.40 L870.30,598.40 L874.30,598.40 L878.30,598.40 L882.30,598.40 L886.30,598.40 L890.30,598.40 L894.30,598.40 L898.30,598.40 L902.30,598.40 L906.30,598.40 L910.30,598.40 L914.30,598.40 L918.30,598.40 L922.30,598.40 L926.30,598.40 L930.30,598.40 L934.30,598.40 L938.30,598.40 L942.30,598.40 L946.30,598.40 L950.30,598.40 L954.30,598.40 L958.30,598.40 L962.30,598.40 L966.30,598.40 L970.30,598.40 L974.30,598.40 L978.30,598.40 L982.30,598.40 L986.30,598.40 L990.30,598.40 L994.30,598.40 L998.30,598.40 L1002.30,598.40 L1006.30,598.40 L1010.30,598.40 L1014.30,598.40 L1018.30,598.40 L1022.30,598.40 L1026.30,598.40 L1030.30,598.40 L1034.30,598.40 L1038.30,598.40 L1042.30,598.40 L1046.30,598.40 L1050.30,598.40 L1054.30,598.40 L1058.30,598.40 L1062.30,598.40 L1066.30,598.40 L1070.30,598.40 L1074.30,598.40 L1078.30,598.40 L1082.30,598.40 L1086.30,598.40 L1090.30,598.40 L1094.30,598.40 L1098.30,598.40 L1102.30,598.40 L1106.30,598.40 L1110.30,598.40 L1114.30,598.40 L1118.30,598.40 L1122.30,598.40 L1126.30,598.40 L1130.30,598.40 L1134.30,598.40 L1138.30,598.40 L1142.30,598.40 L1146.30,598.40 L1150.30,598.40 L1154.30,598.40 L1158.30,598.40 L1162.30,598.40 L1166.30,598.40 L1170.30,598.40 L1174.30,598.40 L1178.30,598.40 L1182.30,598.40 L1186.30,598.40 L1190.30,598.40 L1194.30,598.40 L1198.30,598.40 L1202.30,598.40 L1206.30,598.40 L1210.30,598.40 L1214.30,598.40 L1218.30,598.40" fill="none" stroke="#5794F2" stroke-width="1" stroke-linejoin="round" /><path d="M386.30,637.20 L387.30,637.20 L388.30,637.20 L389.30,637.20 L390.30,637.20 L391.30,637.20 L392.30,637.20 L393.30,637.20 L394.30,637.20 L395.30,637.20 L396.30,637.20 L397.30,637.20 L398.30,637.20 L399.30,637.20 L400.30,637.20 L401.30,637.20 L402.30,637.20 L403.30,637.20 L404.30,637.20 L405.30,637.20 L406.30,637.20 L407.30,637.20 L408.30,637.20 L409.30,637.20 L410.30,637.20 L411.30,637.20 L412.30,637.20 L413.30,637.20 L414.30,637.20 L415.30,637.20 L416.30,637.20 L417.30,637.20 L418.30,637.20 L419.30,637.20 L420.30,637.20 L421.30,637.20 L422.30,637.20 L423.30,637.20 L424.30,637.20 L425.30,637.20 L426.30,637.20 L427.30,637.20 L428.30,637.20 L429.30,637.20 L430.30,637.20 L431.30,637.20 L432.30,637.20 L433.30,637.20 L434.30,637.20 L435.30,637.20 L436.30,637.20 L437.30,637.20 L438.30,637.20 L439.30,637.20 L440.30,637.20 L441.30,637.20 L442.30,637.20 L443.30,637.20 L444.30,637.20 L445.30,637.20 L446.30,637.20 L447.30,637.20 L448.30,637.20 L449.30,637.20 L450.30,637.20 L451.30,637.20 L452.30,637.20 L453.30,637.20 L454.30,637.20 L455.30,637.20 L456.30,637.20 L457.30,637.20 L458.30,637.20 L459.30,637.20 L460.30,637.20 L461.30,637.20 L462.30,637.20 L463.30,637.20 L464.30,637.20 L465.30,637.20 L466.30,637.20 L467.30,637.20 L468.30,637.20 L469.30,637.20 L470.30,637.20 L471.30,637.20 L472.30,637.20 L473.30,637.20 L474.30,637.20 L475.30,637.20 L476.30,637.20 L477.30,637.20 L478.30,637.20 L479.30,637.20 L480.30,637.20 L481.30,637.20 L482.30,637.20 L483.30,637.20 L484.30,637.20 L485.30,637.20 L486.30,637.20 L487.30,637.20 L488.30,637.20 L489.30,637.20 L490.30,637.20 L491.30,637.20 L492.30,637.20 L493.30,637.20 L494.30,637.20 L495.30,637.20 L496.30,637.20 L497.30,637.20 L498.30,637.20 L499.30,637.20 L500.30,637.20 L501.30,637.20 L502.30,637.20 L503.30,637.20 L504.30,637.20 L505.30,637.20 L506.30,637.20 L507.30,637.20 L508.30,637.20 L509.30,637.20 L510.30,637.20 L511.30,637.20 L512.30,637.20 L513.30,637.20 L514.30,637.20 L515.30,637.20 L516.30,637.20 L517.30,637.20 L518.30,637.20 L519.30,637.20 L520.30,637.20 L521.30,637.20 L522.30,637.20 L523.30,637.20 L524.30,637.20 L525.30,637.20 L526.30,637.20 L527.30,637.20 L528.30,637.20 L529.30,637.20 L530.30,637.20 L531.30,637.20 L532.30,637.20 L533.30,637.20 L534.30,637.20 L535.30,637.20 L536.30,637.20 L537.30,637.20 L538.30,637.20 L539.30,637.20 L540.30,637.20 L541.30,637.20 L542.30,637.20 L543.30,637.20 L544.30,637.20 L545.30,637.20 L546.30,637.20 L547.30,637.20 L548.30,637.20 L549.30,637.20 L550.30,637.20 L551.30,637.20 L552.30,637.20 L553.30,637.20 L554.30,637.20 L555.30,637.20 L556.30,637.20 L557.30,637.20 L558.30,637.20 L559.30,637.20 L560.30,637.20 L561.30,637.20 L562.30,637.20 L563.30,637.20 L564.30,637.20 L565.30,637.20 L566.30,637.20 L567.30,637.20 L568.30,637.20 L569.30,637.20 L570.30,637.20 L571.30,637.20 L572.30,637.20 L573.30,637.20 L574.30,637.20 L575.30,637.20 L576.30,637.20 L577.30,637.20 L578.30,637.20 L579.30,637.20 L580.30,637.20 L581.30,637.20 L582.30,637.20 L583.30,637.20 L584.30,637.20 L585.30,637.20 L586.30,637.20 L587.30,637.20 L588.30,637.20 L589.30,637.20 L590.30,637.20 L591.30,637.20 L592.30,637.20 L593.30,637.20 L594.30,637.20 L595.30,637.20 L596.30,637.07 L597.30,636.65 L598.30,636.22 L599.30,635.80 L600.30,635.47 L601.30,635.37 L602.30,635.27 L603.30,635.27 L604.30,635.49 L605.30,635.71 L606.30,635.93 L607.30,636.15 L608.30,636.28 L609.30,636.24 L610.30,636.18 L611.30,636.13 L612.30,636.09 L613.30,636.03 L614.30,636.01 L615.30,636.04 L616.30,636.08 L617.30,636.11 L618.30,636.14 L619.30,636.18 L620.30,636.32 L621.30,636.70 L622.30,637.08 L623.30,637.47 L624.30,637.85 L625.30,638.23 L626.30,638.64 L627.30,639.12 L628.30,639.59 L629.30,640.07 L630.30,639.85 L631.30,638.04 L632.30,636.22 L633.30,634.40 L634.30,634.97 L635.30,635.54 L636.30,636.10 L637.30,636.50 L638.30,636.52 L639.30,636.53 L640.30,636.54 L641.30,636.56 L642.30,636.57 L643.30,636.58 L644.30,636.60 L645.30,636.61 L646.30,636.62 L647.30,636.63 L648.30,636.65 L649.30,636.66 L650.30,636.67 L651.30,636.69 L652.30,636.70 L653.30,636.71 L654.30,636.73 L655.30,636.74 L656.30,636.75 L657.30,636.76 L658.30,636.78 L659.30,636.79 L660.30,636.80 L661.30,636.80 L662.30,636.80 L663.30,636.80 L664.30,636.80 L665.30,636.80 L666.30,636.80 L667.30,636.80 L668.30,636.80 L669.30,636.80 L670.30,636.80 L671.30,636.80 L672.30,636.80 L673.30,636.80 L674.30,636.80 L675.30,636.80 L676.30,636.80 L677.30,636.80 L678.30,636.80 L679.30,636.80 L680.30,636.80 L681.30,636.80 L682.30,636.80 L683.30,636.80 L684.30,636.80 L685.30,636.80 L686.30,636.80 L687.30,636.80 L688.30,636.80 L689.30,636.80 L690.30,636.80 L691.30,636.80 L692.30,636.80 L693.30,636.80 L694.30,636.80 L695.30,636.80 L696.30,636.80 L697.30,636.80 L698.30,636.80 L699.30,636.80 L700.30,636.80 L701.30,636.80 L702.30,636.80 L703.30,636.80 L704.30,636.80 L705.30,636.80 L706.30,636.80 L707.30,636.80 L708.30,636.80 L709.30,636.80 L710.30,636.80 L711.30,636.80 L712.30,636.80 L713.30,636.80 L714.30,636.80 L715.30,636.80 L716.30,636.80 L717.30,636.80 L718.30,636.80 L719.30,636.80 L720.30,636.80 L721.30,636.80 L722.30,636.80 L723.30,636.80 L724.30,636.80 L725.30,636.80 L726.30,636.80 L727.30,636.80 L728.30,636.80 L729.30,636.80 L730.30,636.80 L731.30,636.80 L732.30,636.80 L733.30,636.80 L734.30,636.80 L735.30,636.80 L736.30,636.79 L737.30,636.76 L738.30,636.65 L739.30,636.40 L740.30,635.98 L741.30,635.60 L742.30,635.52 L743.30,635.82 L744.30,636.25 L745.30,636.58 L746.30,636.75 L747.30,636.80 L748.30,636.82 L749.30,636.82 L750.30,636.82 L751.30,636.83 L752.30,636.83 L753.30,636.83 L754.30,636.83 L755.30,636.84 L756.30,636.84 L757.30,636.84 L758.30,636.84 L759.30,636.85 L760.30,636.85 L761.30,636.85 L762.30,636.85 L763.30,636.85 L764.30,636.86 L765.30,636.86 L766.30,636.86 L767.30,636.86 L768.30,636.87 L769.30,636.87 L770.30,636.87 L771.30,636.87 L772.30,636.88 L773.30,636.88 L774.30,636.88 L775.30,636.88 L776.30,636.88 L777.30,636.89 L778.30,636.89 L779.30,636.89 L780.30,636.89 L781.30,636.90 L782.30,636.90 L783.30,636.90 L784.30,636.90 L785.30,636.91 L786.30,636.91 L787.30,636.91 L788.30,636.91 L789.30,636.92 L790.30,636.92 L791.30,636.92 L792.30,636.92 L793.30,636.92 L794.30,636.93 L795.30,636.93 L796.30,636.93 L797.30,636.93 L798.30,636.94 L799.30,636.94 L800.30,636.94 L801.30,636.94 L802.30,636.95 L803.30,636.95 L804.30,636.95 L805.30,636.95 L806.30,636.96 L807.30,636.96 L808.30,636.96 L809.30,636.96 L810.30,636.96 L811.30,636.97 L812.30,636.97 L813.30,636.97 L814.30,636.97 L815.30,636.98 L816.30,636.98 L817.30,636.98 L818.30,636.98 L819.30,636.99 L820.30,636.99 L821.30,636.99 L822.30,636.99 L823.30,636.99 L824.30,637.00 L825.30,637.00 L826.30,637.00 L827.30,637.00 L828.30,637.01 L829.30,637.01 L830.30,637.01 L831.30,637.01 L832.30,637.02 L833.30,637.02 L834.30,637.02 L835.30,637.02 L836.30,637.03 L837.30,637.03 L838.30,637.03 L839.30,637.03 L840.30,637.03 L841.30,637.04 L842.30,637.04 L843.30,637.04 L844.30,637.04 L845.30,637.05 L846.30,637.05 L847.30,637.05 L848.30,637.05 L849.30,637.06 L850.30,637.06 L851.30,637.06 L852.30,637.06 L853.30,637.07 L854.30,637.07 L855.30,637.07 L856.30,637.07 L857.30,637.07 L858.30,637.08 L859.30,637.08 L860.30,637.08 L861.30,637.08 L862.30,637.09 L863.30,637.09 L864.30,637.09 L865.30,637.09 L866.30,637.09 L867.30,637.06 L868.30,636.95 L869.30,636.70 L870.30,636.29 L871.30,635.91 L872.30,635.83 L873.30,636.12 L874.30,636.56 L875.30,636.89 L876.30,637.05 L877.30,637.11 L878.30,637.12 L879.30,637.13 L880.30,637.13 L881.30,637.13 L882.30,637.13 L883.30,637.14 L884.30,637.14 L885.30,637.14 L886.30,637.14 L887.30,637.14 L888.30,637.15 L889.30,637.15 L890.30,637.15 L891.30,637.15 L892.30,637.16 L893.30,637.16 L894.30,637.16 L895.30,637.16 L896.30,637.17 L897.30,637.17 L898.30,637.17 L899.30,637.17 L900.30,637.17 L901.30,637.18 L902.30,637.18 L903.30,637.18 L904.30,637.18 L905.30,637.19 L906.30,637.19 L907.30,637.19 L908.30,637.19 L909.30,637.20 L910.30,637.20 L911.30,637.05 L912.30,636.55 L913.30,636.05 L914.30,635.55 L915.30,635.05 L916.30,634.70 L917.30,634.70 L918.30,634.70 L919.30,634.70 L920.30,634.70 L921.30,634.70 L922.30,634.70 L923.30,634.70 L924.30,634.70 L925.30,634.70 L926.30,634.70 L927.30,634.70 L928.30,634.70 L929.30,634.70 L930.30,634.70 L931.30,634.70 L932.30,634.70 L933.30,634.70 L934.30,634.70 L935.30,634.70 L936.30,634.70 L937.30,634.70 L938.30,634.70 L939.30,634.70 L940.30,634.70 L941.30,634.70 L942.30,634.70 L943.30,634.70 L944.30,634.70 L945.30,634.70 L946.30,634.70 L947.30,634.70 L948.30,634.70 L949.30,634.70 L950.30,634.70 L951.30,634.70 L952.30,634.70 L953.30,634.70 L954.30,634.70 L955.30,634.70 L956.30,634.70 L957.30,634.70 L958.30,634.70 L959.30,634.70 L960.30,634.70 L961.30,634.70 L962.30,634.70 L963.30,634.70 L964.30,634.70 L965.30,634.70 L966.30,634.70 L967.30,634.70 L968.30,634.70 L969.30,634.70 L970.30,634.70 L971.30,634.70 L972.30,634.70 L973.30,634.70 L974.30,634.70 L975.30,634.70 L976.30,634.70 L977.30,634.70 L978.30,634.70 L979.30,634.70 L980.30,634.70 L981.30,634.70 L982.30,634.70 L983.30,634.70 L984.30,634.70 L985.30,634.70 L986.30,634.70 L987.30,634.70 L988.30,634.70 L989.30,634.70 L990.30,634.70 L991.30,634.70 L992.30,634.70 L993.30,634.70 L994.30,634.70 L995.30,634.70 L996.30,634.70 L997.30,634.70 L998.30,634.70 L999.30,634.70 L1000.30,634.70 L1001.30,634.70 L1002.30,634.70 L1003.30,634.70 L1004.30,634.70 L1005.30,634.70 L1006.30,634.70 L1007.30,634.70 L1008.30,634.70 L1009.30,634.70 L1010.30,634.70 L1011.30,634.70 L1012.30,634.70 L1013.30,634.70 L1014.30,634.70 L1015.30,634.70 L1016.30,634.70 L1017.30,634.70 L1018.30,634.70 L1019.30,634.70 L1020.30,634.70 L1021.30,634.70 L1022.30,634.70 L1023.30,634.70 L1024.30,634.70 L1025.30,634.70 L1026.30,634.70 L1027.30,634.70 L1028.30,634.70 L1029.30,634.70 L1030.30,634.70 L1031.30,634.70 L1032.30,634.70 L1033.30,634.70 L1034.30,634.70 L1035.30,634.70 L1036.30,634.70 L1037.30,634.70 L1038.30,634.70 L1039.30,634.70 L1040.30,634.70 L1041.30,634.70 L1042.30,634.70 L1043.30,634.70 L1044.30,634.70 L1045.30,634.70 L1046.30,634.70 L1047.30,634.70 L1048.30,634.70 L1049.30,634.70 L1050.30,634.70 L1051.30,634.70 L1052.30,634.70 L1053.30,634.70 L1054.30,634.70 L1055.30,634.70 L1056.30,634.70 L1057.30,634.70 L1058.30,634.70 L1059.30,634.70 L1060.30,634.70 L1061.30,634.70 L1062.30,634.70 L1063.30,634.70 L1064.30,634.70 L1065.30,634.70 L1066.30,634.70 L1067.30,634.70 L1068.30,634.70 L1069.30,634.70 L1070.30,634.70 L1071.30,634.70 L1072.30,634.70 L1073.30,634.70 L1074.30,634.70 L1075.30,634.70 L1076.30,634.70 L1077.30,634.70 L1078.30,634.70 L1079.30,634.70 L1080.30,634.70 L1081.30,634.70 L1082.30,634.70 L1083.30,634.70 L1084.30,634.70 L1085.30,634.70 L1086.30,634.70 L1087.30,634.70 L1088.30,634.70 L1089.30,634.70 L1090.30,634.70 L1091.30,634.70 L1092.30,634.70 L1093.30,634.70 L1094.30,634.70 L1095.30,634.70 L1096.30,634.70 L1097.30,634.70 L1098.30,634.70 L1099.30,634.70 L1100.30,634.70 L1101.30,634.70 L1102.30,634.70 L1103.30,634.70 L1104.30,634.70 L1105.30,634.70 L1106.30,634.70 L1107.30,634.70 L1108.30,634.70 L1109.30,634.70 L1110.30,634.70 L1111.30,634.70 L1112.30,634.70 L1113.30,634.70 L1114.30,634.70 L1115.30,634.70 L1116.30,634.70 L1117.30,634.70 L1118.30,634.70 L1119.30,634.70 L1120.30,634.70 L1121.30,634.70 L1122.30,634.70 L1123.30,634.70 L1124.30,634.70 L1125.30,634.70 L1126.30,634.70 L1127.30,634.70 L1128.30,634.70 L1129.30,634.70 L1130.30,634.70 L1131.30,634.70 L1132.30,634.70 L1133.30,634.70 L1134.30,634.70 L1135.30,634.70 L1136.30,634.70 L1137.30,634.70 L1138.30,634.70 L1139.30,634.70 L1140.30,634.70 L1141.30,634.70 L1142.30,634.70 L1143.30,634.70 L1144.30,634.70 L1145.30,634.70 L1146.30,634.70 L1147.30,634.70 L1148.30,634.70 L1149.30,634.70 L1150.30,634.70 L1151.30,634.70 L1152.30,634.70 L1153.30,634.70 L1154.30,634.70 L1155.30,634.70 L1156.30,634.70 L1157.30,634.70 L1158.30,634.70 L1159.30,634.70 L1160.30,634.70 L1161.30,634.70 L1162.30,634.70 L1163.30,634.70 L1164.30,634.70 L1165.30,634.70 L1166.30,634.70 L1167.30,634.70 L1168.30,634.70 L1169.30,634.70 L1170.30,634.70 L1171.30,634.70 L1172.30,634.70 L1173.30,634.70 L1174.30,634.70 L1175.30,634.70 L1176.30,634.70 L1177.30,634.70 L1178.30,634.70 L1179.30,634.70 L1180.30,634.70 L1181.30,634.70 L1182.30,634.70 L1183.30,634.70 L1184.30,634.70 L1185.30,634.70 L1186.30,634.70 L1187.30,634.70 L1188.30,634.70 L1189.30,634.70 L1190.30,634.70 L1191.30,634.70 L1192.30,634.70 L1193.30,634.70 L1194.30,634.70 L1195.30,634.70 L1196.30,634.70 L1197.30,634.70 L1198.30,634.70 L1199.30,634.70 L1200.30,634.70 L1201.30,634.70 L1202.30,634.70 L1203.30,634.70 L1204.30,634.70 L1205.30,634.70 L1206.30,634.70 L1207.30,634.70 L1208.30,634.70 L1209.30,634.70 L1210.30,634.70 L1211.30,634.70 L1212.30,634.70 L1213.30,634.70 L1214.30,634.70 L1215.30,634.70 L1216.30,634.70 L1217.30,634.70 L1218.30,634.70 L1219.30,634.70" fill="none" stroke="#F2495C" stroke-width="1" stroke-linejoin="round" /><path d="M386.30,692.40 L390.30,692.40 L394.30,692.40 L398.30,692.40 L402.30,692.40 L406.30,692.40 L410.30,692.40 L414.30,692.40 L418.30,692.40 L422.30,692.40 L426.30,692.40 L430.30,692.40 L434.30,692.40 L438.30,692.40 L442.30,692.40 L446.30,692.40 L450.30,692.40 L454.30,692.40 L458.30,692.40 L462.30,692.40 L466.30,692.40 L470.30,692.40 L474.30,692.40 L478.30,692.40 L482.30,692.40 L486.30,692.40 L490.30,692.40 L494.30,692.40 L498.30,692.40 L502.30,692.40 L506.30,692.40 L510.30,692.40 L514.30,692.40 L518.30,692.40 L522.30,692.40 L526.30,692.40 L530.30,692.40 L534.30,692.40 L538.30,692.40 L542.30,692.40 L546.30,692.40 L550.30,692.40 L554.30,692.40 L558.30,692.40 L562.30,692.40 L566.30,692.40 L570.30,692.40 L574.30,692.40 L578.30,692.40 L582.30,692.40 L586.30,692.40 L590.30,692.40 L594.30,692.40 L598.30,692.40 L602.30,692.40 L606.30,692.40 L610.30,692.40 L614.30,692.40 L618.30,692.40 L622.30,692.40 L626.30,692.40 L630.30,692.40 L634.30,692.40 L638.30,692.40 L642.30,692.40 L646.30,692.40 L650.30,692.40 L654.30,692.40 L658.30,692.40 L662.30,692.40 L666.30,692.40 L670.30,692.40 L674.30,692.40 L678.30,692.40 L682.30,692.40 L686.30,692.40 L690.30,692.40 L694.30,692.40 L698.30,692.40 L702.30,692.40 L706.30,692.40 L710.30,692.40 L714.30,692.40 L718.30,692.40 L722.30,692.40 L726.30,692.40 L730.30,692.40 L734.30,692.40 L738.30,692.40 L742.30,692.40 L746.30,692.40 L750.30,692.40 L754.30,692.40 L758.30,692.40 L762.30,692.40 L766.30,692.40 L770.30,692.40 L774.30,692.40 L778.30,692.40 L782.30,692.40 L786.30,692.40 L790.30,692.40 L794.30,692.40 L798.30,692.40 L802.30,692.40 L806.30,692.40 L810.30,692.40 L814.30,692.40 L818.30,692.40 L822.30,692.40 L826.30,692.40 L830.30,692.40 L834.30,692.40 L838.30,692.40 L842.30,692.40 L846.30,692.40 L850.30,692.40 L854.30,692.40 L858.30,692.40 L862.30,692.40 L866.30,692.40 L870.30,692.40 L874.30,692.40 L878.30,692.40 L882.30,692.40 L886.30,692.40 L890.30,692.40 L894.30,692.40 L898.30,692.40 L902.30,692.40 L906.30,692.40 L910.30,692.40 L914.30,692.40 L918.30,692.40 L922.30,692.40 L926.30,692.40 L930.30,692.40 L934.30,692.40 L938.30,692.40 L942.30,692.40 L946.30,692.40 L950.30,692.40 L954.30,692.40 L958.30,692.40 L962.30,692.40 L966.30,692.40 L970.30,692.40 L974.30,692.40 L978.30,692.40 L982.30,692.40 L986.30,692.40 L990.30,692.40 L994.30,692.40 L998.30,692.40 L1002.30,692.40 L1006.30,692.40 L1010.30,692.40 L1014.30,692.40 L1018.30,692.40 L1022.30,692.40 L1026.30,692.40 L1030.30,692.40 L1034.30,692.40 L1038.30,692.40 L1042.30,692.40 L1046.30,692.40 L1050.30,692.40 L1054.30,692.40 L1058.30,692.40 L1062.30,692.40 L1066.30,692.40 L1070.30,692.40 L1074.30,692.40 L1078.30,692.40 L1082.30,692.40 L1086.30,692.40 L1090.30,692.40 L1094.30,692.40 L1098.30,692.40 L1102.30,692.40 L1106.30,692.40 L1110.30,692.40 L1114.30,692.40 L1118.30,692.40 L1122.30,692.40 L1126.30,692.40 L1130.30,692.40 L1134.30,692.40 L1138.30,692.40 L1142.30,692.40 L1146.30,692.40 L1150.30,692.40 L1154.30,692.40 L1158.30,692.40 L1162.30,692.40 L1166.30,692.40 L1170.30,692.40 L1174.30,692.40 L1178.30,692.40 L1182.30,692.40 L1186.30,692.40 L1190.30,692.40 L1194.30,692.40 L1198.30,692.40 L1202.30,692.40 L1206.30,692.40 L1210.30,692.40 L1214.30,692.40 L1218.30,692.40" fill="none" stroke="#FADE2A" stroke-width="1" stroke-linejoin="round" /><path d="M386.30,674.90 L387.10,674.90 L387.90,674.90 L388.70,674.90 L389.50,674.90 L390.30,674.90 L391.10,674.90 L391.90,674.90 L392.70,674.90 L393.50,674.90 L394.30,674.90 L395.10,674.90 L395.90,674.90 L396.70,674.90 L397.50,674.90 L398.30,674.90 L399.10,674.90 L399.90,674.90 L400.70,674.90 L401.50,674.90 L402.30,674.90 L403.10,674.90 L403.90,674.90 L404.70,674.90 L405.50,674.90 L406.30,674.90 L407.10,674.90 L407.90,674.90 L408.70,674.90 L409.50,674.90 L410.30,674.90 L411.10,674.90 L411.90,674.90 L412.70,674.90 L413.50,674.91 L414.30,674.92 L415.10,674.96 L415.90,675.04 L416.70,675.17 L417.50,675.35 L418.30,675.55 L419.10,675.72 L419.90,675.80 L420.70,675.75 L421.50,675.60 L422.30,675.40 L423.10,675.21 L423.90,675.07 L424.70,674.98 L425.50,674.93 L426.30,674.91 L427.10,674.90 L427.90,674.90 L428.70,674.90 L429.50,674.90 L430.30,674.90 L431.10,674.90 L431.90,674.90 L432.70,674.90 L433.50,674.90 L434.30,674.90 L435.10,674.90 L435.90,674.90 L436.70,674.90 L437.50,674.90 L438.30,674.91 L439.10,674.92 L439.90,674.95 L440.70,675.02 L441.50,675.13 L442.30,675.30 L443.10,675.50 L443.90,675.69 L444.70,675.79 L445.50,675.78 L446.30,675.65 L447.10,675.45 L447.90,675.25 L448.70,675.10 L449.50,674.99 L450.30,674.94 L451.10,674.91 L451.90,674.90 L452.70,674.90 L453.50,674.90 L454.30,674.90 L455.10,674.90 L455.90,674.90 L456.70,674.90 L457.50,674.90 L458.30,674.90 L459.10,674.90 L459.90,674.90 L460.70,674.90 L461.50,674.90 L462.30,674.90 L463.10,674.90 L463.90,674.91 L464.70,674.94 L465.50,674.99 L466.30,675.10 L467.10,675.25 L467.90,675.45 L468.70,675.65 L469.50,675.78 L470.30,675.79 L471.10,675.69 L471.90,675.50 L472.70,675.30 L473.50,675.13 L474.30,675.02 L475.10,674.95 L475.90,674.92 L476.70,674.91 L477.50,674.90 L478.30,674.90 L479.10,674.90 L479.90,674.90 L480.70,674.90 L481.50,674.90 L482.30,674.90 L483.10,674.90 L483.90,674.90 L484.70,674.90 L485.50,674.91 L486.30,674.92 L487.10,674.96 L487.90,675.04 L488.70,675.17 L489.50,675.35 L490.30,675.55 L491.10,675.72 L491.90,675.80 L492.70,675.75 L493.50,675.60 L494.30,675.40 L495.10,675.21 L495.90,675.07 L496.70,674.98 L497.50,674.93 L498.30,674.91 L499.10,674.90 L499.90,674.90 L500.70,674.90 L501.50,674.90 L502.30,674.90 L503.10,674.90 L503.90,674.90 L504.70,674.90 L505.50,674.90 L506.30,674.90 L507.10,674.90 L507.90,674.90 L508.70,674.90 L509.50,674.90 L510.30,674.90 L511.10,674.90 L511.90,674.90 L512.70,674.90 L513.50,674.91 L514.30,674.92 L515.10,674.96 L515.90,675.04 L516.70,675.17 L517.50,675.35 L518.30,675.55 L519.10,675.72 L519.90,675.80 L520.70,675.75 L521.50,675.60 L522.30,675.40 L523.10,675.21 L523.90,675.07 L524.70,674.98 L525.50,674.93 L526.30,674.91 L527.10,674.90 L527.90,674.90 L528.70,674.90 L529.50,674.90 L530.30,674.90 L531.10,674.90 L531.90,674.90 L532.70,674.90 L533.50,674.91 L534.30,674.92 L535.10,674.96 L535.90,675.04 L536.70,675.17 L537.50,675.35 L538.30,675.55 L539.10,675.72 L539.90,675.80 L540.70,675.75 L541.50,675.60 L542.30,675.40 L543.10,675.21 L543.90,675.07 L544.70,674.98 L545.50,674.93 L546.30,674.91 L547.10,674.90 L547.90,674.90 L548.70,674.90 L549.50,674.90 L550.30,674.90 L551.10,674.90 L551.90,674.90 L552.70,674.90 L553.50,674.90 L554.30,674.90 L555.10,674.90 L555.90,674.90 L556.70,674.90 L557.50,674.90 L558.30,674.90 L559.10,674.90 L559.90,674.90 L560.70,674.90 L561.50,674.91 L562.30,674.92 L563.10,674.96 L563.90,675.04 L564.70,675.17 L565.50,675.35 L566.30,675.55 L567.10,675.72 L567.90,675.80 L568.70,675.75 L569.50,675.60 L570.30,675.40 L571.10,675.21 L571.90,675.07 L572.70,674.98 L573.50,674.93 L574.30,674.91 L575.10,674.90 L575.90,674.90 L576.70,674.90 L577.50,674.90 L578.30,674.90 L579.10,674.90 L579.90,674.90 L580.70,674.90 L581.50,674.90 L582.30,674.90 L583.10,674.90 L583.90,674.90 L584.70,674.90 L585.50,674.90 L586.30,674.90 L587.10,674.90 L587.90,674.90 L588.70,674.90 L589.50,674.90 L590.30,674.90 L591.10,674.90 L591.90,674.90 L592.70,674.90 L593.50,674.90 L594.30,674.90 L595.10,674.90 L595.90,674.90 L596.70,674.90 L597.50,674.90 L598.30,674.90 L599.10,674.90 L599.90,674.90 L600.70,674.68 L601.50,674.43 L602.30,674.17 L603.10,673.92 L603.90,673.67 L604.70,673.41 L605.50,673.16 L606.30,673.19 L607.10,673.69 L607.90,674.19 L608.70,674.69 L609.50,675.19 L610.30,675.32 L611.10,674.84 L611.90,674.36 L612.70,673.88 L613.50,673.40 L614.30,672.92 L615.10,672.52 L615.90,672.68 L616.70,672.84 L617.50,673.00 L618.30,673.16 L619.10,673.32 L619.90,673.48 L620.70,673.29 L621.50,673.05 L622.30,672.81 L623.10,672.57 L623.90,672.33 L624.70,672.09 L625.50,672.67 L626.30,673.73 L627.10,674.80 L627.90,675.87 L628.70,682.02 L629.50,688.90 L630.30,691.56 L631.10,687.19 L631.90,682.73 L632.70,678.20 L633.50,677.32 L634.30,678.62 L635.10,679.93 L635.90,681.24 L636.70,681.40 L637.50,681.40 L638.30,681.40 L639.10,681.40 L639.90,681.40 L640.70,681.40 L641.50,681.40 L642.30,681.40 L643.10,681.40 L643.90,681.40 L644.70,681.40 L645.50,681.40 L646.30,681.40 L647.10,681.40 L647.90,681.40 L648.70,681.40 L649.50,681.40 L650.30,681.40 L651.10,681.40 L651.90,681.40 L652.70,681.40 L653.50,681.40 L654.30,681.40 L655.10,681.40 L655.90,681.40 L656.70,681.40 L657.50,681.40 L658.30,681.40 L659.10,681.40 L659.90,681.40 L660.70,681.40 L661.50,681.40 L662.30,681.40 L663.10,681.40 L663.90,681.40 L664.70,681.40 L665.50,681.40 L666.30,681.40 L667.10,681.40 L667.90,681.40 L668.70,681.40 L669.50,681.40 L670.30,681.40 L671.10,681.40 L671.90,681.40 L672.70,681.40 L673.50,681.40 L674.30,681.40 L675.10,681.40 L675.90,681.40 L676.70,681.40 L677.50,681.40 L678.30,681.40 L679.10,681.40 L679.90,681.40 L680.70,681.40 L681.50,681.40 L682.30,681.40 L683.10,681.40 L683.90,681.40 L684.70,681.40 L685.50,681.40 L686.30,681.40 L687.10,681.40 L687.90,681.40 L688.70,681.41 L689.50,681.43 L690.30,681.48 L691.10,681.57 L691.90,681.71 L692.70,681.90 L693.50,682.10 L694.30,682.25 L695.10,682.30 L695.90,682.22 L696.70,682.05 L697.50,681.85 L698.30,681.67 L699.10,681.54 L699.90,681.46 L700.70,681.42 L701.50,681.41 L702.30,681.40 L703.10,681.40 L703.90,681.40 L704.70,681.40 L705.50,681.40 L706.30,681.40 L707.10,681.40 L707.90,681.40 L708.70,681.41 L709.50,681.43 L710.30,681.48 L711.10,681.57 L711.90,681.71 L712.70,681.90 L713.50,682.10 L714.30,682.25 L715.10,682.30 L715.90,682.22 L716.70,682.05 L717.50,681.85 L718.30,681.67 L719.10,681.54 L719.90,681.46 L720.70,681.42 L721.50,681.41 L722.30,681.40 L723.10,681.40 L723.90,681.40 L724.70,681.40 L725.50,681.40 L726.30,681.40 L727.10,681.40 L727.90,681.40 L728.70,681.41 L729.50,681.43 L730.30,681.48 L731.10,681.57 L731.90,681.71 L732.70,681.90 L733.50,682.10 L734.30,682.25 L735.10,682.30 L735.90,682.22 L736.70,682.05 L737.50,681.85 L738.30,681.67 L739.10,681.54 L739.90,681.46 L740.70,681.42 L741.50,681.41 L742.30,681.40 L743.10,681.40 L743.90,681.40 L744.70,681.40 L745.50,681.40 L746.30,681.40 L747.10,681.40 L747.90,681.40 L748.70,681.40 L749.50,681.40 L750.30,681.40 L751.10,681.40 L751.90,681.40 L752.70,681.40 L753.50,681.40 L754.30,681.40 L755.10,681.40 L755.90,681.40 L756.70,681.40 L757.50,681.40 L758.30,681.40 L759.10,681.40 L759.90,681.40 L760.70,681.40 L761.50,681.40 L762.30,681.40 L763.10,681.40 L763.90,681.40 L764.70,681.40 L765.50,681.40 L766.30,681.40 L767.10,681.40 L767.90,681.40 L768.70,681.40 L769.50,681.40 L770.30,681.40 L771.10,681.40 L771.90,681.40 L772.70,681.40 L773.50,681.40 L774.30,681.40 L775.10,681.40 L775.90,681.40 L776.70,681.40 L777.50,681.40 L778.30,681.40 L779.10,681.40 L779.90,681.40 L780.70,681.40 L781.50,681.39 L782.30,681.39 L783.10,681.38 L783.90,681.38 L784.70,681.38 L785.50,681.37 L786.30,681.37 L787.10,681.36 L787.90,681.36 L788.70,681.36 L789.50,681.35 L790.30,681.35 L791.10,681.34 L791.90,681.34 L792.70,681.34 L793.50,681.34 L794.30,681.35 L795.10,681.39 L795.90,681.46 L796.70,681.58 L797.50,681.76 L798.30,681.96 L799.10,682.13 L799.90,682.20 L800.70,682.15 L801.50,681.99 L802.30,681.79 L803.10,681.59 L803.90,681.45 L804.70,681.35 L805.50,681.30 L806.30,681.28 L807.10,681.27 L807.90,681.26 L808.70,681.26 L809.50,681.25 L810.30,681.25 L811.10,681.24 L811.90,681.24 L812.70,681.24 L813.50,681.23 L814.30,681.23 L815.10,681.22 L815.90,681.22 L816.70,681.22 L817.50,681.21 L818.30,681.21 L819.10,681.20 L819.90,681.20 L820.70,681.20 L821.50,681.20 L822.30,681.21 L823.10,681.25 L823.90,681.32 L824.70,681.44 L825.50,681.62 L826.30,681.82 L827.10,681.99 L827.90,682.06 L828.70,682.01 L829.50,681.85 L830.30,681.65 L831.10,681.45 L831.90,681.31 L832.70,681.21 L833.50,681.16 L834.30,681.14 L835.10,681.13 L835.90,681.12 L836.70,681.12 L837.50,681.11 L838.30,681.11 L839.10,681.12 L839.90,681.15 L840.70,681.21 L841.50,681.32 L842.30,681.49 L843.10,681.69 L843.90,681.87 L844.70,681.97 L845.50,681.95 L846.30,681.81 L847.10,681.62 L847.90,681.41 L848.70,681.25 L849.50,681.15 L850.30,681.09 L851.10,681.06 L851.90,681.05 L852.70,681.04 L853.50,681.03 L854.30,681.03 L855.10,681.02 L855.90,681.02 L856.70,681.02 L857.50,681.01 L858.30,681.01 L859.10,681.00 L859.90,681.00 L860.70,681.01 L861.50,681.01 L862.30,681.02 L863.10,681.02 L863.90,681.03 L864.70,681.04 L865.50,681.04 L866.30,681.05 L867.10,681.06 L867.90,681.06 L868.70,681.07 L869.50,681.07 L870.30,681.08 L871.10,681.09 L871.90,681.09 L872.70,681.10 L873.50,681.11 L874.30,681.11 L875.10,681.12 L875.90,681.12 L876.70,681.13 L877.50,681.14 L878.30,681.14 L879.10,681.15 L879.90,681.16 L880.70,681.16 L881.50,681.17 L882.30,681.17 L883.10,681.18 L883.90,681.19 L884.70,681.19 L885.50,681.20 L886.30,681.21 L887.10,681.21 L887.90,681.22 L888.70,681.23 L889.50,681.23 L890.30,681.24 L891.10,681.24 L891.90,681.25 L892.70,681.26 L893.50,681.26 L894.30,681.27 L895.10,681.28 L895.90,681.28 L896.70,681.29 L897.50,681.29 L898.30,681.30 L899.10,681.31 L899.90,681.31 L900.70,681.32 L901.50,681.33 L902.30,681.33 L903.10,681.34 L903.90,681.34 L904.70,681.35 L905.50,681.36 L906.30,681.36 L907.10,681.37 L907.90,681.38 L908.70,681.38 L909.50,681.39 L910.30,681.39 L911.10,681.38 L911.90,681.24 L912.70,681.09 L913.50,680.95 L914.30,680.81 L915.10,680.66 L915.90,680.52 L916.70,680.50 L917.50,680.50 L918.30,680.50 L919.10,680.50 L919.90,680.50 L920.70,680.50 L921.50,680.50 L922.30,680.50 L923.10,680.50 L923.90,680.50 L924.70,680.50 L925.50,680.50 L926.30,680.50 L927.10,680.50 L927.90,680.50 L928.70,680.50 L929.50,680.50 L930.30,680.50 L931.10,680.50 L931.90,680.50 L932.70,680.50 L933.50,680.50 L934.30,680.50 L935.10,680.50 L935.90,680.50 L936.70,680.50 L937.50,680.50 L938.30,680.50 L939.10,680.50 L939.90,680.50 L940.70,680.50 L941.50,680.50 L942.30,680.50 L943.10,680.50 L943.90,680.50 L944.70,680.50 L945.50,680.50 L946.30,680.50 L947.10,680.50 L947.90,680.50 L948.70,680.50 L949.50,680.50 L950.30,680.50 L951.10,680.50 L951.90,680.50 L952.70,680.50 L953.50,680.50 L954.30,680.50 L955.10,680.50 L955.90,680.50 L956.70,680.50 L957.50,680.50 L958.30,680.50 L959.10,680.50 L959.90,680.50 L960.70,680.50 L961.50,680.50 L962.30,680.50 L963.10,680.50 L963.90,680.50 L964.70,680.50 L965.50,680.50 L966.30,680.50 L967.10,680.50 L967.90,680.50 L968.70,680.50 L969.50,680.50 L970.30,680.50 L971.10,680.50 L971.90,680.50 L972.70,680.50 L973.50,680.50 L974.30,680.50 L975.10,680.50 L975.90,680.50 L976.70,680.50 L977.50,680.50 L978.30,680.50 L979.10,680.50 L979.90,680.50 L980.70,680.50 L981.50,680.50 L982.30,680.50 L983.10,680.50 L983.90,680.50 L984.70,680.50 L985.50,680.50 L986.30,680.50 L987.10,680.50 L987.90,680.50 L988.70,680.50 L989.50,680.50 L990.30,680.50 L991.10,680.50 L991.90,680.50 L992.70,680.50 L993.50,680.50 L994.30,680.50 L995.10,680.50 L995.90,680.50 L996.70,680.50 L997.50,680.50 L998.30,680.50 L999.10,680.50 L999.90,680.50 L1000.70,680.50 L1001.50,680.50 L1002.30,680.50 L1003.10,680.50 L1003.90,680.50 L1004.70,680.50 L1005.50,680.50 L1006.30,680.50 L1007.10,680.50 L1007.90,680.50 L1008.70,680.50 L1009.50,680.50 L1010.30,680.50 L1011.10,680.50 L1011.90,680.50 L1012.70,680.50 L1013.50,680.50 L1014.30,680.50 L1015.10,680.50 L1015.90,680.50 L1016.70,680.50 L1017.50,680.50 L1018.30,680.50 L1019.10,680.50 L1019.90,680.50 L1020.70,680.50 L1021.50,680.50 L1022.30,680.50 L1023.10,680.50 L1023.90,680.51 L1024.70,680.54 L1025.50,680.59 L1026.30,680.70 L1027.10,680.85 L1027.90,681.05 L1028.70,681.25 L1029.50,681.38 L1030.30,681.39 L1031.10,681.29 L1031.90,681.10 L1032.70,680.90 L1033.50,680.73 L1034.30,680.62 L1035.10,680.55 L1035.90,680.52 L1036.70,680.51 L1037.50,680.50 L1038.30,680.50 L1039.10,680.50 L1039.90,680.51 L1040.70,680.54 L1041.50,680.59 L1042.30,680.70 L1043.10,680.85 L1043.90,681.05 L1044.70,681.25 L1045.50,681.38 L1046.30,681.39 L1047.10,681.29 L1047.90,681.10 L1048.70,680.90 L1049.50,680.73 L1050.30,680.62 L1051.10,680.55 L1051.90,680.52 L1052.70,680.51 L1053.50,680.50 L1054.30,680.50 L1055.10,680.50 L1055.90,680.50 L1056.70,680.50 L1057.50,680.50 L1058.30,680.50 L1059.10,680.50 L1059.90,680.50 L1060.70,680.50 L1061.50,680.50 L1062.30,680.50 L1063.10,680.50 L1063.90,680.50 L1064.70,680.50 L1065.50,680.50 L1066.30,680.51 L1067.10,680.52 L1067.90,680.55 L1068.70,680.62 L1069.50,680.73 L1070.30,680.90 L1071.10,681.10 L1071.90,681.29 L1072.70,681.39 L1073.50,681.38 L1074.30,681.25 L1075.10,681.05 L1075.90,680.85 L1076.70,680.70 L1077.50,680.59 L1078.30,680.54 L1079.10,680.51 L1079.90,680.50 L1080.70,680.50 L1081.50,680.50 L1082.30,680.50 L1083.10,680.50 L1083.90,680.50 L1084.70,680.50 L1085.50,680.50 L1086.30,680.50 L1087.10,680.50 L1087.90,680.50 L1088.70,680.51 L1089.50,680.53 L1090.30,680.58 L1091.10,680.67 L1091.90,680.81 L1092.70,681.00 L1093.50,681.20 L1094.30,681.35 L1095.10,681.40 L1095.90,681.32 L1096.70,681.15 L1097.50,680.95 L1098.30,680.77 L1099.10,680.64 L1099.90,680.56 L1100.70,680.52 L1101.50,680.51 L1102.30,680.50 L1103.10,680.50 L1103.90,680.50 L1104.70,680.50 L1105.50,680.50 L1106.30,680.50 L1107.10,680.50 L1107.90,680.50 L1108.70,680.50 L1109.50,680.50 L1110.30,680.50 L1111.10,680.50 L1111.90,680.50 L1112.70,680.50 L1113.50,680.50 L1114.30,680.50 L1115.10,680.50 L1115.90,680.50 L1116.70,680.50 L1117.50,680.50 L1118.30,680.50 L1119.10,680.50 L1119.90,680.50 L1120.70,680.50 L1121.50,680.50 L1122.30,680.50 L1123.10,680.50 L1123.90,680.50 L1124.70,680.50 L1125.50,680.50 L1126.30,680.50 L1127.10,680.50 L1127.90,680.50 L1128.70,680.50 L1129.50,680.50 L1130.30,680.50 L1131.10,680.50 L1131.90,680.50 L1132.70,680.50 L1133.50,680.50 L1134.30,680.50 L1135.10,680.50 L1135.90,680.50 L1136.70,680.50 L1137.50,680.50 L1138.30,680.50 L1139.10,680.50 L1139.90,680.50 L1140.70,680.50 L1141.50,680.50 L1142.30,680.50 L1143.10,680.50 L1143.90,680.51 L1144.70,680.54 L1145.50,680.59 L1146.30,680.70 L1147.10,680.85 L1147.90,681.05 L1148.70,681.25 L1149.50,681.38 L1150.30,681.39 L1151.10,681.29 L1151.90,681.10 L1152.70,680.90 L1153.50,680.73 L1154.30,680.62 L1155.10,680.55 L1155.90,680.52 L1156.70,680.51 L1157.50,680.50 L1158.30,680.50 L1159.10,680.50 L1159.90,680.50 L1160.70,680.50 L1161.50,680.50 L1162.30,680.50 L1163.10,680.50 L1163.90,680.50 L1164.70,680.50 L1165.50,680.50 L1166.30,680.50 L1167.10,680.50 L1167.90,680.50 L1168.70,680.50 L1169.50,680.50 L1170.30,680.50 L1171.10,680.50 L1171.90,680.50 L1172.70,680.50 L1173.50,680.50 L1174.30,680.50 L1175.10,680.50 L1175.90,680.50 L1176.70,680.50 L1177.50,680.50 L1178.30,680.50 L1179.10,680.50 L1179.90,680.50 L1180.70,680.50 L1181.50,680.50 L1182.30,680.50 L1183.10,680.50 L1183.90,680.51 L1184.70,680.54 L1185.50,680.59 L1186.30,680.70 L1187.10,680.85 L1187.90,681.05 L1188.70,681.25 L1189.50,681.38 L1190.30,681.39 L1191.10,681.29 L1191.90,681.10 L1192.70,680.90 L1193.50,680.73 L1194.30,680.62 L1195.10,680.55 L1195.90,680.52 L1196.70,680.51 L1197.50,680.50 L1198.30,680.50 L1199.10,680.50 L1199.90,680.50 L1200.70,680.50 L1201.50,680.50 L1202.30,680.50 L1203.10,680.50 L1203.90,680.50 L1204.70,680.50 L1205.50,680.50 L1206.30,680.50 L1207.10,680.50 L1207.90,680.50 L1208.70,680.50 L1209.50,680.50 L1210.30,680.50 L1211.10,680.50 L1211.90,680.50 L1212.70,680.50 L1213.50,680.50 L1214.30,680.50 L1215.10,680.50 L1215.90,680.50 L1216.70,680.50 L1217.50,680.50 L1218.30,680.50 L1219.10,680.50" fill="none" stroke="#FF9830" stroke-width="1" stroke-linejoin="round" /><path d="M386.30,662.30 L387.30,662.30 L388.30,662.30 L389.30,662.30 L390.30,662.30 L391.30,662.30 L392.30,662.30 L393.30,662.30 L394.30,662.30 L395.30,662.30 L396.30,662.30 L397.30,662.30 L398.30,662.28 L399.30,662.23 L400.30,662.09 L401.30,661.83 L402.30,661.47 L403.30,661.17 L404.30,661.11 L405.30,661.33 L406.30,661.69 L407.30,662.00 L408.30,662.18 L409.30,662.25 L410.30,662.22 L411.30,662.09 L412.30,661.83 L413.30,661.47 L414.30,661.17 L415.30,661.11 L416.30,661.33 L417.30,661.69 L418.30,662.00 L419.30,662.17 L420.30,662.19 L421.30,662.08 L422.30,661.83 L423.30,661.47 L424.30,661.17 L425.30,661.11 L426.30,661.33 L427.30,661.69 L428.30,662.00 L429.30,662.19 L430.30,662.27 L431.30,662.29 L432.30,662.30 L433.30,662.30 L434.30,662.30 L435.30,662.30 L436.30,662.30 L437.30,662.30 L438.30,662.30 L439.30,662.30 L440.30,662.30 L441.30,662.30 L442.30,662.30 L443.30,662.30 L444.30,662.30 L445.30,662.30 L446.30,662.30 L447.30,662.30 L448.30,662.30 L449.30,662.30 L450.30,662.30 L451.30,662.30 L452.30,662.30 L453.30,662.30 L454.30,662.30 L455.30,662.30 L456.30,662.30 L457.30,662.30 L458.30,662.30 L459.30,662.30 L460.30,662.30 L461.30,662.30 L462.30,662.30 L463.30,662.30 L464.30,662.30 L465.30,662.30 L466.30,662.30 L467.30,662.30 L468.30,662.30 L469.30,662.30 L470.30,662.30 L471.30,662.30 L472.30,662.30 L473.30,662.30 L474.30,662.30 L475.30,662.30 L476.30,662.28 L477.30,662.23 L478.30,662.09 L479.30,661.83 L480.30,661.47 L481.30,661.17 L482.30,661.11 L483.30,661.33 L484.30,661.69 L485.30,662.00 L486.30,662.17 L487.30,662.19 L488.30,662.08 L489.30,661.83 L490.30,661.47 L491.30,661.17 L492.30,661.11 L493.30,661.33 L494.30,661.69 L495.30,662.00 L496.30,662.19 L497.30,662.27 L498.30,662.29 L499.30,662.30 L500.30,662.30 L501.30,662.30 L502.30,662.30 L503.30,662.30 L504.30,662.28 L505.30,662.23 L506.30,662.09 L507.30,661.83 L508.30,661.47 L509.30,661.17 L510.30,661.11 L511.30,661.33 L512.30,661.69 L513.30,662.00 L514.30,662.19 L515.30,662.26 L516.30,662.27 L517.30,662.23 L518.30,662.09 L519.30,661.83 L520.30,661.47 L521.30,661.17 L522.30,661.11 L523.30,661.33 L524.30,661.69 L525.30,662.00 L526.30,662.19 L527.30,662.27 L528.30,662.29 L529.30,662.30 L530.30,662.30 L531.30,662.30 L532.30,662.30 L533.30,662.30 L534.30,662.30 L535.30,662.30 L536.30,662.30 L537.30,662.30 L538.30,662.30 L539.30,662.30 L540.30,662.30 L541.30,662.30 L542.30,662.30 L543.30,662.30 L544.30,662.30 L545.30,662.30 L546.30,662.30 L547.30,662.30 L548.30,662.30 L549.30,662.30 L550.30,662.30 L551.30,662.30 L552.30,662.30 L553.30,662.30 L554.30,662.30 L555.30,662.30 L556.30,662.30 L557.30,662.30 L558.30,662.30 L559.30,662.30 L560.30,662.30 L561.30,662.30 L562.30,662.28 L563.30,662.23 L564.30,662.09 L565.30,661.83 L566.30,661.47 L567.30,661.17 L568.30,661.11 L569.30,661.33 L570.30,661.69 L571.30,662.00 L572.30,662.19 L573.30,662.27 L574.30,662.29 L575.30,662.30 L576.30,662.30 L577.30,662.30 L578.30,662.30 L579.30,662.28 L580.30,662.23 L581.30,662.09 L582.30,661.83 L583.30,661.47 L584.30,661.17 L585.30,661.11 L586.30,661.33 L587.30,661.69 L588.30,662.00 L589.30,662.19 L590.30,662.27 L591.30,662.29 L592.30,662.30 L593.30,662.30 L594.30,662.30 L595.30,662.30 L596.30,662.30 L597.30,662.30 L598.30,662.30 L599.30,662.30 L600.30,662.33 L601.30,662.43 L602.30,662.53 L603.30,662.63 L604.30,662.73 L605.30,662.83 L606.30,662.93 L607.30,663.03 L608.30,663.13 L609.30,663.23 L610.30,663.33 L611.30,663.43 L612.30,663.54 L613.30,663.67 L614.30,663.81 L615.30,663.94 L616.30,664.05 L617.30,664.13 L618.30,663.97 L619.30,663.31 L620.30,662.55 L621.30,661.85 L622.30,661.39 L623.30,661.21 L624.30,661.17 L625.30,661.08 L626.30,660.87 L627.30,660.55 L628.30,660.17 L629.30,659.78 L630.30,659.95 L631.30,661.45 L632.30,662.33 L633.30,661.75 L634.30,661.17 L635.30,660.59 L636.30,660.01 L637.30,659.60 L638.30,659.60 L639.30,659.60 L640.30,659.60 L641.30,659.60 L642.30,659.60 L643.30,659.60 L644.30,659.61 L645.30,659.61 L646.30,659.61 L647.30,659.61 L648.30,659.60 L649.30,659.59 L650.30,659.54 L651.30,659.40 L652.30,659.14 L653.30,658.78 L654.30,658.49 L655.30,658.43 L656.30,658.65 L657.30,659.00 L658.30,659.32 L659.30,659.50 L660.30,659.58 L661.30,659.61 L662.30,659.62 L663.30,659.62 L664.30,659.62 L665.30,659.62 L666.30,659.62 L667.30,659.62 L668.30,659.62 L669.30,659.62 L670.30,659.62 L671.30,659.63 L672.30,659.63 L673.30,659.63 L674.30,659.63 L675.30,659.63 L676.30,659.63 L677.30,659.63 L678.30,659.63 L679.30,659.63 L680.30,659.63 L681.30,659.63 L682.30,659.63 L683.30,659.63 L684.30,659.63 L685.30,659.64 L686.30,659.64 L687.30,659.64 L688.30,659.64 L689.30,659.64 L690.30,659.64 L691.30,659.64 L692.30,659.64 L693.30,659.64 L694.30,659.62 L695.30,659.57 L696.30,659.43 L697.30,659.17 L698.30,658.81 L699.30,658.52 L700.30,658.46 L701.30,658.68 L702.30,659.04 L703.30,659.35 L704.30,659.54 L705.30,659.62 L706.30,659.64 L707.30,659.65 L708.30,659.65 L709.30,659.65 L710.30,659.65 L711.30,659.65 L712.30,659.65 L713.30,659.66 L714.30,659.66 L715.30,659.66 L716.30,659.66 L717.30,659.66 L718.30,659.66 L719.30,659.66 L720.30,659.66 L721.30,659.66 L722.30,659.66 L723.30,659.66 L724.30,659.66 L725.30,659.66 L726.30,659.67 L727.30,659.67 L728.30,659.67 L729.30,659.67 L730.30,659.67 L731.30,659.67 L732.30,659.67 L733.30,659.67 L734.30,659.67 L735.30,659.67 L736.30,659.67 L737.30,659.67 L738.30,659.67 L739.30,659.67 L740.30,659.68 L741.30,659.68 L742.30,659.68 L743.30,659.68 L744.30,659.68 L745.30,659.68 L746.30,659.68 L747.30,659.68 L748.30,659.68 L749.30,659.68 L750.30,659.68 L751.30,659.68 L752.30,659.68 L753.30,659.68 L754.30,659.69 L755.30,659.69 L756.30,659.69 L757.30,659.69 L758.30,659.68 L759.30,659.67 L760.30,659.62 L761.30,659.48 L762.30,659.22 L763.30,658.86 L764.30,658.57 L765.30,658.51 L766.30,658.73 L767.30,659.08 L768.30,659.40 L769.30,659.58 L770.30,659.66 L771.30,659.69 L772.30,659.70 L773.30,659.70 L774.30,659.70 L775.30,659.70 L776.30,659.70 L777.30,659.70 L778.30,659.70 L779.30,659.70 L780.30,659.70 L781.30,659.71 L782.30,659.71 L783.30,659.71 L784.30,659.71 L785.30,659.71 L786.30,659.71 L787.30,659.71 L788.30,659.71 L789.30,659.71 L790.30,659.71 L791.30,659.71 L792.30,659.71 L793.30,659.71 L794.30,659.71 L795.30,659.72 L796.30,659.72 L797.30,659.72 L798.30,659.72 L799.30,659.72 L800.30,659.72 L801.30,659.72 L802.30,659.72 L803.30,659.72 L804.30,659.72 L805.30,659.72 L806.30,659.70 L807.30,659.65 L808.30,659.52 L809.30,659.25 L810.30,658.90 L811.30,658.60 L812.30,658.54 L813.30,658.76 L814.30,659.12 L815.30,659.43 L816.30,659.62 L817.30,659.70 L818.30,659.72 L819.30,659.73 L820.30,659.73 L821.30,659.73 L822.30,659.74 L823.30,659.74 L824.30,659.74 L825.30,659.74 L826.30,659.74 L827.30,659.74 L828.30,659.74 L829.30,659.74 L830.30,659.74 L831.30,659.74 L832.30,659.74 L833.30,659.74 L834.30,659.74 L835.30,659.74 L836.30,659.75 L837.30,659.75 L838.30,659.75 L839.30,659.75 L840.30,659.75 L841.30,659.75 L842.30,659.75 L843.30,659.75 L844.30,659.75 L845.30,659.75 L846.30,659.75 L847.30,659.75 L848.30,659.75 L849.30,659.75 L850.30,659.76 L851.30,659.75 L852.30,659.74 L853.30,659.69 L854.30,659.55 L855.30,659.29 L856.30,658.93 L857.30,658.63 L858.30,658.58 L859.30,658.79 L860.30,659.15 L861.30,659.46 L862.30,659.65 L863.30,659.73 L864.30,659.76 L865.30,659.77 L866.30,659.77 L867.30,659.77 L868.30,659.77 L869.30,659.77 L870.30,659.77 L871.30,659.77 L872.30,659.77 L873.30,659.77 L874.30,659.75 L875.30,659.70 L876.30,659.57 L877.30,659.30 L878.30,658.95 L879.30,658.65 L880.30,658.59 L881.30,658.81 L882.30,659.17 L883.30,659.48 L884.30,659.67 L885.30,659.75 L886.30,659.77 L887.30,659.78 L888.30,659.78 L889.30,659.78 L890.30,659.78 L891.30,659.79 L892.30,659.79 L893.30,659.79 L894.30,659.79 L895.30,659.79 L896.30,659.79 L897.30,659.79 L898.30,659.79 L899.30,659.79 L900.30,659.79 L901.30,659.79 L902.30,659.79 L903.30,659.79 L904.30,659.80 L905.30,659.80 L906.30,659.80 L907.30,659.80 L908.30,659.80 L909.30,659.80 L910.30,659.80 L911.30,659.90 L912.30,660.22 L913.30,660.54 L914.30,660.86 L915.30,661.18 L916.30,661.40 L917.30,661.40 L918.30,661.40 L919.30,661.40 L920.30,661.40 L921.30,661.40 L922.30,661.40 L923.30,661.40 L924.30,661.40 L925.30,661.40 L926.30,661.40 L927.30,661.40 L928.30,661.40 L929.30,661.40 L930.30,661.40 L931.30,661.40 L932.30,661.40 L933.30,661.40 L934.30,661.40 L935.30,661.40 L936.30,661.40 L937.30,661.40 L938.30,661.40 L939.30,661.40 L940.30,661.40 L941.30,661.40 L942.30,661.40 L943.30,661.40 L944.30,661.40 L945.30,661.40 L946.30,661.40 L947.30,661.40 L948.30,661.40 L949.30,661.40 L950.30,661.40 L951.30,661.40 L952.30,661.40 L953.30,661.40 L954.30,661.40 L955.30,661.40 L956.30,661.40 L957.30,661.40 L958.30,661.40 L959.30,661.40 L960.30,661.40 L961.30,661.40 L962.30,661.40 L963.30,661.40 L964.30,661.40 L965.30,661.40 L966.30,661.40 L967.30,661.40 L968.30,661.40 L969.30,661.40 L970.30,661.40 L971.30,661.40 L972.30,661.40 L973.30,661.40 L974.30,661.40 L975.30,661.40 L976.30,661.40 L977.30,661.40 L978.30,661.40 L979.30,661.40 L980.30,661.40 L981.30,661.40 L982.30,661.40 L983.30,661.40 L984.30,661.40 L985.30,661.40 L986.30,661.40 L987.30,661.40 L988.30,661.40 L989.30,661.40 L990.30,661.40 L991.30,661.40 L992.30,661.40 L993.30,661.40 L994.30,661.40 L995.30,661.40 L996.30,661.40 L997.30,661.40 L998.30,661.40 L999.30,661.40 L1000.30,661.40 L1001.30,661.40 L1002.30,661.40 L1003.30,661.40 L1004.30,661.40 L1005.30,661.40 L1006.30,661.40 L1007.30,661.40 L1008.30,661.40 L1009.30,661.40 L1010.30,661.40 L1011.30,661.40 L1012.30,661.40 L1013.30,661.40 L1014.30,661.40 L1015.30,661.40 L1016.30,661.40 L1017.30,661.40 L1018.30,661.40 L1019.30,661.40 L1020.30,661.40 L1021.30,661.40 L1022.30,661.40 L1023.30,661.40 L1024.30,661.38 L1025.30,661.33 L1026.30,661.19 L1027.30,660.93 L1028.30,660.57 L1029.30,660.27 L1030.30,660.21 L1031.30,660.43 L1032.30,660.79 L1033.30,661.10 L1034.30,661.29 L1035.30,661.37 L1036.30,661.39 L1037.30,661.40 L1038.30,661.40 L1039.30,661.40 L1040.30,661.40 L1041.30,661.40 L1042.30,661.40 L1043.30,661.40 L1044.30,661.40 L1045.30,661.40 L1046.30,661.40 L1047.30,661.40 L1048.30,661.40 L1049.30,661.40 L1050.30,661.40 L1051.30,661.40 L1052.30,661.40 L1053.30,661.40 L1054.30,661.38 L1055.30,661.33 L1056.30,661.19 L1057.30,660.93 L1058.30,660.57 L1059.30,660.27 L1060.30,660.21 L1061.30,660.43 L1062.30,660.79 L1063.30,661.10 L1064.30,661.29 L1065.30,661.37 L1066.30,661.39 L1067.30,661.40 L1068.30,661.40 L1069.30,661.38 L1070.30,661.33 L1071.30,661.19 L1072.30,660.93 L1073.30,660.57 L1074.30,660.27 L1075.30,660.21 L1076.30,660.43 L1077.30,660.79 L1078.30,661.10 L1079.30,661.29 L1080.30,661.37 L1081.30,661.39 L1082.30,661.40 L1083.30,661.40 L1084.30,661.40 L1085.30,661.40 L1086.30,661.40 L1087.30,661.40 L1088.30,661.40 L1089.30,661.40 L1090.30,661.40 L1091.30,661.40 L1092.30,661.40 L1093.30,661.40 L1094.30,661.38 L1095.30,661.33 L1096.30,661.19 L1097.30,660.93 L1098.30,660.57 L1099.30,660.27 L1100.30,660.21 L1101.30,660.43 L1102.30,660.79 L1103.30,661.10 L1104.30,661.29 L1105.30,661.37 L1106.30,661.39 L1107.30,661.40 L1108.30,661.40 L1109.30,661.40 L1110.30,661.40 L1111.30,661.40 L1112.30,661.40 L1113.30,661.40 L1114.30,661.40 L1115.30,661.40 L1116.30,661.40 L1117.30,661.40 L1118.30,661.40 L1119.30,661.40 L1120.30,661.40 L1121.30,661.40 L1122.30,661.40 L1123.30,661.40 L1124.30,661.40 L1125.30,661.40 L1126.30,661.40 L1127.30,661.40 L1128.30,661.40 L1129.30,661.40 L1130.30,661.40 L1131.30,661.40 L1132.30,661.40 L1133.30,661.40 L1134.30,661.40 L1135.30,661.40 L1136.30,661.40 L1137.30,661.40 L1138.30,661.40 L1139.30,661.40 L1140.30,661.40 L1141.30,661.40 L1142.30,661.40 L1143.30,661.40 L1144.30,661.38 L1145.30,661.33 L1146.30,661.19 L1147.30,660.93 L1148.30,660.57 L1149.30,660.27 L1150.30,660.21 L1151.30,660.43 L1152.30,660.79 L1153.30,661.10 L1154.30,661.29 L1155.30,661.37 L1156.30,661.39 L1157.30,661.40 L1158.30,661.40 L1159.30,661.40 L1160.30,661.40 L1161.30,661.40 L1162.30,661.40 L1163.30,661.40 L1164.30,661.40 L1165.30,661.40 L1166.30,661.40 L1167.30,661.40 L1168.30,661.40 L1169.30,661.40 L1170.30,661.40 L1171.30,661.40 L1172.30,661.40 L1173.30,661.40 L1174.30,661.40 L1175.30,661.40 L1176.30,661.40 L1177.30,661.40 L1178.30,661.40 L1179.30,661.40 L1180.30,661.40 L1181.30,661.40 L1182.30,661.40 L1183.30,661.40 L1184.30,661.40 L1185.30,661.40 L1186.30,661.40 L1187.30,661.40 L1188.30,661.40 L1189.30,661.40 L1190.30,661.40 L1191.30,661.38 L1192.30,661.33 L1193.30,661.19 L1194.30,660.93 L1195.30,660.57 L1196.30,660.27 L1197.30,660.21 L1198.30,660.43 L1199.30,660.79 L1200.30,661.10 L1201.30,661.29 L1202.30,661.37 L1203.30,661.39 L1204.30,661.40 L1205.30,661.40 L1206.30,661.40 L1207.30,661.40 L1208.30,661.40 L1209.30,661.40 L1210.30,661.40 L1211.30,661.40 L1212.30,661.40 L1213.30,661.40 L1214.30,661.40 L1215.30,661.40 L1216.30,661.40 L1217.30,661.40 L1218.30,661.40 L1219.30,661.40" fill="none" stroke="#73BF69" stroke-width="1" stroke-linejoin="round" /><path d="M386.30,660.40 L386.90,660.40 L387.50,660.40 L388.10,660.40 L388.70,660.40 L389.30,660.40 L389.90,660.40 L390.50,660.40 L391.10,660.40 L391.70,660.40 L392.30,660.40 L392.90,660.40 L393.50,660.40 L394.10,660.40 L394.70,660.40 L395.30,660.40 L395.90,660.40 L396.50,660.40 L397.10,660.40 L397.70,660.40 L398.30,660.40 L398.90,660.40 L399.50,660.40 L400.10,660.40 L400.70,660.40 L401.30,660.40 L401.90,660.40 L402.50,660.40 L403.10,660.40 L403.70,660.40 L404.30,660.40 L404.90,660.40 L405.50,660.40 L406.10,660.40 L406.70,660.40 L407.30,660.40 L407.90,660.40 L408.50,660.40 L409.10,660.40 L409.70,660.40 L410.30,660.40 L410.90,660.40 L411.50,660.40 L412.10,660.40 L412.70,660.40 L413.30,660.40 L413.90,660.40 L414.50,660.40 L415.10,660.40 L415.70,660.40 L416.30,660.40 L416.90,660.40 L417.50,660.40 L418.10,660.40 L418.70,660.40 L419.30,660.40 L419.90,660.40 L420.50,660.40 L421.10,660.40 L421.70,660.40 L422.30,660.40 L422.90,660.40 L423.50,660.40 L424.10,660.40 L424.70,660.40 L425.30,660.40 L425.90,660.40 L426.50,660.40 L427.10,660.40 L427.70,660.40 L428.30,660.40 L428.90,660.40 L429.50,660.40 L430.10,660.40 L430.70,660.40 L431.30,660.40 L431.90,660.40 L432.50,660.40 L433.10,660.40 L433.70,660.40 L434.30,660.40 L434.90,660.40 L435.50,660.40 L436.10,660.40 L436.70,660.40 L437.30,660.40 L437.90,660.40 L438.50,660.40 L439.10,660.40 L439.70,660.40 L440.30,660.40 L440.90,660.40 L441.50,660.40 L442.10,660.40 L442.70,660.40 L443.30,660.40 L443.90,660.40 L444.50,660.40 L445.10,660.40 L445.70,660.40 L446.30,660.40 L446.90,660.40 L447.50,660.40 L448.10,660.40 L448.70,660.40 L449.30,660.40 L449.90,660.40 L450.50,660.40 L451.10,660.40 L451.70,660.40 L452.30,660.40 L452.90,660.40 L453.50,660.40 L454.10,660.40 L454.70,660.40 L455.30,660.40 L455.90,660.40 L456.50,660.40 L457.10,660.40 L457.70,660.40 L458.30,660.40 L458.90,660.40 L459.50,660.40 L460.10,660.40 L460.70,660.40 L461.30,660.40 L461.90,660.40 L462.50,660.40 L463.10,660.40 L463.70,660.40 L464.30,660.40 L464.90,660.40 L465.50,660.40 L466.10,660.40 L466.70,660.40 L467.30,660.40 L467.90,660.40 L468.50,660.40 L469.10,660.40 L469.70,660.40 L470.30,660.40 L470.90,660.40 L471.50,660.40 L472.10,660.40 L472.70,660.40 L473.30,660.40 L473.90,660.40 L474.50,660.40 L475.10,660.40 L475.70,660.40 L476.30,660.40 L476.90,660.40 L477.50,660.40 L478.10,660.40 L478.70,660.40 L479.30,660.40 L479.90,660.40 L480.50,660.40 L481.10,660.40 L481.70,660.40 L482.30,660.40 L482.90,660.40 L483.50,660.40 L484.10,660.40 L484.70,660.40 L485.30,660.40 L485.90,660.40 L486.50,660.40 L487.10,660.40 L487.70,660.40 L488.30,660.40 L488.90,660.40 L489.50,660.40 L490.10,660.40 L490.70,660.40 L491.30,660.40 L491.90,660.40 L492.50,660.40 L493.10,660.40 L493.70,660.40 L494.30,660.40 L494.90,660.40 L495.50,660.40 L496.10,660.40 L496.70,660.40 L497.30,660.40 L497.90,660.40 L498.50,660.40 L499.10,660.40 L499.70,660.40 L500.30,660.40 L500.90,660.40 L501.50,660.40 L502.10,660.40 L502.70,660.40 L503.30,660.40 L503.90,660.40 L504.50,660.40 L505.10,660.40 L505.70,660.40 L506.30,660.40 L506.90,660.40 L507.50,660.40 L508.10,660.40 L508.70,660.40 L509.30,660.40 L509.90,660.40 L510.50,660.40 L511.10,660.40 L511.70,660.40 L512.30,660.40 L512.90,660.40 L513.50,660.40 L514.10,660.40 L514.70,660.40 L515.30,660.40 L515.90,660.40 L516.50,660.40 L517.10,660.40 L517.70,660.40 L518.30,660.40 L518.90,660.40 L519.50,660.40 L520.10,660.40 L520.70,660.40 L521.30,660.40 L521.90,660.40 L522.50,660.40 L523.10,660.40 L523.70,660.40 L524.30,660.40 L524.90,660.40 L525.50,660.40 L526.10,660.40 L526.70,660.40 L527.30,660.40 L527.90,660.40 L528.50,660.40 L529.10,660.40 L529.70,660.40 L530.30,660.40 L530.90,660.40 L531.50,660.40 L532.10,660.40 L532.70,660.40 L533.30,660.40 L533.90,660.40 L534.50,660.40 L535.10,660.40 L535.70,660.40 L536.30,660.40 L536.90,660.40 L537.50,660.40 L538.10,660.40 L538.70,660.40 L539.30,660.40 L539.90,660.40 L540.50,660.40 L541.10,660.40 L541.70,660.40 L542.30,660.40 L542.90,660.40 L543.50,660.40 L544.10,660.40 L544.70,660.40 L545.30,660.40 L545.90,660.40 L546.50,660.40 L547.10,660.40 L547.70,660.40 L548.30,660.40 L548.90,660.40 L549.50,660.40 L550.10,660.40 L550.70,660.40 L551.30,660.40 L551.90,660.40 L552.50,660.40 L553.10,660.40 L553.70,660.40 L554.30,660.40 L554.90,660.40 L555.50,660.40 L556.10,660.40 L556.70,660.40 L557.30,660.40 L557.90,660.40 L558.50,660.40 L559.10,660.40 L559.70,660.40 L560.30,660.40 L560.90,660.40 L561.50,660.40 L562.10,660.40 L562.70,660.40 L563.30,660.40 L563.90,660.40 L564.50,660.40 L565.10,660.40 L565.70,660.40 L566.30,660.40 L566.90,660.40 L567.50,660.40 L568.10,660.40 L568.70,660.40 L569.30,660.40 L569.90,660.40 L570.50,660.40 L571.10,660.40 L571.70,660.40 L572.30,660.40 L572.90,660.40 L573.50,660.40 L574.10,660.40 L574.70,660.40 L575.30,660.40 L575.90,660.40 L576.50,660.40 L577.10,660.40 L577.70,660.40 L578.30,660.40 L578.90,660.40 L579.50,660.40 L580.10,660.40 L580.70,660.40 L581.30,660.40 L581.90,660.40 L582.50,660.40 L583.10,660.40 L583.70,660.40 L584.30,660.40 L584.90,660.40 L585.50,660.40 L586.10,660.40 L586.70,660.40 L587.30,660.40 L587.90,660.40 L588.50,660.40 L589.10,660.40 L589.70,660.40 L590.30,660.40 L590.90,660.40 L591.50,660.40 L592.10,660.40 L592.70,660.40 L593.30,660.40 L593.90,660.40 L594.50,660.40 L595.10,660.40 L595.70,660.40 L596.30,660.40 L596.90,660.40 L597.50,660.40 L598.10,660.40 L598.70,660.40 L599.30,660.40 L599.90,660.40 L600.50,660.40 L601.10,660.40 L601.70,660.40 L602.30,660.40 L602.90,660.40 L603.50,660.40 L604.10,660.40 L604.70,660.40 L605.30,660.40 L605.90,660.40 L606.50,660.40 L607.10,660.40 L607.70,660.40 L608.30,660.40 L608.90,660.40 L609.50,660.40 L610.10,660.40 L610.70,660.40 L611.30,660.40 L611.90,660.40 L612.50,660.40 L613.10,660.40 L613.70,660.40 L614.30,660.40 L614.90,660.40 L615.50,660.40 L616.10,660.40 L616.70,660.40 L617.30,660.40 L617.90,660.40 L618.50,660.40 L619.10,660.40 L619.70,660.40 L620.30,660.40 L620.90,660.40 L621.50,660.40 L622.10,660.40 L622.70,660.40 L623.30,660.40 L623.90,660.40 L624.50,660.40 L625.10,660.40 L625.70,660.40 L626.30,660.03 L626.90,657.84 L627.50,655.65 L628.10,653.46 L628.70,651.23 L629.30,648.92 L629.90,646.61 L630.50,644.30 L631.10,647.38 L631.70,650.46 L632.30,653.85 L632.90,657.54 L633.50,659.82 L634.10,659.28 L634.70,658.74 L635.30,658.21 L635.90,657.67 L636.50,657.13 L637.10,656.59 L637.70,656.50 L638.30,656.50 L638.90,656.50 L639.50,656.50 L640.10,656.50 L640.70,656.50 L641.30,656.50 L641.90,656.50 L642.50,656.50 L643.10,656.50 L643.70,656.50 L644.30,656.50 L644.90,656.50 L645.50,656.50 L646.10,656.50 L646.70,656.50 L647.30,656.50 L647.90,656.50 L648.50,656.50 L649.10,656.50 L649.70,656.50 L650.30,656.50 L650.90,656.50 L651.50,656.50 L652.10,656.50 L652.70,656.50 L653.30,656.50 L653.90,656.50 L654.50,656.50 L655.10,656.50 L655.70,656.50 L656.30,656.50 L656.90,656.50 L657.50,656.50 L658.10,656.50 L658.70,656.50 L659.30,656.50 L659.90,656.50 L660.50,656.50 L661.10,656.50 L661.70,656.50 L662.30,656.50 L662.90,656.50 L663.50,656.50 L664.10,656.50 L664.70,656.50 L665.30,656.50 L665.90,656.50 L666.50,656.50 L667.10,656.50 L667.70,656.50 L668.30,656.50 L668.90,656.50 L669.50,656.50 L670.10,656.50 L670.70,656.50 L671.30,656.50 L671.90,656.50 L672.50,656.50 L673.10,656.50 L673.70,656.50 L674.30,656.50 L674.90,656.50 L675.50,656.50 L676.10,656.50 L676.70,656.50 L677.30,656.50 L677.90,656.50 L678.50,656.50 L679.10,656.50 L679.70,656.50 L680.30,656.50 L680.90,656.50 L681.50,656.50 L682.10,656.50 L682.70,656.50 L683.30,656.50 L683.90,656.50 L684.50,656.50 L685.10,656.50 L685.70,656.50 L686.30,656.50 L686.90,656.50 L687.50,656.50 L688.10,656.50 L688.70,656.50 L689.30,656.50 L689.90,656.50 L690.50,656.50 L691.10,656.50 L691.70,656.50 L692.30,656.50 L692.90,656.50 L693.50,656.50 L694.10,656.50 L694.70,656.50 L695.30,656.50 L695.90,656.50 L696.50,656.50 L697.10,656.50 L697.70,656.50 L698.30,656.50 L698.90,656.50 L699.50,656.50 L700.10,656.50 L700.70,656.50 L701.30,656.50 L701.90,656.50 L702.50,656.50 L703.10,656.50 L703.70,656.50 L704.30,656.50 L704.90,656.50 L705.50,656.50 L706.10,656.50 L706.70,656.50 L707.30,656.50 L707.90,656.50 L708.50,656.50 L709.10,656.50 L709.70,656.50 L710.30,656.50 L710.90,656.50 L711.50,656.50 L712.10,656.50 L712.70,656.50 L713.30,656.50 L713.90,656.50 L714.50,656.50 L715.10,656.50 L715.70,656.50 L716.30,656.50 L716.90,656.50 L717.50,656.50 L718.10,656.50 L718.70,656.50 L719.30,656.50 L719.90,656.50 L720.50,656.50 L721.10,656.50 L721.70,656.50 L722.30,656.50 L722.90,656.50 L723.50,656.50 L724.10,656.50 L724.70,656.50 L725.30,656.50 L725.90,656.50 L726.50,656.50 L727.10,656.50 L727.70,656.50 L728.30,656.50 L728.90,656.50 L729.50,656.50 L730.10,656.50 L730.70,656.50 L731.30,656.50 L731.90,656.50 L732.50,656.50 L733.10,656.50 L733.70,656.50 L734.30,656.50 L734.90,656.50 L735.50,656.50 L736.10,656.50 L736.70,656.50 L737.30,656.50 L737.90,656.50 L738.50,656.50 L739.10,656.50 L739.70,656.50 L740.30,656.50 L740.90,656.50 L741.50,656.50 L742.10,656.50 L742.70,656.50 L743.30,656.50 L743.90,656.50 L744.50,656.50 L745.10,656.50 L745.70,656.50 L746.30,656.50 L746.90,656.50 L747.50,656.50 L748.10,656.50 L748.70,656.50 L749.30,656.50 L749.90,656.50 L750.50,656.50 L751.10,656.50 L751.70,656.50 L752.30,656.50 L752.90,656.50 L753.50,656.50 L754.10,656.50 L754.70,656.50 L755.30,656.50 L755.90,656.50 L756.50,656.50 L757.10,656.50 L757.70,656.50 L758.30,656.50 L758.90,656.50 L759.50,656.50 L760.10,656.50 L760.70,656.50 L761.30,656.50 L761.90,656.50 L762.50,656.50 L763.10,656.50 L763.70,656.50 L764.30,656.50 L764.90,656.50 L765.50,656.50 L766.10,656.50 L766.70,656.50 L767.30,656.50 L767.90,656.50 L768.50,656.50 L769.10,656.50 L769.70,656.50 L770.30,656.50 L770.90,656.50 L771.50,656.50 L772.10,656.50 L772.70,656.50 L773.30,656.50 L773.90,656.50 L774.50,656.50 L775.10,656.50 L775.70,656.50 L776.30,656.50 L776.90,656.50 L777.50,656.50 L778.10,656.50 L778.70,656.50 L779.30,656.50 L779.90,656.50 L780.50,656.50 L781.10,656.50 L781.70,656.50 L782.30,656.50 L782.90,656.50 L783.50,656.50 L784.10,656.50 L784.70,656.50 L785.30,656.50 L785.90,656.50 L786.50,656.50 L787.10,656.50 L787.70,656.50 L788.30,656.50 L788.90,656.50 L789.50,656.50 L790.10,656.50 L790.70,656.50 L791.30,656.50 L791.90,656.50 L792.50,656.50 L793.10,656.50 L793.70,656.50 L794.30,656.50 L794.90,656.50 L795.50,656.50 L796.10,656.50 L796.70,656.50 L797.30,656.50 L797.90,656.50 L798.50,656.50 L799.10,656.50 L799.70,656.50 L800.30,656.50 L800.90,656.50 L801.50,656.50 L802.10,656.50 L802.70,656.50 L803.30,656.50 L803.90,656.50 L804.50,656.50 L805.10,656.50 L805.70,656.50 L806.30,656.50 L806.90,656.50 L807.50,656.50 L808.10,656.50 L808.70,656.50 L809.30,656.50 L809.90,656.50 L810.50,656.50 L811.10,656.50 L811.70,656.50 L812.30,656.50 L812.90,656.50 L813.50,656.50 L814.10,656.50 L814.70,656.50 L815.30,656.50 L815.90,656.50 L816.50,656.50 L817.10,656.50 L817.70,656.50 L818.30,656.50 L818.90,656.50 L819.50,656.50 L820.10,656.50 L820.70,656.50 L821.30,656.50 L821.90,656.50 L822.50,656.50 L823.10,656.50 L823.70,656.50 L824.30,656.50 L824.90,656.50 L825.50,656.50 L826.10,656.50 L826.70,656.50 L827.30,656.50 L827.90,656.50 L828.50,656.50 L829.10,656.50 L829.70,656.50 L830.30,656.50 L830.90,656.50 L831.50,656.50 L832.10,656.50 L832.70,656.50 L833.30,656.50 L833.90,656.50 L834.50,656.50 L835.10,656.50 L835.70,656.50 L836.30,656.50 L836.90,656.50 L837.50,656.50 L838.10,656.50 L838.70,656.50 L839.30,656.50 L839.90,656.50 L840.50,656.50 L841.10,656.50 L841.70,656.50 L842.30,656.50 L842.90,656.50 L843.50,656.50 L844.10,656.50 L844.70,656.50 L845.30,656.50 L845.90,656.50 L846.50,656.50 L847.10,656.50 L847.70,656.50 L848.30,656.50 L848.90,656.50 L849.50,656.50 L850.10,656.50 L850.70,656.50 L851.30,656.50 L851.90,656.50 L852.50,656.50 L853.10,656.50 L853.70,656.50 L854.30,656.50 L854.90,656.50 L855.50,656.50 L856.10,656.50 L856.70,656.50 L857.30,656.50 L857.90,656.50 L858.50,656.50 L859.10,656.50 L859.70,656.50 L860.30,656.50 L860.90,656.50 L861.50,656.50 L862.10,656.50 L862.70,656.50 L863.30,656.50 L863.90,656.50 L864.50,656.50 L865.10,656.50 L865.70,656.50 L866.30,656.50 L866.90,656.50 L867.50,656.50 L868.10,656.50 L868.70,656.50 L869.30,656.50 L869.90,656.50 L870.50,656.50 L871.10,656.50 L871.70,656.50 L872.30,656.50 L872.90,656.50 L873.50,656.50 L874.10,656.50 L874.70,656.50 L875.30,656.50 L875.90,656.50 L876.50,656.50 L877.10,656.50 L877.70,656.50 L878.30,656.50 L878.90,656.50 L879.50,656.50 L880.10,656.50 L880.70,656.50 L881.30,656.50 L881.90,656.50 L882.50,656.50 L883.10,656.50 L883.70,656.50 L884.30,656.50 L884.90,656.50 L885.50,656.50 L886.10,656.50 L886.70,656.50 L887.30,656.50 L887.90,656.50 L888.50,656.50 L889.10,656.50 L889.70,656.50 L890.30,656.50 L890.90,656.50 L891.50,656.50 L892.10,656.50 L892.70,656.50 L893.30,656.50 L893.90,656.50 L894.50,656.50 L895.10,656.50 L895.70,656.50 L896.30,656.50 L896.90,656.50 L897.50,656.50 L898.10,656.50 L898.70,656.50 L899.30,656.50 L899.90,656.50 L900.50,656.50 L901.10,656.50 L901.70,656.50 L902.30,656.50 L902.90,656.50 L903.50,656.50 L904.10,656.50 L904.70,656.50 L905.30,656.50 L905.90,656.50 L906.50,656.50 L907.10,656.50 L907.70,656.50 L908.30,656.50 L908.90,656.50 L909.50,656.50 L910.10,656.50 L910.70,656.50 L911.30,656.50 L911.90,656.50 L912.50,656.50 L913.10,656.50 L913.70,656.50 L914.30,656.50 L914.90,656.50 L915.50,656.50 L916.10,656.50 L916.70,656.50 L917.30,656.50 L917.90,656.50 L918.50,656.50 L919.10,656.50 L919.70,656.50 L920.30,656.50 L920.90,656.50 L921.50,656.50 L922.10,656.50 L922.70,656.50 L923.30,656.50 L923.90,656.50 L924.50,656.50 L925.10,656.50 L925.70,656.50 L926.30,656.50 L926.90,656.50 L927.50,656.50 L928.10,656.50 L928.70,656.50 L929.30,656.50 L929.90,656.50 L930.50,656.50 L931.10,656.50 L931.70,656.50 L932.30,656.50 L932.90,656.50 L933.50,656.50 L934.10,656.50 L934.70,656.50 L935.30,656.50 L935.90,656.50 L936.50,656.50 L937.10,656.50 L937.70,656.50 L938.30,656.50 L938.90,656.50 L939.50,656.50 L940.10,656.50 L940.70,656.50 L941.30,656.50 L941.90,656.50 L942.50,656.50 L943.10,656.50 L943.70,656.50 L944.30,656.50 L944.90,656.50 L945.50,656.50 L946.10,656.50 L946.70,656.50 L947.30,656.50 L947.90,656.50 L948.50,656.50 L949.10,656.50 L949.70,656.50 L950.30,656.50 L950.90,656.50 L951.50,656.50 L952.10,656.50 L952.70,656.50 L953.30,656.50 L953.90,656.50 L954.50,656.50 L955.10,656.50 L955.70,656.50 L956.30,656.50 L956.90,656.50 L957.50,656.50 L958.10,656.50 L958.70,656.50 L959.30,656.50 L959.90,656.50 L960.50,656.50 L961.10,656.50 L961.70,656.50 L962.30,656.50 L962.90,656.50 L963.50,656.50 L964.10,656.50 L964.70,656.50 L965.30,656.50 L965.90,656.50 L966.50,656.50 L967.10,656.50 L967.70,656.50 L968.30,656.50 L968.90,656.50 L969.50,656.50 L970.10,656.50 L970.70,656.50 L971.30,656.50 L971.90,656.50 L972.50,656.50 L973.10,656.50 L973.70,656.50 L974.30,656.50 L974.90,656.50 L975.50,656.50 L976.10,656.50 L976.70,656.50 L977.30,656.50 L977.90,656.50 L978.50,656.50 L979.10,656.50 L979.70,656.50 L980.30,656.50 L980.90,656.50 L981.50,656.50 L982.10,656.50 L982.70,656.50 L983.30,656.50 L983.90,656.50 L984.50,656.50 L985.10,656.50 L985.70,656.50 L986.30,656.50 L986.90,656.50 L987.50,656.50 L988.10,656.50 L988.70,656.50 L989.30,656.50 L989.90,656.50 L990.50,656.50 L991.10,656.50 L991.70,656.50 L992.30,656.50 L992.90,656.50 L993.50,656.50 L994.10,656.50 L994.70,656.50 L995.30,656.50 L995.90,656.50 L996.50,656.50 L997.10,656.50 L997.70,656.50 L998.30,656.50 L998.90,656.50 L999.50,656.50 L1000.10,656.50 L1000.70,656.50 L1001.30,656.50 L1001.90,656.50 L1002.50,656.50 L1003.10,656.50 L1003.70,656.50 L1004.30,656.50 L1004.90,656.50 L1005.50,656.50 L1006.10,656.50 L1006.70,656.50 L1007.30,656.50 L1007.90,656.50 L1008.50,656.50 L1009.10,656.50 L1009.70,656.50 L1010.30,656.50 L1010.90,656.50 L1011.50,656.50 L1012.10,656.50 L1012.70,656.50 L1013.30,656.50 L1013.90,656.50 L1014.50,656.50 L1015.10,656.50 L1015.70,656.50 L1016.30,656.50 L1016.90,656.50 L1017.50,656.50 L1018.10,656.50 L1018.70,656.50 L1019.30,656.50 L1019.90,656.50 L1020.50,656.50 L1021.10,656.50 L1021.70,656.50 L1022.30,656.50 L1022.90,656.50 L1023.50,656.50 L1024.10,656.50 L1024.70,656.50 L1025.30,656.50 L1025.90,656.50 L1026.50,656.50 L1027.10,656.50 L1027.70,656.50 L1028.30,656.50 L1028.90,656.50 L1029.50,656.50 L1030.10,656.50 L1030.70,656.50 L1031.30,656.50 L1031.90,656.50 L1032.50,656.50 L1033.10,656.50 L1033.70,656.50 L1034.30,656.50 L1034.90,656.50 L1035.50,656.50 L1036.10,656.50 L1036.70,656.50 L1037.30,656.50 L1037.90,656.50 L1038.50,656.50 L1039.10,656.50 L1039.70,656.50 L1040.30,656.50 L1040.90,656.50 L1041.50,656.50 L1042.10,656.50 L1042.70,656.50 L1043.30,656.50 L1043.90,656.50 L1044.50,656.50 L1045.10,656.50 L1045.70,656.50 L1046.30,656.50 L1046.90,656.50 L1047.50,656.50 L1048.10,656.50 L1048.70,656.50 L1049.30,656.50 L1049.90,656.50 L1050.50,656.50 L1051.10,656.50 L1051.70,656.50 L1052.30,656.50 L1052.90,656.50 L1053.50,656.50 L1054.10,656.50 L1054.70,656.50 L1055.30,656.50 L1055.90,656.50 L1056.50,656.50 L1057.10,656.50 L1057.70,656.50 L1058.30,656.50 L1058.90,656.50 L1059.50,656.50 L1060.10,656.50 L1060.70,656.50 L1061.30,656.50 L1061.90,656.50 L1062.50,656.50 L1063.10,656.50 L1063.70,656.50 L1064.30,656.50 L1064.90,656.50 L1065.50,656.50 L1066.10,656.50 L1066.70,656.50 L1067.30,656.50 L1067.90,656.50 L1068.50,656.50 L1069.10,656.50 L1069.70,656.50 L1070.30,656.50 L1070.90,656.50 L1071.50,656.50 L1072.10,656.50 L1072.70,656.50 L1073.30,656.50 L1073.90,656.50 L1074.50,656.50 L1075.10,656.50 L1075.70,656.50 L1076.30,656.50 L1076.90,656.50 L1077.50,656.50 L1078.10,656.50 L1078.70,656.50 L1079.30,656.50 L1079.90,656.50 L1080.50,656.50 L1081.10,656.50 L1081.70,656.50 L1082.30,656.50 L1082.90,656.50 L1083.50,656.50 L1084.10,656.50 L1084.70,656.50 L1085.30,656.50 L1085.90,656.50 L1086.50,656.50 L1087.10,656.50 L1087.70,656.50 L1088.30,656.50 L1088.90,656.50 L1089.50,656.50 L1090.10,656.50 L1090.70,656.50 L1091.30,656.50 L1091.90,656.50 L1092.50,656.50 L1093.10,656.50 L1093.70,656.50 L1094.30,656.50 L1094.90,656.50 L1095.50,656.50 L1096.10,656.50 L1096.70,656.50 L1097.30,656.50 L1097.90,656.50 L1098.50,656.50 L1099.10,656.50 L1099.70,656.50 L1100.30,656.50 L1100.90,656.50 L1101.50,656.50 L1102.10,656.50 L1102.70,656.50 L1103.30,656.50 L1103.90,656.50 L1104.50,656.50 L1105.10,656.50 L1105.70,656.50 L1106.30,656.50 L1106.90,656.50 L1107.50,656.50 L1108.10,656.50 L1108.70,656.50 L1109.30,656.50 L1109.90,656.50 L1110.50,656.50 L1111.10,656.50 L1111.70,656.50 L1112.30,656.50 L1112.90,656.50 L1113.50,656.50 L1114.10,656.50 L1114.70,656.50 L1115.30,656.50 L1115.90,656.50 L1116.50,656.50 L1117.10,656.50 L1117.70,656.50 L1118.30,656.50 L1118.90,656.50 L1119.50,656.50 L1120.10,656.50 L1120.70,656.50 L1121.30,656.50 L1121.90,656.50 L1122.50,656.50 L1123.10,656.50 L1123.70,656.50 L1124.30,656.50 L1124.90,656.50 L1125.50,656.50 L1126.10,656.50 L1126.70,656.50 L1127.30,656.50 L1127.90,656.50 L1128.50,656.50 L1129.10,656.50 L1129.70,656.50 L1130.30,656.50 L1130.90,656.50 L1131.50,656.50 L1132.10,656.50 L1132.70,656.50 L1133.30,656.50 L1133.90,656.50 L1134.50,656.50 L1135.10,656.50 L1135.70,656.50 L1136.30,656.50 L1136.90,656.50 L1137.50,656.50 L1138.10,656.50 L1138.70,656.50 L1139.30,656.50 L1139.90,656.50 L1140.50,656.50 L1141.10,656.50 L1141.70,656.50 L1142.30,656.50 L1142.90,656.50 L1143.50,656.50 L1144.10,656.50 L1144.70,656.50 L1145.30,656.50 L1145.90,656.50 L1146.50,656.50 L1147.10,656.50 L1147.70,656.50 L1148.30,656.50 L1148.90,656.50 L1149.50,656.50 L1150.10,656.50 L1150.70,656.50 L1151.30,656.50 L1151.90,656.50 L1152.50,656.50 L1153.10,656.50 L1153.70,656.50 L1154.30,656.50 L1154.90,656.50 L1155.50,656.50 L1156.10,656.50 L1156.70,656.50 L1157.30,656.50 L1157.90,656.50 L1158.50,656.50 L1159.10,656.50 L1159.70,656.50 L1160.30,656.50 L1160.90,656.50 L1161.50,656.50 L1162.10,656.50 L1162.70,656.50 L1163.30,656.50 L1163.90,656.50 L1164.50,656.50 L1165.10,656.50 L1165.70,656.50 L1166.30,656.50 L1166.90,656.50 L1167.50,656.50 L1168.10,656.50 L1168.70,656.50 L1169.30,656.50 L1169.90,656.50 L1170.50,656.50 L1171.10,656.50 L1171.70,656.50 L1172.30,656.50 L1172.90,656.50 L1173.50,656.50 L1174.10,656.50 L1174.70,656.50 L1175.30,656.50 L1175.90,656.50 L1176.50,656.50 L1177.10,656.50 L1177.70,656.50 L1178.30,656.50 L1178.90,656.50 L1179.50,656.50 L1180.10,656.50 L1180.70,656.50 L1181.30,656.50 L1181.90,656.50 L1182.50,656.50 L1183.10,656.50 L1183.70,656.50 L1184.30,656.50 L1184.90,656.50 L1185.50,656.50 L1186.10,656.50 L1186.70,656.50 L1187.30,656.50 L1187.90,656.50 L1188.50,656.50 L1189.10,656.50 L1189.70,656.50 L1190.30,656.50 L1190.90,656.50 L1191.50,656.50 L1192.10,656.50 L1192.70,656.50 L1193.30,656.50 L1193.90,656.50 L1194.50,656.50 L1195.10,656.50 L1195.70,656.50 L1196.30,656.50 L1196.90,656.50 L1197.50,656.50 L1198.10,656.50 L1198.70,656.50 L1199.30,656.50 L1199.90,656.50 L1200.50,656.50 L1201.10,656.50 L1201.70,656.50 L1202.30,656.50 L1202.90,656.50 L1203.50,656.50 L1204.10,656.50 L1204.70,656.50 L1205.30,656.50 L1205.90,656.50 L1206.50,656.50 L1207.10,656.50 L1207.70,656.50 L1208.30,656.50 L1208.90,656.50 L1209.50,656.50 L1210.10,656.50 L1210.70,656.50 L1211.30,656.50 L1211.90,656.50 L1212.50,656.50 L1213.10,656.50 L1213.70,656.50 L1214.30,656.50 L1214.90,656.50 L1215.50,656.50 L1216.10,656.50 L1216.70,656.50 L1217.30,656.50 L1217.90,656.50 L1218.50,656.50 L1219.10,656.50" fill="none" stroke="#8AB8FF" stroke-width="1" stroke-linejoin="round" /><line x1="708.5" y1="579" x2="708.5" y2="697" stroke="rgba(204,204,220,0.6)" stroke-width="1" stroke-dasharray="2.5,3.5"/><rect x="336.20" y="731.00" width="13.5" height="4" rx="2" fill="#73BF69"/><text x="357.80" y="737.20" font-size="13" fill="#ccccdc" text-anchor="start" font-weight="400" letter-spacing="0.1">Memory used</text><rect x="447.80" y="731.00" width="13.5" height="4" rx="2" fill="#FADE2A"/><text x="469.40" y="737.20" font-size="13" fill="#ccccdc" text-anchor="start" font-weight="400" letter-spacing="0.1">Memory buffers</text><rect x="571.70" y="731.00" width="13.5" height="4" rx="2" fill="#8AB8FF"/><text x="593.30" y="737.20" font-size="13" fill="#ccccdc" text-anchor="start" font-weight="400" letter-spacing="0.1">Memory cached</text><rect x="697.40" y="731.00" width="13.5" height="4" rx="2" fill="#FF9830"/><text x="718.60" y="737.20" font-size="13" fill="#ccccdc" text-anchor="start" font-weight="400" letter-spacing="0.1">Memory free</text><rect x="803.30" y="731.00" width="13.5" height="4" rx="2" fill="#F2495C"/><text x="825.10" y="737.20" font-size="13" fill="#ccccdc" text-anchor="start" font-weight="400" letter-spacing="0.1">Memory available</text><rect x="936.00" y="731.00" width="13.5" height="4" rx="2" fill="#5794F2"/><text x="958.60" y="737.20" font-size="13" fill="#ccccdc" text-anchor="start" font-weight="400" letter-spacing="0.1">Memory total</text><text x="69.3" y="425.9" font-size="100" fill="#3274D9" stroke="#3274D9" stroke-width="1.6" letter-spacing="0.6">2.9</text><text transform="translate(218,425.9) scale(0.76,1)" font-size="62" fill="#3274D9" stroke="#3274D9" stroke-width="1.2">%</text><text x="52" y="691.0" font-size="96" fill="#c5c7ad" stroke="#c5c7ad" stroke-width="1.6" letter-spacing="-1.8">37.5</text><text transform="translate(237.5,691.0) scale(0.75,1)" font-size="60" fill="#c5c7ad" stroke="#c5c7ad" stroke-width="1.2">%</text><rect x="591.3" y="406.9" width="144.8" height="110.1" rx="2" fill="#22252b" stroke="rgba(204,204,220,0.08)"/><text x="599.60" y="429.20" font-size="13.6" fill="#ccccdc" text-anchor="start" font-weight="400" letter-spacing="0.15">2023-07-25 23:33:00</text><rect x="599.00" y="442.30" width="14.4" height="4" rx="2" fill="#73BF69"/><text x="621.3" y="448.70" font-size="12.8" fill="rgba(204,204,220,0.8)">cpu 0</text><text x="703.6" y="448.70" font-size="12.2" fill="rgba(204,204,220,0.8)" text-anchor="end" letter-spacing="-0.25">2.17%</text><rect x="599.00" y="461.00" width="14.4" height="4" rx="2" fill="#FADE2A"/><text x="621.3" y="467.40" font-size="12.8" fill="rgba(204,204,220,0.8)">cpu 1</text><text x="703.6" y="467.40" font-size="12.2" fill="rgba(204,204,220,0.8)" text-anchor="end" letter-spacing="-0.25">2.01%</text><rect x="599.00" y="479.10" width="14.4" height="4" rx="2" fill="#FF9830"/><text x="621.3" y="485.50" font-size="12.8" fill="#ffffff" stroke="#ffffff" stroke-width="0.55">cpu 3</text><text x="703.6" y="485.50" font-size="12.2" fill="#ffffff" text-anchor="end" letter-spacing="-0.25" stroke="#ffffff" stroke-width="0.55">1.96%</text><rect x="599.00" y="498.40" width="14.4" height="4" rx="2" fill="#8AB8FF"/><text x="621.3" y="504.80" font-size="12.8" fill="rgba(204,204,220,0.8)">cpu 2</text><text x="703.6" y="504.80" font-size="12.2" fill="rgba(204,204,220,0.8)" text-anchor="end" letter-spacing="-0.25">1.90%</text></svg>
<svg style="left:0;top:0" width="1250" height="761" viewBox="0 0 1250 761" font-family="Liberation Sans, sans-serif"><text x="55.00" y="25.00" font-size="15.7" fill="#ccccdc" font-weight="400" text-anchor="start" letter-spacing="-0.35" stroke="none" stroke-width="0">Home</text><text x="119.00" y="25.00" font-size="15.7" fill="#ccccdc" font-weight="400" text-anchor="start" letter-spacing="-0.38" stroke="none" stroke-width="0">Dashboards</text><text x="223.30" y="25.00" font-size="15.7" fill="#ccccdc" font-weight="400" text-anchor="start" letter-spacing="-0.33" stroke="none" stroke-width="0">Node Exporter</text><text x="346.30" y="25.00" font-size="15.7" fill="rgba(204,204,220,0.62)" font-weight="400" text-anchor="start" letter-spacing="-0.38" stroke="none" stroke-width="0">Node Overview</text><text x="617.00" y="25.00" font-size="15.2" fill="#ccccdc" font-weight="400" text-anchor="start" letter-spacing="0.37" stroke="none" stroke-width="0">2023-07-25 22:00:00 to 2023-07-26 01:59:59</text><text x="942.00" y="25.00" font-size="12.5" fill="#f5a145" font-weight="400" text-anchor="start" stroke="#f5a145" stroke-width="0.3">UTC</text><text x="35.50" y="57.40" font-size="17" fill="#ccccdc" font-weight="400" text-anchor="start" stroke="#ccccdc" stroke-width="0.22">Overview</text><text x="35.50" y="247.40" font-size="17" fill="#ccccdc" font-weight="400" text-anchor="start" letter-spacing="-0.6" stroke="#ccccdc" stroke-width="0.22">CPU</text><text x="35.50" y="513.90" font-size="17" fill="#ccccdc" font-weight="400" text-anchor="start" stroke="#ccccdc" stroke-width="0.22">Memory</text><text x="24.30" y="97.70" font-size="15.5" fill="#ccccdc" font-weight="400" text-anchor="start" letter-spacing="-0.15" stroke="#ccccdc" stroke-width="0.22">Uptime</text><text x="165.00" y="132.40" font-size="20.8" fill="#ccccdc" font-weight="400" text-anchor="middle" letter-spacing="0.15" stroke="#ccccdc" stroke-width="0.22">1 week, 2 days</text><text x="332.30" y="97.70" font-size="15.5" fill="#ccccdc" font-weight="400" text-anchor="start" letter-spacing="-0.15" stroke="#ccccdc" stroke-width="0.22">Hostname</text><text x="473.00" y="132.40" font-size="20.8" fill="#ccccdc" font-weight="400" text-anchor="middle" letter-spacing="1.2" stroke="#ccccdc" stroke-width="0.22">395f308</text><text x="640.30" y="97.70" font-size="15.5" fill="#ccccdc" font-weight="400" text-anchor="start" letter-spacing="-0.15" stroke="#ccccdc" stroke-width="0.22">Kernel version</text><text x="781.00" y="132.40" font-size="20.8" fill="#ccccdc" font-weight="400" text-anchor="middle" letter-spacing="0.22" stroke="#ccccdc" stroke-width="0.22">5.15.34-v7</text><text x="947.30" y="97.70" font-size="15.5" fill="#ccccdc" font-weight="400" text-anchor="start" letter-spacing="-1.5" stroke="#ccccdc" stroke-width="0.22">OS</text><text x="1088.00" y="132.40" font-size="20.8" fill="#ccccdc" font-weight="400" text-anchor="middle" letter-spacing="0.3" stroke="#ccccdc" stroke-width="0.22">No data</text><text x="24.30" y="174.40" font-size="15.5" fill="#ccccdc" font-weight="400" text-anchor="start" letter-spacing="-0.55" stroke="#ccccdc" stroke-width="0.22">CPU Count</text><text x="165.00" y="208.40" font-size="20.8" fill="#ccccdc" font-weight="400" text-anchor="middle" stroke="#ccccdc" stroke-width="0.22">4</text><text x="332.30" y="174.40" font-size="15.5" fill="#ccccdc" font-weight="400" text-anchor="start" letter-spacing="0.05" stroke="#ccccdc" stroke-width="0.22">Memory Total</text><text x="473.00" y="208.40" font-size="20.8" fill="#ccccdc" font-weight="400" text-anchor="middle" stroke="#ccccdc" stroke-width="0.22"><tspan letter-spacing="-0.9">971</tspan><tspan font-size="15.8" dx="5">MiB</tspan></text><text x="640.30" y="174.40" font-size="15.5" fill="#ccccdc" font-weight="400" text-anchor="start" letter-spacing="-0.15" stroke="#ccccdc" stroke-width="0.22">Total swap</text><text x="781.00" y="208.40" font-size="20.8" fill="#ccccdc" font-weight="400" text-anchor="middle" stroke="#ccccdc" stroke-width="0.22"><tspan letter-spacing="0.9">486</tspan><tspan font-size="15.8" dx="5">MiB</tspan></text><text x="947.30" y="174.40" font-size="15.5" fill="#ccccdc" font-weight="400" text-anchor="start" letter-spacing="-0.15" stroke="#ccccdc" stroke-width="0.22">Root mount size</text><text x="1088.00" y="208.40" font-size="20.8" fill="#ccccdc" font-weight="400" text-anchor="middle" letter-spacing="0.3" stroke="#ccccdc" stroke-width="0.22">No data</text><text x="24.10" y="287.80" font-size="15.5" fill="#ccccdc" font-weight="400" text-anchor="start" letter-spacing="-0.55" stroke="#ccccdc" stroke-width="0.22">CPU Usage</text><text x="332.30" y="287.80" font-size="15.5" fill="#ccccdc" font-weight="400" text-anchor="start" letter-spacing="-0.55" stroke="#ccccdc" stroke-width="0.22">CPU Usage</text><text x="947.30" y="287.80" font-size="15.5" fill="#ccccdc" font-weight="400" text-anchor="start" letter-spacing="-0.2" stroke="#ccccdc" stroke-width="0.22">Load Average</text><text x="24.20" y="554.30" font-size="15.5" fill="#ccccdc" font-weight="400" text-anchor="start" letter-spacing="-0.2" stroke="#ccccdc" stroke-width="0.22">Memory Usage</text><text x="332.50" y="554.30" font-size="15.5" fill="#ccccdc" font-weight="400" text-anchor="start" letter-spacing="-0.2" stroke="#ccccdc" stroke-width="0.22">Memory Usage</text></svg>
</body></html>
